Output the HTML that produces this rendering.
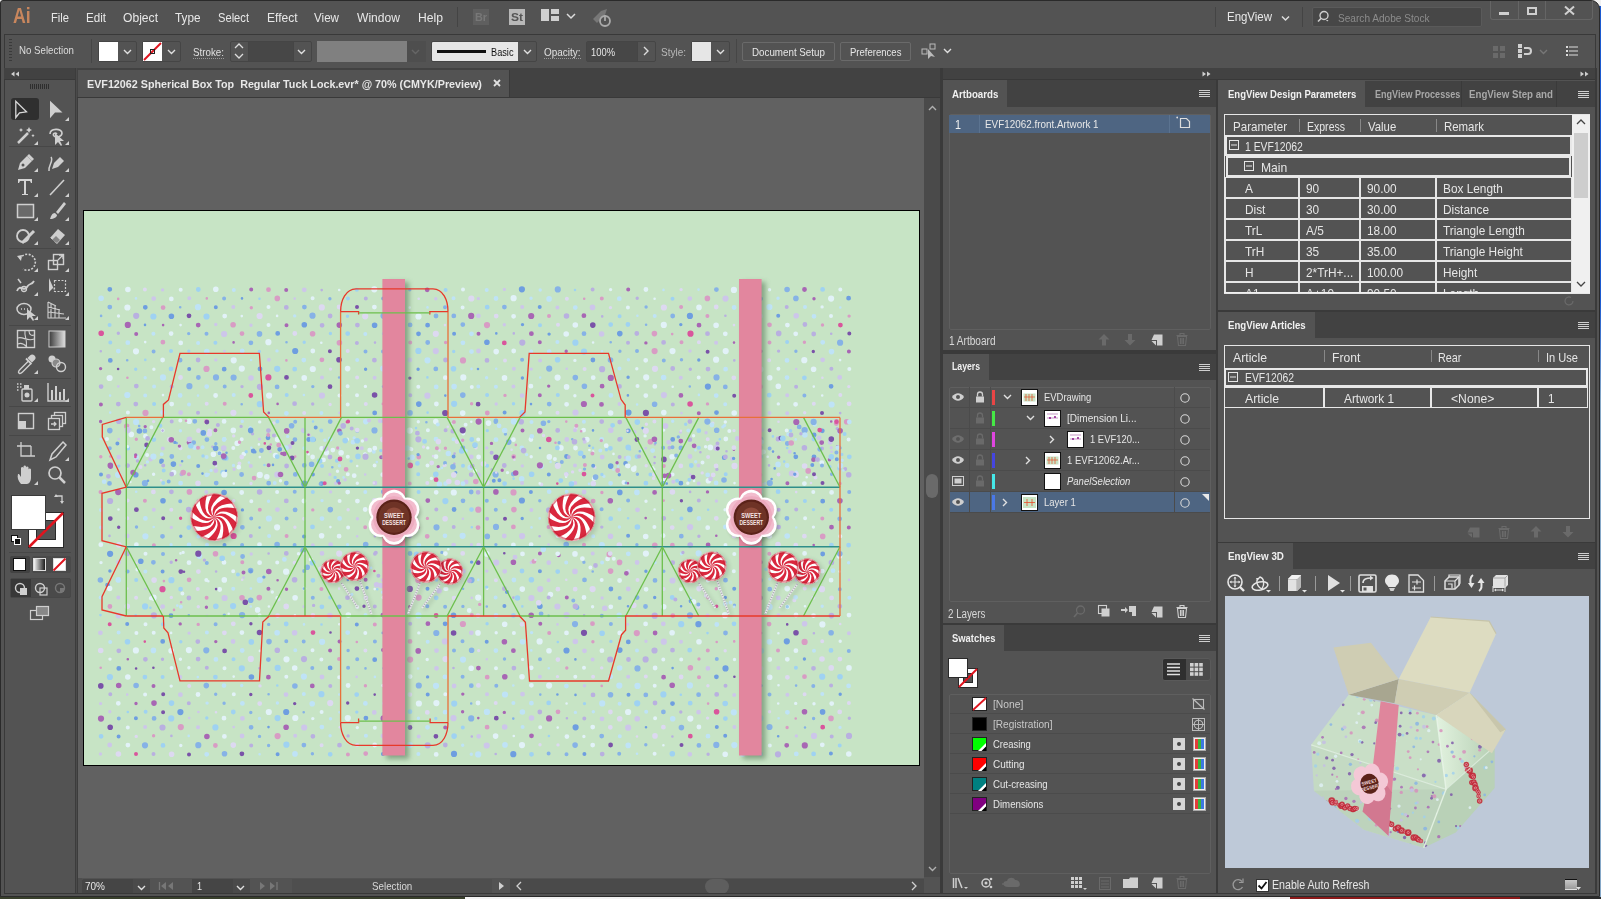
<!DOCTYPE html><html><head><meta charset="utf-8"><style>
*{box-sizing:border-box;margin:0;padding:0}
html,body{width:1601px;height:899px;overflow:hidden;background:#3a3a3a}
body{font-family:"Liberation Sans",sans-serif;font-size:11px;color:#e6e6e6;position:relative}
.a{position:absolute}
.t{position:absolute;white-space:nowrap;line-height:1;transform-origin:0 0}
svg{overflow:visible}
</style></head><body>
<div class="a" style="left:0px;top:0px;width:1601px;height:899px;background:#2f2f2f"></div><div class="a" style="left:1599px;top:0px;width:2px;height:899px;background:linear-gradient(#1c5ad0 0,#1c5ad0 300px,#86a8c8 400px,#86a8c8 899px)"></div><div class="a" style="left:1590px;top:0px;width:11px;height:6px;background:#f0f0f0"></div><div class="a" style="left:0px;top:0px;width:4px;height:2px;background:#f0f0f0"></div><div class="a" style="left:0px;top:0px;width:2px;height:4px;background:#f0f0f0"></div><div class="a" style="left:0px;top:0px;width:1600px;height:897px;background:#535353;border:1px solid #2a2a2a;border-radius:3px 9px 0 0"></div><div class="a" style="left:0px;top:897px;width:465px;height:2px;background:#39402c"></div><div class="a" style="left:465px;top:897px;width:825px;height:2px;background:#f2f2f2"></div><div class="a" style="left:1290px;top:897px;width:230px;height:2px;background:#8a1a1a"></div><div class="a" style="left:1520px;top:897px;width:81px;height:2px;background:#2a2a2a"></div><div class="t" style="left:12.7px;top:4.81px;font-size:22px;color:#c8865d;font-weight:bold;transform:scaleX(0.805);">Ai</div><div class="t" style="left:51px;top:11.02px;font-size:13px;color:#e8e8e8;transform:scaleX(0.859);">File</div><div class="t" style="left:86px;top:11.02px;font-size:13px;color:#e8e8e8;transform:scaleX(0.893);">Edit</div><div class="t" style="left:123px;top:11.02px;font-size:13px;color:#e8e8e8;transform:scaleX(0.932);">Object</div><div class="t" style="left:175px;top:11.02px;font-size:13px;color:#e8e8e8;transform:scaleX(0.905);">Type</div><div class="t" style="left:218px;top:11.02px;font-size:13px;color:#e8e8e8;transform:scaleX(0.858);">Select</div><div class="t" style="left:267px;top:11.02px;font-size:13px;color:#e8e8e8;transform:scaleX(0.924);">Effect</div><div class="t" style="left:314px;top:11.02px;font-size:13px;color:#e8e8e8;transform:scaleX(0.895);">View</div><div class="t" style="left:357px;top:11.02px;font-size:13px;color:#e8e8e8;transform:scaleX(0.930);">Window</div><div class="t" style="left:418px;top:11.02px;font-size:13px;color:#e8e8e8;transform:scaleX(0.935);">Help</div><div class="a" style="left:457px;top:7px;width:1px;height:20px;background:#444"></div><div class="a" style="left:473px;top:9px;width:16px;height:16px;background:#5f5f5f"></div><div class="t" style="left:475px;top:11.71px;font-size:11px;color:#787878;font-weight:bold;transform:scaleX(0.982);">Br</div><div class="a" style="left:509px;top:9px;width:16px;height:16px;background:#b8b8b8"></div><div class="t" style="left:511px;top:11.71px;font-size:11px;color:#555;font-weight:bold;transform:scaleX(1.091);">St</div><svg class="a" style="left:541px;top:9px;" width="18" height="12" viewBox="0 0 18 12"><rect x="0" y="0" width="8" height="12" fill="#cfcfcf"/><rect x="10" y="0" width="8" height="5" fill="#cfcfcf"/><rect x="10" y="7" width="8" height="5" fill="#cfcfcf"/></svg><svg class="a" style="left:566px;top:13px;" width="10" height="6" viewBox="0 0 10 6"><path d="M1 1l4 4 4-4" stroke="#dcdcdc" stroke-width="1.5" fill="none"/></svg><svg class="a" style="left:591px;top:7px;" width="22" height="20" viewBox="0 0 22 20"><path d="M2 12 L10 4 L16 2 L14 8 L6 16 Z" fill="#777"/><circle cx="14" cy="14" r="5" fill="none" stroke="#aaa" stroke-width="1.8"/><path d="M14 8v6" stroke="#aaa" stroke-width="1.8"/></svg><div class="a" style="left:1215px;top:7px;width:1px;height:20px;background:#444"></div><div class="t" style="left:1227px;top:10.43px;font-size:13.4px;color:#e8e8e8;transform:scaleX(0.855);">EngView</div><svg class="a" style="left:1281px;top:16px;" width="9" height="5" viewBox="0 0 9 5"><path d="M1 0.5l3.5 3.5 3.5-3.5" stroke="#dcdcdc" stroke-width="1.5" fill="none"/></svg><div class="a" style="left:1302px;top:7px;width:1px;height:20px;background:#444"></div><div class="a" style="left:1312px;top:7px;width:170px;height:20px;background:#474747;border:1px solid #5a5a5a;border-radius:2px"></div><svg class="a" style="left:1317px;top:10px;" width="14" height="14" viewBox="0 0 14 14"><circle cx="7" cy="5.5" r="4" fill="none" stroke="#cfcfcf" stroke-width="1.4"/><path d="M4.2 8.3 L1 11.5" stroke="#cfcfcf" stroke-width="1.6"/><path d="M9 10l2.5 0 -1.25 1.5z" fill="#cfcfcf"/></svg><div class="t" style="left:1338px;top:11.95px;font-size:11.6px;color:#8c8c8c;transform:scaleX(0.871);">Search Adobe Stock</div><div class="a" style="left:1490px;top:1px;width:103px;height:19px;border:1px solid #656565;border-top:none;border-radius:0 0 3px 3px"></div><div class="a" style="left:1518px;top:1px;width:1px;height:18px;background:#656565"></div><div class="a" style="left:1545px;top:1px;width:1px;height:18px;background:#656565"></div><div class="a" style="left:1499px;top:12px;width:10px;height:3px;background:#cfcfcf"></div><div class="a" style="left:1527px;top:7px;width:10px;height:8px;border:2px solid #cfcfcf"></div><svg class="a" style="left:1564px;top:6px;" width="11" height="9" viewBox="0 0 11 9"><path d="M1 0.5 L10 8.5 M10 0.5 L1 8.5" stroke="#d0d0d0" stroke-width="2"/></svg><div class="a" style="left:4px;top:34px;width:1592px;height:35px;background:#535353;border:1px solid #393939"></div><div class="a" style="left:9px;top:39px;width:3px;height:1px;background:#3a3a3a"></div><div class="a" style="left:9px;top:42px;width:3px;height:1px;background:#3a3a3a"></div><div class="a" style="left:9px;top:45px;width:3px;height:1px;background:#3a3a3a"></div><div class="a" style="left:9px;top:48px;width:3px;height:1px;background:#3a3a3a"></div><div class="a" style="left:9px;top:51px;width:3px;height:1px;background:#3a3a3a"></div><div class="a" style="left:9px;top:54px;width:3px;height:1px;background:#3a3a3a"></div><div class="a" style="left:9px;top:57px;width:3px;height:1px;background:#3a3a3a"></div><div class="a" style="left:9px;top:60px;width:3px;height:1px;background:#3a3a3a"></div><div class="t" style="left:19px;top:44.84px;font-size:11.2px;color:#dcdcdc;transform:scaleX(0.866);">No Selection</div><div class="a" style="left:91px;top:39px;width:1px;height:24px;background:#464646"></div><div class="a" style="left:98px;top:41px;width:39px;height:21px;border:1px solid #454545;border-radius:2px"></div><div class="a" style="left:99px;top:42px;width:19px;height:19px;background:#fff"></div><svg class="a" style="left:123px;top:49px;" width="9" height="6" viewBox="0 0 9 6"><path d="M1 1l3.5 3.5 3.5-3.5" stroke="#e0e0e0" stroke-width="1.4" fill="none"/></svg><div class="a" style="left:142px;top:41px;width:39px;height:21px;border:1px solid #454545;border-radius:2px"></div><div class="a" style="left:143px;top:42px;width:19px;height:19px;background:#fff"></div><svg class="a" style="left:143px;top:42px;" width="19" height="19" viewBox="0 0 19 19"><path d="M1 18 L18 1" stroke="#e0141e" stroke-width="2"/><rect x="7.5" y="7.5" width="4" height="4" fill="none" stroke="#222" stroke-width="1"/></svg><svg class="a" style="left:167px;top:49px;" width="9" height="6" viewBox="0 0 9 6"><path d="M1 1l3.5 3.5 3.5-3.5" stroke="#e0e0e0" stroke-width="1.4" fill="none"/></svg><div class="t" style="left:193px;top:46.99px;font-size:10.9px;color:#e0e0e0;transform:scaleX(0.898);">Stroke:</div><div class="a" style="left:193px;top:58px;width:31px;height:1px;border-top:1px dotted #9a9a9a"></div><div class="a" style="left:230px;top:41px;width:82px;height:21px;border:1px solid #454545;border-radius:2px"></div><div class="a" style="left:248px;top:42px;width:1px;height:19px;background:#454545"></div><div class="a" style="left:249px;top:42px;width:44px;height:19px;background:#474747"></div><div class="a" style="left:293px;top:42px;width:1px;height:19px;background:#454545"></div><svg class="a" style="left:234px;top:43px;" width="10" height="16" viewBox="0 0 10 16"><path d="M1 5l4-4 4 4M1 11l4 4 4-4" stroke="#dcdcdc" stroke-width="1.3" fill="none"/></svg><svg class="a" style="left:297px;top:49px;" width="9" height="6" viewBox="0 0 9 6"><path d="M1 1l3.5 3.5 3.5-3.5" stroke="#e0e0e0" stroke-width="1.4" fill="none"/></svg><div class="a" style="left:317px;top:41px;width:90px;height:21px;background:#808080"></div><div class="a" style="left:407px;top:41px;width:19px;height:21px;background:#4e4e4e"></div><svg class="a" style="left:411px;top:49px;" width="9" height="6" viewBox="0 0 9 6"><path d="M1 1l3.5 3.5 3.5-3.5" stroke="#666" stroke-width="1.4" fill="none"/></svg><div class="a" style="left:432px;top:42px;width:86px;height:19px;background:#e6e6e6"></div><div class="a" style="left:437px;top:50px;width:49px;height:3px;background:#111"></div><div class="t" style="left:490.5px;top:46.99px;font-size:10.9px;color:#111;transform:scaleX(0.844);">Basic</div><div class="a" style="left:431px;top:41px;width:106px;height:21px;border:1px solid #454545;border-radius:2px"></div><svg class="a" style="left:523px;top:49px;" width="9" height="6" viewBox="0 0 9 6"><path d="M1 1l3.5 3.5 3.5-3.5" stroke="#e0e0e0" stroke-width="1.4" fill="none"/></svg><div class="t" style="left:544px;top:46.99px;font-size:10.9px;color:#e0e0e0;transform:scaleX(0.913);">Opacity:</div><div class="a" style="left:544px;top:58px;width:37px;height:1px;border-top:1px dotted #9a9a9a"></div><div class="a" style="left:586px;top:41px;width:70px;height:21px;border:1px solid #454545;border-radius:2px"></div><div class="a" style="left:587px;top:42px;width:50px;height:19px;background:#474747"></div><div class="t" style="left:590.5px;top:46.99px;font-size:10.9px;color:#e6e6e6;transform:scaleX(0.861);">100%</div><div class="a" style="left:637px;top:42px;width:1px;height:19px;background:#454545"></div><svg class="a" style="left:643px;top:46px;" width="6" height="10" viewBox="0 0 6 10"><path d="M1 1l4 4-4 4" stroke="#dcdcdc" stroke-width="1.4" fill="none"/></svg><div class="t" style="left:661px;top:46.99px;font-size:10.9px;color:#b8b8b8;transform:scaleX(0.917);">Style:</div><div class="a" style="left:691px;top:41px;width:39px;height:21px;border:1px solid #454545;border-radius:2px"></div><div class="a" style="left:692px;top:42px;width:19px;height:19px;background:#e6e6e6"></div><svg class="a" style="left:716px;top:49px;" width="9" height="6" viewBox="0 0 9 6"><path d="M1 1l3.5 3.5 3.5-3.5" stroke="#e0e0e0" stroke-width="1.4" fill="none"/></svg><div class="a" style="left:736px;top:39px;width:1px;height:24px;background:#464646"></div><div class="a" style="left:742px;top:42px;width:93px;height:19px;border:1px solid #6a6a6a;border-radius:2px"></div><div class="t" style="left:752px;top:46.99px;font-size:10.9px;color:#e6e6e6;transform:scaleX(0.899);">Document Setup</div><div class="a" style="left:840px;top:42px;width:71px;height:19px;border:1px solid #6a6a6a;border-radius:2px"></div><div class="t" style="left:849.5px;top:46.99px;font-size:10.9px;color:#e6e6e6;transform:scaleX(0.876);">Preferences</div><svg class="a" style="left:921px;top:43px;" width="16" height="16" viewBox="0 0 16 16"><rect x="9" y="1" width="5" height="5" fill="none" stroke="#bbb" stroke-width="1"/><rect x="1" y="6" width="5" height="5" fill="none" stroke="#bbb" stroke-width="1"/><path d="M7 6 L7 16 L10 13 L14 14 Z" fill="#bbb"/></svg><svg class="a" style="left:943px;top:48px;" width="9" height="6" viewBox="0 0 9 6"><path d="M1 1l3.5 3.5 3.5-3.5" stroke="#e0e0e0" stroke-width="1.4" fill="none"/></svg><svg class="a" style="left:1491px;top:44px;" width="16" height="16" viewBox="0 0 16 16"><rect x="2" y="2" width="5" height="5" fill="#6a6a6a"/><rect x="9" y="2" width="5" height="5" fill="#6a6a6a"/><rect x="2" y="9" width="5" height="5" fill="#6a6a6a"/><rect x="9" y="9" width="5" height="5" fill="#6a6a6a"/></svg><svg class="a" style="left:1517px;top:43px;" width="16" height="16" viewBox="0 0 16 16"><rect x="1" y="1" width="4" height="4" fill="#d0d0d0"/><rect x="1" y="6" width="4" height="4" fill="#d0d0d0"/><rect x="1" y="11" width="4" height="4" fill="#d0d0d0"/><path d="M7 5 H11 A3 3 0 0 1 11 11 H7" stroke="#d0d0d0" stroke-width="2" fill="none"/></svg><svg class="a" style="left:1539px;top:49px;" width="9" height="6" viewBox="0 0 9 6"><path d="M1 1l3.5 3.5 3.5-3.5" stroke="#777" stroke-width="1.4" fill="none"/></svg><svg class="a" style="left:1566px;top:46px;" width="12" height="10" viewBox="0 0 12 10"><rect x="0" y="0" width="2" height="2" fill="#ddd"/><rect x="0" y="4" width="2" height="2" fill="#ddd"/><rect x="0" y="8" width="2" height="2" fill="#ddd"/><rect x="3" y="0.5" width="9" height="1" fill="#ddd"/><rect x="3" y="4.5" width="9" height="1" fill="#ddd"/><rect x="3" y="8.5" width="9" height="1" fill="#ddd"/></svg><div class="a" style="left:4px;top:68px;width:72px;height:12px;background:#424242;border-bottom:1px solid #393939"></div><svg class="a" style="left:10px;top:71px;" width="10" height="6" viewBox="0 0 10 6"><path d="M4.5 0.5 L1 3 L4.5 5.5Z M9 0.5 L5.5 3 L9 5.5Z" fill="#cfcfcf"/></svg><div class="a" style="left:4px;top:80px;width:72px;height:814px;background:#535353;border-left:1px solid #393939;border-right:1px solid #393939;border-bottom:1px solid #393939"></div><div class="a" style="left:75px;top:68px;width:3px;height:826px;background:#3c3c3c"></div><div class="a" style="left:76px;top:68px;width:1px;height:826px;background:#4a4a4a"></div><div class="a" style="left:30px;top:84px;width:1px;height:5px;background:#2e2e2e"></div><div class="a" style="left:32px;top:84px;width:1px;height:5px;background:#2e2e2e"></div><div class="a" style="left:34px;top:84px;width:1px;height:5px;background:#2e2e2e"></div><div class="a" style="left:36px;top:84px;width:1px;height:5px;background:#2e2e2e"></div><div class="a" style="left:38px;top:84px;width:1px;height:5px;background:#2e2e2e"></div><div class="a" style="left:40px;top:84px;width:1px;height:5px;background:#2e2e2e"></div><div class="a" style="left:42px;top:84px;width:1px;height:5px;background:#2e2e2e"></div><div class="a" style="left:44px;top:84px;width:1px;height:5px;background:#2e2e2e"></div><div class="a" style="left:46px;top:84px;width:1px;height:5px;background:#2e2e2e"></div><div class="a" style="left:48px;top:84px;width:1px;height:5px;background:#2e2e2e"></div><div class="a" style="left:11px;top:98px;width:28px;height:22px;background:#2f2f2f;border-radius:3px"></div><svg class="a" style="left:15px;top:100px;" width="22" height="22" viewBox="0 0 22 22"><path d="M0.8 1.2 L0.8 17.5 L4.5 12.8 L11.5 11.8 Z" fill="none" stroke="#d8d8d8" stroke-width="1.3" stroke-linejoin="miter"/></svg><svg class="a" style="left:46px;top:100px;" width="22" height="22" viewBox="0 0 22 22"><path d="M4 0.8 L4 18.3 L9 12.5 L16.5 12.5 Z" fill="#cfcfcf"/></svg><svg class="a" style="left:65px;top:117px;" width="4" height="4" viewBox="0 0 4 4"><path d="M4 0 L4 4 L0 4Z" fill="#d0d0d0"/></svg><svg class="a" style="left:15px;top:124px;" width="22" height="22" viewBox="0 0 22 22"><path d="M3 19 L13 9" stroke="#cfcfcf" stroke-width="2.5"/><path d="M14 3l1 2 2 1-2 1-1 2-1-2-2-1 2-1z M6 4l.7 1.3 1.3.7-1.3.7-.7 1.3-.7-1.3-1.3-.7 1.3-.7z M18 10l.6 1 1 .6-1 .6-.6 1-.6-1-1-.6 1-.6z" fill="#cfcfcf"/></svg><svg class="a" style="left:34px;top:141px;" width="4" height="4" viewBox="0 0 4 4"><path d="M4 0 L4 4 L0 4Z" fill="#d0d0d0"/></svg><svg class="a" style="left:46px;top:124px;" width="22" height="22" viewBox="0 0 22 22"><path d="M4 10 C4 4 16 4 16 9 C16 13 10 14 8 12 C6 10 9 8 11 10" fill="none" stroke="#cfcfcf" stroke-width="1.6"/><path d="M9 9 L9 21 L12 18 L15 22 L16 21 L14 17 L18 17Z" fill="#cfcfcf"/></svg><svg class="a" style="left:65px;top:141px;" width="4" height="4" viewBox="0 0 4 4"><path d="M4 0 L4 4 L0 4Z" fill="#d0d0d0"/></svg><div class="a" style="left:9px;top:146px;width:62px;height:1px;background:#474747"></div><svg class="a" style="left:15px;top:151px;" width="22" height="22" viewBox="0 0 22 22"><path d="M3 19 L5 12 L12 5 L17 10 L10 17 Z" fill="#cfcfcf"/><path d="M12 5 L14 3 L19 8 L17 10Z" fill="#cfcfcf"/><circle cx="8" cy="14" r="1.5" fill="#535353"/></svg><svg class="a" style="left:34px;top:168px;" width="4" height="4" viewBox="0 0 4 4"><path d="M4 0 L4 4 L0 4Z" fill="#d0d0d0"/></svg><svg class="a" style="left:46px;top:151px;" width="22" height="22" viewBox="0 0 22 22"><path d="M3 20 C2 14 8 10 5 6" fill="none" stroke="#cfcfcf" stroke-width="1.5"/><path d="M6 18 L8 12 L14 6 L18 10 L12 16Z" fill="#cfcfcf"/></svg><svg class="a" style="left:65px;top:168px;" width="4" height="4" viewBox="0 0 4 4"><path d="M4 0 L4 4 L0 4Z" fill="#d0d0d0"/></svg><svg class="a" style="left:15px;top:176px;" width="22" height="22" viewBox="0 0 22 22"><path d="M3 3 H17 V7 H16 L15 5 H11 V18 H13 V19 H7 V18 H9 V5 H5 L4 7 H3Z" fill="#d4d4d4"/></svg><svg class="a" style="left:34px;top:193px;" width="4" height="4" viewBox="0 0 4 4"><path d="M4 0 L4 4 L0 4Z" fill="#d0d0d0"/></svg><svg class="a" style="left:46px;top:176px;" width="22" height="22" viewBox="0 0 22 22"><path d="M4 19 L18 4" stroke="#cfcfcf" stroke-width="1.6"/></svg><svg class="a" style="left:65px;top:193px;" width="4" height="4" viewBox="0 0 4 4"><path d="M4 0 L4 4 L0 4Z" fill="#d0d0d0"/></svg><svg class="a" style="left:15px;top:200px;" width="22" height="22" viewBox="0 0 22 22"><rect x="2.5" y="4.5" width="16" height="13" fill="#6a6a6a" stroke="#cfcfcf" stroke-width="1.5"/></svg><svg class="a" style="left:34px;top:217px;" width="4" height="4" viewBox="0 0 4 4"><path d="M4 0 L4 4 L0 4Z" fill="#d0d0d0"/></svg><svg class="a" style="left:46px;top:200px;" width="22" height="22" viewBox="0 0 22 22"><path d="M18 2 L10 12 L12 14 L20 4Z" fill="#cfcfcf"/><path d="M9 13 C6 13 5 16 4 19 C8 19 11 17 11 15Z" fill="#cfcfcf"/></svg><svg class="a" style="left:65px;top:217px;" width="4" height="4" viewBox="0 0 4 4"><path d="M4 0 L4 4 L0 4Z" fill="#d0d0d0"/></svg><svg class="a" style="left:15px;top:224px;" width="22" height="22" viewBox="0 0 22 22"><circle cx="8" cy="12" r="6" fill="none" stroke="#cfcfcf" stroke-width="1.8"/><path d="M7 19 L19 7" stroke="#cfcfcf" stroke-width="3"/></svg><svg class="a" style="left:34px;top:241px;" width="4" height="4" viewBox="0 0 4 4"><path d="M4 0 L4 4 L0 4Z" fill="#d0d0d0"/></svg><svg class="a" style="left:46px;top:224px;" width="22" height="22" viewBox="0 0 22 22"><path d="M4 14 L12 5 L19 11 L11 20 Z" fill="#cfcfcf"/><path d="M4 14 L8 18" stroke="#535353" stroke-width="1"/><path d="M6 16 L10 12 L14 16 L11 19Z" fill="#535353" opacity="0.6"/></svg><svg class="a" style="left:65px;top:241px;" width="4" height="4" viewBox="0 0 4 4"><path d="M4 0 L4 4 L0 4Z" fill="#d0d0d0"/></svg><div class="a" style="left:9px;top:248px;width:62px;height:1px;background:#474747"></div><svg class="a" style="left:15px;top:251px;" width="22" height="22" viewBox="0 0 22 22"><path d="M5 8 A8 8 0 1 1 8 18" fill="none" stroke="#cfcfcf" stroke-width="1.6" stroke-dasharray="2 1.5"/><path d="M2 5 L7 4 L6 10Z" fill="#cfcfcf"/></svg><svg class="a" style="left:34px;top:268px;" width="4" height="4" viewBox="0 0 4 4"><path d="M4 0 L4 4 L0 4Z" fill="#d0d0d0"/></svg><svg class="a" style="left:46px;top:251px;" width="22" height="22" viewBox="0 0 22 22"><rect x="2.5" y="9.5" width="9" height="9" fill="none" stroke="#cfcfcf" stroke-width="1.4"/><rect x="7.5" y="3.5" width="10" height="10" fill="none" stroke="#cfcfcf" stroke-width="1.4"/><path d="M12 9 L17 4 M13 4 H17 V8" stroke="#cfcfcf" stroke-width="1.3" fill="none"/></svg><svg class="a" style="left:65px;top:268px;" width="4" height="4" viewBox="0 0 4 4"><path d="M4 0 L4 4 L0 4Z" fill="#d0d0d0"/></svg><svg class="a" style="left:15px;top:275px;" width="22" height="22" viewBox="0 0 22 22"><path d="M2 16 C5 8 9 18 12 12 C14 8 17 10 19 6" fill="none" stroke="#cfcfcf" stroke-width="1.8"/><circle cx="9" cy="14" r="2.5" fill="none" stroke="#cfcfcf" stroke-width="1.3"/><path d="M3 4 L6 8" stroke="#cfcfcf" stroke-width="1.5"/></svg><svg class="a" style="left:34px;top:292px;" width="4" height="4" viewBox="0 0 4 4"><path d="M4 0 L4 4 L0 4Z" fill="#d0d0d0"/></svg><svg class="a" style="left:46px;top:275px;" width="22" height="22" viewBox="0 0 22 22"><path d="M3 3 L3 17 L7 13 L10 19Z" fill="#cfcfcf"/><rect x="8.5" y="5.5" width="11" height="11" fill="none" stroke="#cfcfcf" stroke-width="1.2" stroke-dasharray="2 1.5"/></svg><svg class="a" style="left:65px;top:292px;" width="4" height="4" viewBox="0 0 4 4"><path d="M4 0 L4 4 L0 4Z" fill="#d0d0d0"/></svg><svg class="a" style="left:15px;top:299px;" width="22" height="22" viewBox="0 0 22 22"><ellipse cx="9" cy="10" rx="7" ry="5.5" fill="none" stroke="#cfcfcf" stroke-width="1.5"/><path d="M6 10h1M9 10h1M12 10h1" stroke="#cfcfcf" stroke-width="1.4"/><path d="M12 10 L12 21 L15 18 L18 22 L19 21 L17 17 L21 17Z" fill="#cfcfcf"/></svg><svg class="a" style="left:34px;top:316px;" width="4" height="4" viewBox="0 0 4 4"><path d="M4 0 L4 4 L0 4Z" fill="#d0d0d0"/></svg><svg class="a" style="left:46px;top:299px;" width="22" height="22" viewBox="0 0 22 22"><path d="M2 3 L2 19 L20 19 M2 3 L10 7 M2 8 L14 11 M2 13 L18 15 M5 5 L5 19 M9 7 L9 19 M13 10 L13 19" stroke="#cfcfcf" stroke-width="1.1" fill="none"/></svg><svg class="a" style="left:65px;top:316px;" width="4" height="4" viewBox="0 0 4 4"><path d="M4 0 L4 4 L0 4Z" fill="#d0d0d0"/></svg><div class="a" style="left:9px;top:325px;width:62px;height:1px;background:#474747"></div><svg class="a" style="left:15px;top:328px;" width="22" height="22" viewBox="0 0 22 22"><rect x="2.5" y="2.5" width="17" height="17" fill="none" stroke="#cfcfcf" stroke-width="1.4"/><path d="M3 10 C8 8 12 14 19 11 M10 3 C9 8 13 13 11 19 M3 16 C7 14 10 17 12 19 M14 3 C14 7 17 8 19 7" stroke="#cfcfcf" stroke-width="1.1" fill="none"/></svg><svg class="a" style="left:46px;top:328px;" width="22" height="22" viewBox="0 0 22 22"><defs><linearGradient id="gg" x1="0" x2="1"><stop offset="0" stop-color="#3a3a3a"/><stop offset="1" stop-color="#e0e0e0"/></linearGradient></defs><rect x="3" y="3" width="16" height="16" fill="url(#gg)" stroke="#cfcfcf" stroke-width="1"/></svg><svg class="a" style="left:15px;top:353px;" width="22" height="22" viewBox="0 0 22 22"><path d="M15 2.5 A2.5 2.5 0 0 1 19.5 7 L17 9.5 L12.5 5Z" fill="#cfcfcf"/><path d="M11 5.5 L16.5 11" stroke="#cfcfcf" stroke-width="1.8"/><path d="M13.5 8 L5 16.5 C3.5 18 3 19.5 4 20 C4.5 21 6 20.5 7.5 19 L16 10.5" fill="none" stroke="#cfcfcf" stroke-width="1.4"/></svg><svg class="a" style="left:34px;top:370px;" width="4" height="4" viewBox="0 0 4 4"><path d="M4 0 L4 4 L0 4Z" fill="#d0d0d0"/></svg><svg class="a" style="left:46px;top:353px;" width="22" height="22" viewBox="0 0 22 22"><circle cx="6" cy="6" r="3.5" fill="#cfcfcf"/><circle cx="10" cy="10" r="4" fill="#8a8a8a" stroke="#cfcfcf" stroke-width="1.2"/><circle cx="15" cy="14" r="4.5" fill="none" stroke="#cfcfcf" stroke-width="1.4"/></svg><div class="a" style="left:9px;top:378px;width:62px;height:1px;background:#474747"></div><svg class="a" style="left:15px;top:381px;" width="22" height="22" viewBox="0 0 22 22"><rect x="7" y="8" width="10" height="12" rx="1" fill="none" stroke="#cfcfcf" stroke-width="1.4"/><circle cx="12" cy="14" r="2.5" fill="#cfcfcf"/><rect x="9" y="4" width="5" height="4" fill="#cfcfcf"/><path d="M2 3h1.5M5 3h1.5M2 6h1.5M5 6h1.5M2 9h1.5" stroke="#cfcfcf" stroke-width="1.5"/></svg><svg class="a" style="left:34px;top:398px;" width="4" height="4" viewBox="0 0 4 4"><path d="M4 0 L4 4 L0 4Z" fill="#d0d0d0"/></svg><svg class="a" style="left:46px;top:381px;" width="22" height="22" viewBox="0 0 22 22"><path d="M2 2 V20 H21" stroke="#cfcfcf" stroke-width="1.4" fill="none"/><path d="M6 19 V9 M10 19 V5 M14 19 V11 M18 19 V8" stroke="#cfcfcf" stroke-width="2"/></svg><svg class="a" style="left:65px;top:398px;" width="4" height="4" viewBox="0 0 4 4"><path d="M4 0 L4 4 L0 4Z" fill="#d0d0d0"/></svg><div class="a" style="left:9px;top:406px;width:62px;height:1px;background:#474747"></div><svg class="a" style="left:15px;top:410px;" width="22" height="22" viewBox="0 0 22 22"><rect x="3.5" y="3.5" width="15" height="15" fill="none" stroke="#cfcfcf" stroke-width="1.4"/><rect x="3" y="11" width="8" height="8" fill="#cfcfcf"/></svg><svg class="a" style="left:46px;top:410px;" width="22" height="22" viewBox="0 0 22 22"><rect x="8.5" y="2.5" width="11" height="11" fill="none" stroke="#cfcfcf" stroke-width="1.3"/><rect x="5.5" y="5.5" width="11" height="11" fill="#535353" stroke="#cfcfcf" stroke-width="1.3"/><rect x="2.5" y="8.5" width="11" height="11" fill="#535353" stroke="#cfcfcf" stroke-width="1.3"/><path d="M5 14 H10 M8 12 L10 14 L8 16" stroke="#cfcfcf" stroke-width="1.3" fill="none"/></svg><div class="a" style="left:9px;top:435px;width:62px;height:1px;background:#474747"></div><svg class="a" style="left:15px;top:440px;" width="22" height="22" viewBox="0 0 22 22"><path d="M6 2 V16 H20 M2 6 H6 M16 6 H6 M16 6 V16" stroke="#cfcfcf" stroke-width="1.3" fill="none"/></svg><svg class="a" style="left:46px;top:440px;" width="22" height="22" viewBox="0 0 22 22"><path d="M17 2 L20 5 L10 17 L4 20 L6 14Z" fill="none" stroke="#cfcfcf" stroke-width="1.5"/></svg><svg class="a" style="left:65px;top:457px;" width="4" height="4" viewBox="0 0 4 4"><path d="M4 0 L4 4 L0 4Z" fill="#d0d0d0"/></svg><svg class="a" style="left:15px;top:464px;" width="22" height="22" viewBox="0 0 22 22"><path d="M6 20 C3 17 2 13 3 10 L4 10 L6 13 V4 A1.3 1.3 0 0 1 8.5 4 V10 V2.5 A1.3 1.3 0 0 1 11 2.5 V10 V3.5 A1.3 1.3 0 0 1 13.5 3.5 V10 V5.5 A1.3 1.3 0 0 1 16 5.5 V14 C16 17 14 20 12 20Z" fill="#cfcfcf"/></svg><svg class="a" style="left:34px;top:481px;" width="4" height="4" viewBox="0 0 4 4"><path d="M4 0 L4 4 L0 4Z" fill="#d0d0d0"/></svg><svg class="a" style="left:46px;top:464px;" width="22" height="22" viewBox="0 0 22 22"><circle cx="9" cy="9" r="6" fill="none" stroke="#cfcfcf" stroke-width="1.7"/><path d="M13.5 13.5 L19 19" stroke="#cfcfcf" stroke-width="2.5"/></svg><div class="a" style="left:11px;top:495px;width:35px;height:35px;background:#fff;border:1px solid #2a2a2a"></div><div class="a" style="left:28px;top:512px;width:36px;height:36px;background:#fff;border:1px solid #2a2a2a"></div><div class="a" style="left:36px;top:520px;width:20px;height:20px;background:#535353;border:1px solid #2a2a2a"></div><div class="a" style="left:11px;top:495px;width:35px;height:35px;background:#fff;border:1px solid #3a3a3a"></div><svg class="a" style="left:28px;top:512px;" width="36" height="36" viewBox="0 0 36 36"><path d="M1 35 L35 1" stroke="#e0141e" stroke-width="2.5"/></svg><div class="a" style="left:11px;top:495px;width:35px;height:35px;background:#fff;border:1px solid #3a3a3a"></div><svg class="a" style="left:53px;top:493px;" width="12" height="12" viewBox="0 0 12 12"><path d="M3 3 H9 V9" stroke="#cfcfcf" stroke-width="1.3" fill="none"/><path d="M1 4 L3 1 L5 4Z M7 8 L9 11 L11 8Z" fill="#cfcfcf"/></svg><svg class="a" style="left:10px;top:534px;" width="12" height="12" viewBox="0 0 12 12"><rect x="1.5" y="1.5" width="6" height="6" fill="#fff" stroke="#111"/><rect x="4.5" y="4.5" width="6" height="6" fill="#111" stroke="#fff" stroke-width="1"/></svg><div class="a" style="left:9px;top:552px;width:62px;height:1px;background:#474747"></div><div class="a" style="left:10px;top:556px;width:20px;height:17px;background:#424242;border-radius:2px"></div><div class="a" style="left:13px;top:558px;width:13px;height:13px;background:#fff;border:1px solid #111"></div><div class="a" style="left:32px;top:556px;width:20px;height:17px;background:#4a4a4a;border-radius:2px"></div><svg class="a" style="left:33px;top:558px;" width="13" height="13" viewBox="0 0 13 13"><defs><linearGradient id="g2" x1="0" x2="1"><stop offset="0" stop-color="#fff"/><stop offset="1" stop-color="#111"/></linearGradient></defs><rect x="0.5" y="0.5" width="12" height="12" fill="url(#g2)" stroke="#ddd"/></svg><div class="a" style="left:51px;top:556px;width:20px;height:17px;background:#4a4a4a;border-radius:2px"></div><svg class="a" style="left:53px;top:558px;" width="13" height="13" viewBox="0 0 13 13"><rect x="0.5" y="0.5" width="12" height="12" fill="#fff" stroke="#ddd"/><path d="M0.5 12.5 L12.5 0.5" stroke="#e0141e" stroke-width="2"/></svg><div class="a" style="left:10px;top:578px;width:61px;height:20px;background:#4a4a4a;border:1px solid #474747;border-radius:2px"></div><div class="a" style="left:11px;top:579px;width:20px;height:18px;background:#383838"></div><svg class="a" style="left:14px;top:582px;" width="14" height="14" viewBox="0 0 14 14"><circle cx="6" cy="6" r="4.5" fill="none" stroke="#cfcfcf" stroke-width="1.4"/><rect x="6" y="6" width="7" height="7" fill="#cfcfcf"/></svg><svg class="a" style="left:34px;top:582px;" width="14" height="14" viewBox="0 0 14 14"><circle cx="6" cy="6" r="4.5" fill="none" stroke="#cfcfcf" stroke-width="1.4"/><rect x="6" y="6" width="7" height="7" fill="none" stroke="#cfcfcf" stroke-width="1.2"/></svg><svg class="a" style="left:54px;top:582px;" width="12" height="12" viewBox="0 0 12 12"><circle cx="6" cy="6" r="4.5" fill="none" stroke="#777" stroke-width="1.4"/><rect x="6" y="6" width="4" height="4" fill="#777"/></svg><svg class="a" style="left:29px;top:605px;" width="22" height="18" viewBox="0 0 22 18"><rect x="1.5" y="5.5" width="12" height="9" fill="none" stroke="#cfcfcf" stroke-width="1.2"/><rect x="7.5" y="1.5" width="12" height="9" fill="#888" stroke="#cfcfcf" stroke-width="1.2"/></svg><div class="a" style="left:77px;top:68px;width:866px;height:30px;background:#424242"></div><div class="a" style="left:78px;top:70px;width:432px;height:28px;background:#535353;border-right:1px solid #3a3a3a"></div><div class="t" style="left:87px;top:78.20px;font-size:11.6px;color:#e8e8e8;font-weight:bold;transform:scaleX(0.926);">EVF12062 Spherical Box Top&nbsp; Regular Tuck Lock.evr* @ 70% (CMYK/Preview)</div><svg class="a" style="left:493px;top:79px;" width="8" height="8" viewBox="0 0 8 8"><path d="M1 1 L7 7 M7 1 L1 7" stroke="#e0e0e0" stroke-width="1.8"/></svg><div class="a" style="left:77px;top:97px;width:866px;height:1px;background:#393939"></div><div class="a" style="left:78px;top:98px;width:846px;height:780px;background:#616161"></div><svg class="a" style="left:78px;top:98px" width="846" height="780" viewBox="78 98 846 780"><rect x="83.5" y="210.5" width="836" height="555" fill="#c7e4c5" stroke="#000" stroke-width="1"/><path d="M109.8 289.3h0M848.6 298.2h0M145.3 307.3h0M427.6 325.2h0M277.7 333.4h0M418.5 333.8h0M110.3 360.4h0M592.9 360.0h0M224.2 369.2h0M260.0 368.9h0M831.1 386.3h0M751.7 395.0h0M374.7 412.9h0M716.5 412.6h0M628.3 430.8h0M822.3 430.8h0M672.7 439.4h0M566.5 456.5h0M795.8 456.8h0M814.0 456.8h0M321.6 483.6h0M680.9 483.2h0M822.7 501.2h0M454.1 509.5h0M822.7 554.0h0M813.7 580.2h0M610.9 589.0h0M171.0 615.7h0M445.1 623.8h0M162.7 641.4h0M628.3 641.9h0M374.7 659.7h0M118.8 668.4h0M330.1 667.9h0M716.4 676.8h0M672.5 703.6h0M365.9 718.1h0M161.6 460.8h0M724.2 457.7h0M308.7 439.5h0M814.1 435.0h0M279.7 449.3h0M253.2 451.0h0M625.6 463.4h0M268.0 437.8h0M107.6 585.1h0M691.0 601.1h0" stroke="#6e9ee0" stroke-width="4.8" stroke-linecap="round"/><path d="M127.9 289.5h0M215.8 289.3h0M699.0 307.4h0M575.3 325.0h0M716.1 325.3h0M566.2 334.0h0M496.2 351.6h0M347.6 368.6h0M813.6 369.2h0M304.2 377.9h0M504.5 377.9h0M769.7 377.7h0M566.6 386.9h0M778.3 386.2h0M462.7 413.1h0M610.6 413.0h0M663.8 412.6h0M734.2 413.0h0M189.2 421.3h0M435.8 421.6h0M233.3 430.4h0M277.6 439.5h0M549.3 456.9h0M672.1 456.7h0M321.6 535.8h0M645.7 536.5h0M769.3 535.8h0M486.7 553.9h0M575.0 553.9h0M365.4 562.3h0M224.3 579.9h0M109.6 588.5h0M522.3 589.1h0M787.2 588.6h0M295.1 597.8h0M663.7 606.8h0M348.3 615.0h0M504.7 624.2h0M478.0 632.9h0M672.1 632.8h0M699.0 641.7h0M171.1 650.8h0M549.0 650.7h0M294.7 668.0h0M471.2 668.2h0M849.0 667.9h0M127.8 677.0h0M522.0 676.7h0M769.7 677.3h0M495.6 736.1h0M725.2 754.3h0M848.8 754.0h0M237.2 443.2h0M710.3 447.4h0M633.7 469.1h0M275.5 455.5h0M488.5 423.1h0M131.3 434.4h0M708.4 480.7h0M560.9 447.9h0M266.8 476.8h0M586.8 439.6h0M326.4 452.6h0M664.0 480.6h0M213.4 454.3h0M173.6 472.6h0M341.1 452.8h0M550.4 594.5h0M257.6 609.9h0M693.4 601.8h0M839.5 555.9h0" stroke="#e2f2f8" stroke-width="5.6" stroke-linecap="round"/><path d="M144.9 289.6h0M566.9 298.7h0M558.0 324.7h0M698.9 342.3h0M347.7 351.0h0M505.0 360.5h0M769.1 360.3h0M584.6 368.9h0M357.1 377.6h0M840.3 394.9h0M206.7 403.7h0M365.8 403.9h0M813.8 403.7h0M304.2 412.9h0M557.5 412.8h0M654.4 421.5h0M707.7 439.2h0M180.5 448.3h0M708.1 457.1h0M778.5 474.5h0M427.3 483.0h0M127.6 500.5h0M171.3 509.7h0M743.2 509.4h0M127.3 518.2h0M304.1 518.7h0M294.6 562.8h0M628.1 571.2h0M495.9 580.2h0M637.5 580.0h0M197.8 588.9h0M663.6 588.9h0M804.7 588.6h0M136.1 597.8h0M813.3 597.7h0M698.4 606.8h0M742.8 633.3h0M822.2 641.3h0M365.4 650.4h0M593.1 676.7h0M645.8 676.6h0M189.2 686.0h0M804.6 694.3h0M495.7 702.9h0M848.9 703.1h0M760.6 736.2h0M321.6 745.3h0M357.2 744.9h0M815.5 477.6h0M140.5 467.0h0M391.3 439.0h0M779.3 439.9h0M541.3 484.5h0M239.4 463.6h0M575.7 428.5h0M743.3 458.9h0M705.9 595.5h0M278.6 599.5h0M794.3 600.2h0" stroke="#ddd9f1" stroke-width="4" stroke-linecap="round"/><path d="M162.6 289.9h0M504.4 289.4h0M435.8 298.8h0M478.3 298.6h0M215.8 324.5h0M251.0 325.2h0M504.3 324.8h0M760.6 333.9h0M690.0 351.0h0M215.8 359.9h0M531.2 369.1h0M496.2 404.0h0M259.5 439.1h0M486.8 447.9h0M522.3 465.9h0M329.9 474.5h0M330.6 491.9h0M716.4 501.0h0M383.0 510.1h0M197.9 518.2h0M357.4 518.8h0M409.6 518.7h0M171.3 527.4h0M471.4 544.7h0M251.2 554.0h0M383.4 562.7h0M531.3 562.4h0M486.8 571.1h0M778.5 580.5h0M602.1 598.0h0M304.0 606.6h0M189.1 633.1h0M646.0 641.3h0M584.5 685.8h0M100.6 703.6h0M109.8 711.8h0M796.3 735.9h0M100.5 754.0h0M831.2 447.7h0M234.1 469.3h0M706.1 432.8h0M625.5 457.6h0M335.8 483.3h0M680.5 432.1h0M309.2 435.1h0M345.1 479.8h0M674.5 599.4h0" stroke="#cdc6ea" stroke-width="3.4" stroke-linecap="round"/><path d="M180.7 289.8h0M463.0 289.4h0M840.3 289.6h0M312.6 298.2h0M400.9 298.8h0M268.5 307.0h0M462.6 307.5h0M627.9 307.5h0M831.0 315.9h0M268.5 325.1h0M778.4 368.7h0M849.3 369.0h0M698.7 377.4h0M294.8 386.4h0M347.6 386.3h0M418.3 386.7h0M471.8 386.9h0M637.5 386.1h0M339.5 395.4h0M357.0 395.3h0M347.7 404.4h0M127.9 412.6h0M540.2 412.8h0M162.6 430.5h0M427.9 430.3h0M751.6 430.2h0M786.7 430.4h0M224.4 439.3h0M241.7 439.3h0M478.2 439.4h0M848.6 439.6h0M233.3 448.0h0M347.8 456.8h0M374.6 465.4h0M427.5 465.6h0M347.8 474.2h0M672.6 474.6h0M277.1 492.1h0M400.8 492.1h0M813.3 492.0h0M251.3 501.2h0M339.6 501.1h0M805.1 518.2h0M348.1 527.6h0M654.4 527.0h0M840.3 536.3h0M725.5 544.9h0M145.5 553.8h0M734.3 553.9h0M277.2 562.5h0M233.2 571.2h0M733.8 571.2h0M206.3 580.0h0M401.2 580.2h0M601.7 579.9h0M707.9 580.4h0M445.2 589.1h0M680.9 589.2h0M277.3 598.1h0M383.5 597.6h0M357.3 606.9h0M259.6 615.3h0M145.5 624.3h0M136.4 632.9h0M153.7 632.7h0M365.3 633.1h0M513.9 633.1h0M312.5 650.2h0M321.4 659.4h0M663.3 659.5h0M681.2 659.4h0M171.6 668.1h0M224.5 668.2h0M496.0 668.3h0M584.0 667.8h0M286.3 676.8h0M339.2 677.3h0M575.3 676.8h0M654.7 685.7h0M145.1 694.4h0M233.8 694.2h0M445.3 694.2h0M321.6 712.0h0M655.1 718.3h0M127.8 727.5h0M374.8 727.7h0M540.2 727.2h0M769.8 745.5h0M654.6 753.7h0M147.1 454.9h0M107.0 439.1h0M463.3 433.6h0M411.4 449.2h0M729.3 430.9h0M180.3 420.6h0M465.6 424.8h0M475.0 471.0h0M652.5 468.0h0M761.0 454.4h0M554.9 458.9h0M151.4 427.3h0M365.0 454.3h0M702.5 462.5h0M137.4 569.5h0M815.9 580.2h0M398.7 611.4h0M613.8 558.8h0M310.8 559.6h0M182.4 593.4h0M150.8 598.3h0M446.5 589.0h0M304.3 588.6h0M590.4 567.5h0" stroke="#e2f2f8" stroke-width="4" stroke-linecap="round"/><path d="M198.3 289.5h0M822.6 289.4h0M487.2 307.2h0M610.7 324.6h0M627.9 324.5h0M347.7 333.6h0M171.0 368.9h0M294.7 369.2h0M804.4 377.8h0M769.2 395.2h0M751.6 412.9h0M304.0 430.8h0M698.8 430.7h0M153.8 439.6h0M471.8 439.5h0M813.9 439.0h0M127.8 448.2h0M557.4 447.9h0M610.4 448.3h0M628.3 448.0h0M277.2 456.7h0M637.0 456.6h0M760.7 456.6h0M849.3 456.8h0M504.6 483.6h0M645.9 483.2h0M778.1 491.7h0M471.5 509.6h0M233.2 518.7h0M610.7 518.7h0M188.8 527.6h0M312.5 526.9h0M391.9 536.2h0M831.4 545.2h0M848.6 545.2h0M427.7 554.1h0M522.0 571.0h0M557.7 571.6h0M312.9 580.3h0M180.6 589.2h0M436.2 597.8h0M672.2 597.5h0M321.9 606.8h0M513.4 615.5h0M742.7 615.1h0M286.2 624.0h0M734.0 623.8h0M689.7 650.2h0M831.0 650.4h0M144.9 677.1h0M215.4 677.1h0M751.6 676.6h0M356.7 694.6h0M548.7 702.9h0M690.2 703.2h0M233.3 712.0h0M410.0 711.7h0M752.1 712.2h0M725.4 718.6h0M101.1 736.3h0M400.5 735.9h0M163.0 745.4h0M330.2 754.3h0M401.2 754.0h0M531.5 754.3h0M760.6 754.2h0M813.6 753.9h0M222.7 472.5h0M417.4 463.4h0M691.3 465.5h0M839.5 468.3h0M612.6 425.3h0M424.6 441.4h0M560.8 480.6h0M226.3 458.4h0M805.3 430.3h0" stroke="#9fd2f2" stroke-width="4.8" stroke-linecap="round"/><path d="M233.8 290.0h0M486.7 290.1h0M453.5 298.3h0M805.0 307.0h0M654.7 316.1h0M153.4 333.8h0M365.3 334.1h0M198.1 342.9h0M557.4 342.1h0M531.2 351.6h0M357.2 360.1h0M619.5 368.6h0M154.1 386.6h0M478.3 386.5h0M495.9 386.8h0M145.2 395.6h0M233.7 395.1h0M189.0 404.5h0M725.2 404.3h0M321.4 413.1h0M531.5 421.9h0M583.9 421.7h0M453.5 439.3h0M304.3 448.2h0M189.0 457.0h0M206.6 456.9h0M365.3 491.9h0M566.7 491.7h0M725.5 491.8h0M101.0 509.9h0M619.4 509.4h0M101.0 527.6h0M198.4 536.5h0M269.1 535.9h0M593.2 536.3h0M207.1 544.8h0M418.3 562.6h0M566.2 562.4h0M602.1 562.4h0M145.4 571.6h0M339.4 571.0h0M356.9 571.6h0M698.6 571.2h0M233.2 588.8h0M100.6 597.6h0M495.6 597.4h0M849.3 597.8h0M180.8 606.7h0M365.5 615.0h0M118.6 632.6h0M206.9 632.5h0M110.2 642.0h0M427.7 641.8h0M295.3 650.2h0M637.0 650.4h0M814.0 650.7h0M401.2 667.7h0M743.0 686.1h0M303.8 694.1h0M822.3 694.1h0M513.4 703.1h0M619.6 703.7h0M646.2 711.8h0M522.6 727.1h0M365.9 735.8h0M619.8 736.2h0M418.4 754.1h0M465.9 450.7h0M274.7 482.9h0M462.3 440.5h0M161.7 454.3h0M202.6 447.2h0M373.8 451.8h0M437.8 424.4h0M788.2 434.3h0M688.3 430.5h0M600.3 450.4h0M756.7 470.7h0M814.8 424.7h0M694.5 569.8h0M814.0 589.3h0M730.5 602.6h0" stroke="#bfe3f7" stroke-width="4" stroke-linecap="round"/><path d="M251.2 289.4h0M286.2 290.0h0M628.2 289.5h0M286.5 325.3h0M136.2 334.0h0M478.5 333.7h0M539.8 342.2h0M848.9 351.4h0M539.8 395.3h0M100.9 404.5h0M698.8 413.2h0M215.4 430.3h0M522.5 430.5h0M268.6 465.3h0M787.4 483.3h0M584.1 510.1h0M848.8 527.6h0M539.9 553.4h0M743.4 562.7h0M760.9 562.2h0M321.9 571.0h0M365.6 579.7h0M268.4 588.7h0M566.8 597.4h0M540.3 623.8h0M339.5 641.5h0M330.1 650.4h0M383.0 650.1h0M153.5 686.1h0M445.2 727.6h0M381.2 457.2h0M558.7 555.3h0M243.5 572.6h0" stroke="#a866b4" stroke-width="4" stroke-linecap="round"/><path d="M268.5 289.7h0M163.1 307.6h0M769.5 324.8h0M242.0 333.6h0M400.6 333.8h0M162.9 342.2h0M321.9 359.8h0M760.7 386.7h0M487.3 413.0h0M400.5 439.3h0M418.8 457.0h0M513.7 456.7h0M557.7 500.6h0M593.2 501.1h0M478.0 527.6h0M513.4 526.9h0M427.2 536.3h0M672.4 545.2h0M347.9 562.8h0M189.1 579.8h0M109.9 606.5h0M672.8 615.6h0M592.5 623.7h0M769.1 624.1h0M410.0 641.4h0M743.0 667.8h0M487.2 677.2h0M804.5 676.7h0M558.0 711.8h0M487.1 727.2h0M215.4 745.5h0M365.7 753.6h0M346.1 469.3h0M617.7 470.5h0M206.5 421.4h0M278.7 445.1h0M254.1 478.1h0M836.3 423.6h0M533.9 561.4h0" stroke="#d89cc4" stroke-width="4.8" stroke-linecap="round"/><path d="M304.3 289.8h0M153.7 298.6h0M689.8 298.6h0M478.4 315.8h0M400.7 351.1h0M478.5 351.0h0M391.9 359.9h0M409.8 360.0h0M822.6 359.8h0M839.7 377.4h0M522.1 395.6h0M760.8 403.7h0M180.6 412.7h0M566.8 439.5h0M743.3 439.4h0M118.8 457.1h0M471.3 456.8h0M602.2 457.1h0M690.0 456.5h0M401.2 474.7h0M478.5 474.8h0M375.0 483.1h0M584.1 492.0h0M277.4 509.6h0M637.5 509.8h0M127.2 536.0h0M504.3 536.0h0M330.6 544.7h0M453.6 545.1h0M322.0 553.4h0M118.6 562.2h0M548.8 562.7h0M637.1 562.5h0M796.3 562.2h0M463.3 571.2h0M504.7 571.3h0M628.3 589.0h0M742.9 597.3h0M778.3 597.9h0M162.7 606.6h0M663.3 623.8h0M100.4 632.8h0M471.3 632.8h0M233.1 641.5h0M436.5 650.6h0M584.5 650.8h0M436.5 668.3h0M707.9 668.4h0M322.0 677.0h0M454.1 686.0h0M180.4 694.7h0M286.0 694.6h0M392.2 694.5h0M522.5 694.2h0M374.3 712.4h0M698.6 712.2h0M242.4 718.4h0M602.0 718.8h0M242.1 736.0h0M383.0 735.9h0M478.7 736.3h0M109.7 745.0h0M689.8 754.3h0M710.6 478.9h0M289.8 446.7h0M466.1 482.0h0M215.8 470.6h0M303.3 430.4h0M778.2 438.4h0M150.7 459.1h0M830.1 442.3h0M668.7 442.3h0M737.3 438.5h0M819.2 437.8h0M380.3 420.8h0M777.4 563.4h0M515.0 557.1h0" stroke="#cdc6ea" stroke-width="4.8" stroke-linecap="round"/><path d="M321.7 290.1h0M602.2 316.4h0M725.4 315.8h0M513.8 333.4h0M831.2 333.8h0M375.0 342.6h0M100.8 351.3h0M734.3 360.4h0M840.2 413.1h0M760.6 421.4h0M654.7 457.0h0M145.2 465.3h0M769.0 465.4h0M690.1 491.9h0M109.5 535.9h0M374.9 536.2h0M539.6 536.3h0M268.6 553.5h0M453.8 562.7h0M216.1 571.5h0M804.3 571.6h0M513.4 597.6h0M584.1 615.2h0M813.9 633.2h0M259.4 668.2h0M453.5 668.0h0M566.9 718.2h0M171.4 735.9h0M471.8 736.5h0M672.4 736.5h0M495.7 754.0h0M654.5 463.1h0M454.6 453.6h0M839.6 446.9h0M491.8 469.6h0M355.2 440.5h0M454.3 463.9h0M212.5 446.7h0M654.9 444.2h0M700.4 452.2h0M162.6 430.6h0M726.5 451.3h0M489.3 558.6h0" stroke="#b9b0e0" stroke-width="2.6" stroke-linecap="round"/><path d="M339.2 290.0h0M654.6 298.8h0M409.6 307.6h0M241.8 316.1h0M277.1 315.9h0M180.6 325.1h0M145.2 342.1h0M321.3 342.7h0M593.1 342.5h0M840.1 360.1h0M672.7 386.8h0M813.8 386.6h0M163.0 395.1h0M822.2 395.5h0M471.3 421.8h0M259.8 457.1h0M357.2 466.0h0M233.8 483.5h0M539.7 483.4h0M734.5 483.1h0M118.5 509.5h0M224.0 509.4h0M418.3 509.5h0M654.6 509.5h0M761.0 509.4h0M216.0 518.8h0M330.4 527.1h0M180.5 553.4h0M839.7 571.6h0M374.7 589.1h0M391.9 588.5h0M487.2 588.6h0M268.9 606.5h0M805.0 606.2h0M294.9 615.4h0M339.3 624.3h0M171.1 632.9h0M778.4 633.2h0M259.9 650.9h0M233.7 676.6h0M778.5 685.3h0M566.6 703.5h0M778.2 703.5h0M557.7 727.6h0M513.8 736.0h0M663.4 745.2h0M613.5 453.9h0M308.5 454.3h0M593.1 451.5h0M767.6 456.8h0M654.2 469.3h0M589.4 450.0h0M258.9 444.4h0M694.1 480.9h0M806.7 477.3h0M130.3 481.9h0M566.1 476.7h0M128.6 426.6h0M486.7 481.3h0M228.7 613.7h0M448.3 549.3h0M208.3 581.3h0" stroke="#e2f2f8" stroke-width="2.6" stroke-linecap="round"/><path d="M356.8 289.7h0M445.6 290.0h0M347.9 298.4h0M672.5 298.7h0M619.6 316.2h0M109.6 325.0h0M540.0 325.2h0M110.3 342.5h0M215.4 342.8h0M787.1 342.1h0M171.0 350.9h0M286.7 395.0h0M487.1 395.0h0M557.8 395.1h0M154.1 404.0h0M401.2 403.9h0M743.3 404.4h0M277.4 421.5h0M321.3 430.5h0M698.8 447.8h0M743.2 457.2h0M322.0 466.0h0M463.0 465.8h0M487.1 465.7h0M418.2 474.3h0M725.7 474.3h0M163.2 483.0h0M312.8 492.1h0M418.6 491.9h0M804.9 501.0h0M831.2 509.7h0M557.6 518.2h0M681.4 518.4h0M751.4 535.9h0M778.4 562.5h0M410.2 571.0h0M136.2 579.9h0M330.2 597.5h0M162.9 624.3h0M233.5 659.2h0M795.9 667.7h0M162.6 677.0h0M145.6 711.8h0M462.8 727.4h0M839.7 745.5h0M163.7 470.4h0M677.1 480.8h0M844.6 433.9h0M621.0 438.4h0M689.4 479.7h0M650.4 474.5h0M160.4 425.7h0M336.9 460.8h0M237.9 574.4h0" stroke="#9fd2f2" stroke-width="4" stroke-linecap="round"/><path d="M374.3 289.3h0M733.9 289.9h0M513.6 298.2h0M831.1 298.6h0M127.4 307.5h0M418.5 316.5h0M743.2 316.5h0M663.8 324.9h0M268.4 342.2h0M136.0 351.3h0M672.5 351.1h0M725.7 351.1h0M233.7 360.3h0M716.1 359.7h0M804.3 360.2h0M241.8 368.6h0M312.8 369.0h0M760.5 369.3h0M109.6 378.0h0M463.3 377.4h0M557.6 377.6h0M646.2 377.3h0M269.1 395.6h0M409.7 430.6h0M224.3 474.4h0M259.8 474.9h0M453.8 492.5h0M277.1 527.3h0M645.9 553.6h0M751.5 553.6h0M286.1 571.7h0M153.6 597.7h0M478.2 597.6h0M725.0 615.2h0M822.4 624.4h0M539.6 641.4h0M135.9 650.4h0M188.9 650.1h0M286.5 659.3h0M549.1 685.6h0M418.9 703.5h0M436.4 703.1h0M268.8 712.0h0M628.1 712.0h0M295.3 718.0h0M347.8 718.1h0M690.3 718.6h0M522.0 745.1h0" stroke="#e2f2f8" stroke-width="6.2" stroke-linecap="round"/><path d="M392.7 290.0h0M163.1 325.1h0M233.6 342.4h0M734.0 342.6h0M277.6 403.9h0M268.8 412.9h0M831.2 421.5h0M627.9 483.3h0M645.7 518.1h0M716.3 535.8h0M743.1 545.2h0M813.7 545.0h0M277.6 580.3h0M761.1 633.1h0M127.8 659.2h0M478.3 718.1h0M513.5 457.1h0M837.2 446.3h0M733.9 449.8h0M308.5 434.7h0M176.1 560.3h0" stroke="#a866b4" stroke-width="2.6" stroke-linecap="round"/><path d="M409.8 289.8h0M329.9 298.8h0M646.1 307.0h0M188.7 333.6h0M619.9 351.3h0M795.9 351.2h0M681.5 359.7h0M312.8 386.6h0M548.8 421.6h0M840.1 447.9h0M383.2 457.2h0M637.4 474.2h0M831.6 474.2h0M539.8 500.8h0M136.5 527.0h0M495.9 544.6h0M636.9 544.7h0M583.9 562.3h0M663.8 571.3h0M462.9 606.4h0M224.3 615.1h0M268.7 624.4h0M348.1 650.5h0M504.5 659.0h0M215.7 694.2h0M224.1 703.3h0M250.8 712.5h0M813.6 718.5h0M259.5 736.4h0M268.6 745.5h0M645.8 744.8h0M312.4 753.7h0M215.8 443.8h0M320.3 484.0h0M559.1 442.8h0M584.5 469.1h0M505.4 434.1h0M678.3 436.9h0M566.7 473.6h0M441.9 552.4h0M734.4 605.1h0" stroke="#86b2e6" stroke-width="3.4" stroke-linecap="round"/><path d="M427.2 289.8h0M804.5 289.5h0M583.9 315.7h0M198.2 325.1h0M699.0 325.2h0M531.4 333.7h0M602.1 386.2h0M680.9 395.4h0M601.5 404.4h0M339.4 430.8h0M654.6 492.4h0M427.8 500.6h0M831.5 527.2h0M708.1 544.9h0M445.0 571.6h0M760.5 598.0h0M382.9 615.1h0M427.9 623.7h0M655.1 633.0h0M513.4 650.7h0M478.4 668.1h0M268.4 677.2h0M663.6 677.2h0M312.3 685.9h0M401.1 686.0h0M531.5 735.8h0M786.7 745.3h0M664.5 475.8h0M680.8 441.1h0M110.6 466.5h0M189.0 442.5h0M821.7 442.6h0M284.3 453.9h0M694.1 445.8h0M813.5 459.7h0M626.4 573.3h0" stroke="#a866b4" stroke-width="4.8" stroke-linecap="round"/><path d="M521.9 289.3h0M689.9 315.9h0M295.2 351.0h0M751.8 377.7h0M707.9 386.6h0M628.5 412.6h0M304.3 483.7h0M521.9 500.5h0M566.7 527.4h0M110.1 553.8h0M716.1 571.6h0M751.9 589.2h0M698.4 624.2h0M392.1 641.4h0M786.8 641.3h0M566.5 650.5h0M725.5 668.4h0M180.4 712.1h0M286.2 712.0h0M575.6 727.3h0M454.0 753.9h0M513.3 754.2h0" stroke="#6e9ee0" stroke-width="6.2" stroke-linecap="round"/><path d="M540.2 290.0h0M531.0 298.3h0M778.0 298.2h0M294.7 315.9h0M277.0 350.9h0M628.4 359.8h0M145.2 377.7h0M486.6 377.8h0M593.1 413.3h0M672.7 421.3h0M180.4 430.8h0M145.5 447.9h0M233.5 465.4h0M339.4 465.8h0M268.5 501.2h0M322.0 500.6h0M769.6 501.0h0M593.0 518.6h0M619.4 527.0h0M171.1 544.7h0M347.6 544.6h0M681.5 553.7h0M655.1 562.6h0M848.6 562.7h0M690.1 598.1h0M822.2 606.3h0M752.0 623.9h0M531.6 632.6h0M241.7 685.5h0M207.1 703.1h0M277.4 703.0h0M575.4 712.4h0M593.3 711.8h0M259.5 718.5h0M330.5 718.7h0M418.4 718.2h0M392.1 727.4h0M840.0 727.4h0M330.1 735.8h0M462.7 745.3h0M471.3 754.3h0M408.0 458.1h0M526.6 454.6h0M242.2 421.2h0M749.5 444.3h0M743.7 468.8h0M211.1 470.4h0M722.9 426.9h0M147.4 461.9h0M724.6 425.4h0M324.9 440.2h0M842.2 460.3h0M839.0 432.8h0M402.2 461.6h0M250.3 427.7h0M389.4 472.9h0M695.7 461.7h0M287.7 436.4h0M354.2 437.9h0M603.9 476.3h0M351.8 594.5h0M769.8 579.1h0M382.5 592.3h0" stroke="#bfe3f7" stroke-width="3.4" stroke-linecap="round"/><path d="M557.8 289.4h0M312.5 315.7h0M383.5 315.8h0M840.1 342.7h0M549.2 368.6h0M216.0 377.4h0M233.6 377.5h0M716.5 377.4h0M189.4 386.2h0M707.4 421.6h0M813.6 421.9h0M374.5 430.4h0M804.6 430.2h0M224.3 457.2h0M495.6 474.5h0M144.9 483.2h0M769.8 483.0h0M436.5 527.3h0M496.0 526.9h0M392.6 571.6h0M471.5 580.1h0M242.1 615.1h0M690.0 615.4h0M575.0 624.1h0M436.3 633.0h0M206.3 650.3h0M637.5 668.4h0M418.8 685.5h0M471.2 718.4h0M769.5 727.0h0M145.0 745.3h0M198.3 745.2h0M716.3 744.9h0" stroke="#86b2e6" stroke-width="6.2" stroke-linecap="round"/><path d="M575.0 290.0h0M259.5 298.8h0M145.3 359.9h0M427.4 377.4h0M743.1 386.5h0M427.6 412.6h0M313.0 421.5h0M504.3 448.2h0M593.0 447.9h0M787.2 448.0h0M566.9 509.7h0M708.1 509.7h0M628.1 518.3h0M471.8 527.3h0M522.3 606.4h0M100.5 615.1h0M135.7 615.2h0M321.5 624.5h0M707.5 633.1h0M557.8 642.0h0M277.3 685.5h0M680.8 694.8h0M127.8 712.0h0M548.9 736.0h0M772.9 436.4h0M784.2 461.6h0M750.7 463.8h0M630.0 449.5h0M264.5 465.0h0M616.9 462.8h0M719.8 439.3h0M416.0 428.1h0M513.6 478.6h0M400.7 430.4h0M621.2 561.9h0M377.3 589.3h0M150.4 607.7h0" stroke="#9fd2f2" stroke-width="2.6" stroke-linecap="round"/><path d="M592.6 289.4h0M751.7 289.5h0M365.8 298.4h0M786.7 307.0h0M356.9 342.9h0M628.0 342.8h0M831.4 368.8h0M171.7 386.6h0M796.1 386.8h0M410.3 395.3h0M672.8 404.4h0M198.0 412.8h0M171.7 421.5h0M445.6 430.3h0M822.0 448.5h0M619.6 457.1h0M163.2 465.5h0M742.8 492.0h0M698.8 500.6h0M436.3 509.4h0M778.7 509.7h0M796.2 509.4h0M487.1 518.7h0M453.7 526.9h0M250.8 536.1h0M575.3 535.9h0M400.6 544.5h0M375.0 553.7h0M548.6 597.6h0M374.8 606.5h0M751.7 606.8h0M410.2 623.8h0M206.8 667.8h0M330.3 686.0h0M725.5 685.7h0M831.1 685.5h0M110.3 694.3h0M188.8 703.3h0M584.3 718.6h0M831.7 736.6h0M251.2 745.4h0M153.5 753.9h0M639.1 456.4h0M747.5 471.9h0M845.2 469.0h0M717.5 443.4h0M568.7 457.0h0M351.7 428.6h0M217.9 424.9h0M491.6 452.7h0M669.4 447.7h0M223.7 449.1h0M181.4 474.2h0M273.9 435.5h0M375.8 552.7h0M675.4 599.4h0M378.4 575.8h0M784.1 561.1h0" stroke="#b9b0e0" stroke-width="4" stroke-linecap="round"/><path d="M610.6 289.6h0M769.5 289.8h0M822.1 306.9h0M118.5 316.0h0M574.9 360.4h0M153.9 369.3h0M636.8 368.8h0M365.4 386.4h0M574.9 395.7h0M778.3 403.9h0M357.2 413.0h0M259.7 421.9h0M418.3 421.7h0M725.3 422.0h0M663.7 430.1h0M347.5 439.2h0M410.3 448.4h0M427.8 447.9h0M531.2 456.7h0M153.6 474.2h0M357.3 483.3h0M646.0 501.3h0M725.1 509.8h0M734.5 518.1h0M813.4 527.1h0M101.0 562.6h0M427.5 570.9h0M592.6 606.7h0M418.8 632.9h0M496.2 632.7h0M840.2 641.3h0M110.0 659.1h0M180.4 659.2h0M427.2 659.5h0M522.6 659.4h0M734.5 659.5h0M188.9 667.7h0M392.6 676.8h0M171.2 686.1h0M382.9 685.4h0M795.7 703.4h0M814.0 703.7h0M312.8 718.6h0M357.3 727.6h0M583.9 736.5h0M180.8 745.5h0M645.1 435.9h0M635.0 467.0h0M705.6 446.7h0M741.5 464.9h0M693.6 435.8h0M362.4 441.0h0M337.5 471.3h0M127.6 446.6h0M431.4 478.5h0M687.8 483.2h0M507.5 472.6h0M280.5 480.8h0M272.3 592.0h0M298.5 553.8h0M183.1 552.4h0M719.2 588.5h0" stroke="#e2f2f8" stroke-width="3.4" stroke-linecap="round"/><path d="M645.9 289.5h0M171.3 298.9h0M374.4 307.1h0M224.7 316.1h0M513.6 316.3h0M787.4 325.1h0M171.1 333.6h0M725.3 333.8h0M795.7 333.8h0M180.7 342.9h0M312.8 351.0h0M513.7 351.0h0M162.6 360.0h0M645.7 360.3h0M445.3 377.7h0M593.2 377.7h0M530.9 386.2h0M654.8 386.4h0M215.6 395.5h0M392.2 395.2h0M645.8 395.6h0M171.7 404.1h0M436.4 404.0h0M566.6 404.3h0M795.6 404.3h0M224.1 421.4h0M743.0 421.6h0M392.4 430.8h0M513.4 439.7h0M530.9 439.5h0M725.8 439.0h0M321.6 448.4h0M374.8 448.2h0M575.5 448.0h0M312.6 457.0h0M401.0 456.7h0M436.0 456.7h0M478.6 457.0h0M628.2 466.0h0M382.8 474.7h0M804.4 483.6h0M241.7 492.5h0M347.7 492.1h0M436.2 492.3h0M831.6 492.4h0M303.9 501.0h0M357.4 501.1h0M751.4 500.7h0M365.2 509.5h0M207.0 527.2h0M583.9 527.4h0M707.7 527.7h0M339.1 536.2h0M558.0 535.7h0M663.1 535.7h0M100.8 544.7h0M136.4 544.7h0M259.5 544.6h0M513.4 544.9h0M531.1 544.6h0M445.4 553.6h0M522.5 553.9h0M557.7 553.8h0M804.6 553.4h0M189.0 562.7h0M224.0 562.4h0M259.6 562.7h0M822.2 571.1h0M619.6 580.5h0M831.1 580.2h0M646.1 589.3h0M584.0 597.5h0M610.8 606.8h0M796.0 615.0h0M813.5 615.6h0M849.0 615.1h0M645.6 623.9h0M241.9 632.6h0M566.5 632.9h0M619.7 632.9h0M601.9 650.7h0M795.9 650.7h0M769.7 659.5h0M787.3 659.3h0M531.2 667.8h0M655.1 668.0h0M410.1 676.6h0M348.1 685.5h0M531.4 685.3h0M198.0 694.5h0M118.3 703.3h0M478.0 703.0h0M831.7 703.6h0M224.0 718.2h0M743.1 718.5h0M592.7 727.1h0M698.9 727.0h0M224.4 736.4h0M566.9 736.6h0M127.9 745.1h0M374.7 745.0h0M592.7 745.1h0M822.3 744.8h0M436.2 754.4h0M145.4 436.2h0M623.9 482.5h0M583.6 430.2h0M354.2 475.7h0M763.5 451.9h0M332.8 450.1h0M219.6 453.1h0M606.2 445.7h0M369.7 450.2h0M238.8 467.2h0M821.8 462.6h0M323.5 459.9h0M594.2 478.7h0M627.3 465.8h0M758.2 479.5h0M243.8 454.1h0M219.7 589.5h0M607.6 558.9h0M781.6 572.0h0M582.4 558.7h0M787.4 606.8h0M469.2 610.5h0" stroke="#e2f2f8" stroke-width="4.8" stroke-linecap="round"/><path d="M663.5 289.9h0M698.5 289.6h0M136.0 298.4h0M427.5 307.4h0M840.3 307.5h0M637.4 315.7h0M602.0 351.3h0M251.1 360.0h0M471.5 368.9h0M496.2 368.7h0M540.2 377.6h0M110.1 395.6h0M198.0 395.6h0M303.9 395.0h0M698.9 394.9h0M637.1 404.5h0M110.2 412.6h0M242.3 421.6h0M100.8 439.0h0M795.7 439.4h0M251.4 447.8h0M339.3 448.3h0M136.2 491.7h0M672.5 510.0h0M539.7 518.4h0M153.7 527.0h0M531.5 527.4h0M796.2 527.5h0M663.2 553.7h0M436.0 562.5h0M478.3 579.9h0M250.9 588.5h0M250.8 606.5h0M734.0 606.7h0M761.0 615.6h0M304.0 624.4h0M531.3 650.4h0M418.1 668.5h0M548.8 668.3h0M197.8 677.1h0M374.9 676.9h0M513.3 685.5h0M339.3 694.5h0M383.3 703.4h0M742.7 703.5h0M339.5 712.2h0M778.6 718.3h0M188.7 735.9h0M259.6 754.2h0M637.0 753.8h0M695.5 450.3h0M208.7 474.3h0M442.0 467.7h0M589.0 483.9h0M843.4 470.5h0M641.6 449.8h0M559.0 431.3h0M573.1 482.0h0M376.8 462.1h0M618.2 466.4h0M613.4 469.4h0M765.0 483.4h0M343.6 477.4h0M439.3 469.1h0M550.6 461.9h0M796.5 471.8h0M153.5 436.6h0M248.9 462.5h0M177.3 605.6h0M371.1 567.9h0M455.0 572.8h0" stroke="#bfe3f7" stroke-width="2.6" stroke-linecap="round"/><path d="M681.1 289.6h0M743.4 298.5h0M610.5 307.6h0M330.5 369.1h0M848.8 386.6h0M330.1 404.5h0M804.7 412.8h0M153.6 421.6h0M734.0 430.6h0M646.2 465.8h0M251.0 483.5h0M233.7 500.7h0M348.1 509.7h0M294.9 527.3h0M171.3 597.4h0M198.3 606.8h0M478.7 650.6h0M725.2 650.7h0M601.7 667.9h0M557.5 676.6h0M260.0 685.9h0M707.9 685.7h0M769.5 711.8h0M707.6 718.1h0M136.2 736.4h0M540.0 744.7h0M558.0 744.9h0M386.6 451.1h0M358.0 455.9h0M273.8 423.0h0M594.8 467.3h0M702.2 472.9h0M233.7 435.9h0M476.0 447.8h0M680.5 449.0h0M444.2 465.6h0M580.0 470.2h0M423.6 447.0h0M763.1 484.4h0M572.6 471.9h0M712.8 423.2h0M543.5 435.5h0M653.6 478.4h0M646.4 424.2h0M818.1 570.9h0M221.3 558.2h0" stroke="#ddd9f1" stroke-width="3.4" stroke-linecap="round"/><path d="M716.4 289.6h0M109.8 307.1h0M304.4 307.1h0M504.4 307.1h0M436.0 316.0h0M453.8 315.9h0M672.7 316.0h0M410.1 324.9h0M462.8 324.6h0M584.0 333.7h0M250.9 342.8h0M427.7 342.5h0M180.1 360.2h0M435.8 368.9h0M198.4 377.5h0M277.1 386.9h0M725.3 386.9h0M549.2 404.1h0M392.4 413.2h0M330.2 421.6h0M144.9 430.9h0M206.9 439.6h0M294.9 439.6h0M462.8 447.8h0M680.9 448.0h0M171.8 456.5h0M304.3 465.3h0M241.6 474.5h0M295.3 474.4h0M513.3 474.1h0M109.5 483.4h0M216.2 483.1h0M268.7 483.2h0M286.3 483.1h0M663.2 483.3h0M383.3 491.8h0M471.2 492.0h0M463.0 500.8h0M295.1 509.9h0M786.9 518.3h0M839.7 518.8h0M242.4 527.3h0M742.9 527.2h0M162.5 536.3h0M681.3 536.2h0M436.5 544.8h0M410.0 553.5h0M153.4 562.3h0M690.3 562.2h0M584.5 579.9h0M655.0 580.4h0M725.5 580.2h0M760.6 580.4h0M769.7 589.2h0M637.1 597.6h0M339.2 606.8h0M645.5 606.5h0M725.5 633.0h0M268.4 659.6h0M471.3 685.7h0M645.8 694.9h0M698.6 694.7h0M663.4 711.9h0M154.1 718.4h0M251.1 727.3h0M601.7 736.1h0M303.9 745.1h0M698.9 745.4h0M819.7 449.3h0M261.4 450.5h0M390.5 466.0h0M194.8 421.3h0M340.4 433.3h0M495.9 421.0h0M799.2 426.9h0M734.7 466.2h0M193.7 442.6h0M787.3 443.5h0M242.6 556.5h0M438.4 563.0h0M577.0 607.5h0M396.8 566.7h0M541.1 613.8h0" stroke="#86b2e6" stroke-width="4.8" stroke-linecap="round"/><path d="M787.1 289.5h0M795.9 298.4h0M751.7 306.9h0M259.5 333.9h0M610.5 360.0h0M575.3 377.6h0M584.4 386.2h0M462.8 395.1h0M654.6 404.3h0M410.0 412.9h0M109.8 430.6h0M716.7 430.3h0M760.6 439.2h0M330.3 509.6h0M487.3 536.4h0M277.1 544.6h0M365.7 544.6h0M566.2 544.5h0M839.8 553.8h0M100.4 580.0h0M831.1 632.8h0M269.0 641.6h0M400.8 650.4h0M471.6 650.2h0M136.1 685.5h0M206.3 685.6h0M294.9 686.0h0M610.5 694.7h0M681.4 727.6h0M575.1 745.1h0M224.5 753.8h0M291.6 425.8h0M724.0 480.0h0M508.7 442.1h0M759.7 447.5h0M453.0 466.7h0M543.4 423.2h0M311.6 464.2h0M595.6 477.1h0M307.2 567.2h0M250.6 570.6h0M303.2 550.5h0M250.7 600.3h0" stroke="#86b2e6" stroke-width="5.6" stroke-linecap="round"/><path d="M101.1 298.3h0M549.1 298.9h0M206.8 351.6h0M831.5 351.6h0M751.8 360.1h0M663.6 377.5h0M454.1 386.6h0M365.8 421.6h0M504.7 430.5h0M286.0 448.0h0M136.2 456.8h0M840.4 465.6h0M392.5 483.2h0M636.9 492.4h0M787.2 536.0h0M118.3 579.9h0M330.6 580.5h0M619.2 615.2h0M277.1 632.7h0M522.6 641.8h0M769.4 641.7h0M153.4 650.4h0M619.6 668.0h0M751.8 694.2h0M312.2 703.7h0M522.4 712.0h0M672.7 718.7h0M505.0 744.9h0M628.2 745.4h0M295.0 753.9h0M742.9 754.1h0M407.0 448.0h0M470.2 467.6h0M448.4 453.5h0M541.0 466.2h0M628.3 458.4h0M439.4 484.2h0M521.7 478.7h0M412.0 457.3h0M804.9 435.0h0M778.1 464.4h0M757.4 550.0h0M199.4 556.1h0M543.3 549.3h0" stroke="#bfe3f7" stroke-width="5.6" stroke-linecap="round"/><path d="M118.2 298.9h0M206.8 298.4h0M584.2 298.7h0M672.2 334.1h0M286.4 360.4h0M127.4 377.8h0M382.8 403.9h0M566.3 421.6h0M295.2 456.6h0M663.7 500.6h0M813.6 562.2h0M356.8 642.0h0M716.7 642.0h0M734.2 641.4h0M100.7 667.8h0M601.7 685.9h0M708.1 703.6h0M795.7 718.5h0M581.2 431.3h0M186.0 420.8h0M110.3 456.5h0M515.8 444.9h0M270.8 444.5h0M555.5 442.7h0M163.9 581.1h0M181.1 602.2h0M174.0 609.9h0" stroke="#d89cc4" stroke-width="2.6" stroke-linecap="round"/><path d="M189.3 298.2h0M233.3 307.0h0M522.2 307.1h0M557.4 307.5h0M716.1 342.8h0M268.9 359.8h0M540.1 360.4h0M513.9 368.7h0M322.0 377.4h0M374.6 377.7h0M680.8 377.8h0M513.4 386.4h0M787.2 395.2h0M619.5 403.9h0M251.0 413.1h0M769.5 413.0h0M787.2 413.2h0M575.0 430.2h0M365.9 439.4h0M162.8 448.4h0M250.8 466.0h0M575.0 465.5h0M698.5 465.6h0M127.3 483.4h0M522.1 483.1h0M575.3 482.9h0M698.7 483.4h0M206.3 491.9h0M153.8 509.7h0M531.3 510.0h0M312.8 545.2h0M592.7 553.6h0M382.8 580.0h0M548.6 580.2h0M690.1 579.9h0M118.3 597.5h0M707.6 615.4h0M778.5 615.2h0M848.9 633.2h0M681.0 641.8h0M592.6 659.4h0M778.4 668.0h0M180.3 677.0h0M539.9 676.8h0M628.2 676.8h0M487.0 694.2h0M734.2 694.9h0M787.4 694.8h0M760.4 703.5h0M145.1 727.1h0M198.0 727.3h0M734.4 727.1h0M295.2 735.8h0M418.7 736.4h0M361.8 448.2h0M789.8 451.7h0M584.7 441.7h0M762.3 430.0h0M369.0 420.4h0M673.3 481.7h0M760.5 440.8h0M634.7 432.1h0M732.2 458.8h0M361.0 575.7h0" stroke="#cdc6ea" stroke-width="4" stroke-linecap="round"/><path d="M224.1 298.5h0M445.0 307.3h0M751.6 325.3h0M206.5 333.7h0M153.6 351.6h0M365.5 351.4h0M383.0 351.5h0M637.0 351.1h0M522.1 359.8h0M663.8 360.4h0M224.7 386.4h0M804.4 395.5h0M295.2 421.8h0M495.6 421.9h0M357.2 430.7h0M109.8 448.3h0M392.0 448.2h0M663.1 447.8h0M751.4 448.0h0M769.6 448.5h0M583.9 456.8h0M392.2 465.3h0M822.0 465.6h0M294.7 491.8h0M849.2 492.1h0M180.2 501.2h0M215.6 501.2h0M409.9 501.3h0M486.8 500.8h0M628.1 500.5h0M786.8 501.3h0M495.8 509.7h0M601.6 509.3h0M849.1 509.7h0M251.2 518.6h0M286.6 518.5h0M383.2 527.6h0M242.1 545.1h0M294.6 545.1h0M760.8 545.2h0M163.0 553.9h0M206.8 562.9h0M330.5 562.8h0M127.6 571.4h0M304.2 571.1h0M839.8 589.2h0M312.8 597.8h0M619.7 598.0h0M427.3 606.3h0M445.1 606.8h0M601.8 615.7h0M215.6 624.2h0M610.9 623.9h0M286.3 641.3h0M303.7 641.5h0M374.9 641.4h0M462.5 641.3h0M454.0 650.5h0M848.8 650.9h0M357.2 659.2h0M540.0 659.3h0M716.8 659.1h0M312.3 668.0h0M348.1 667.8h0M462.6 676.8h0M496.3 685.7h0M813.3 686.0h0M769.5 694.5h0M118.8 718.4h0M548.6 753.6h0M566.5 754.3h0M619.2 753.8h0M445.0 462.9h0M556.9 464.2h0M672.5 447.2h0M219.5 453.3h0M561.8 461.9h0M168.7 481.6h0M374.6 430.5h0M836.4 452.6h0M676.2 455.5h0M573.3 600.4h0M698.3 604.6h0" stroke="#86b2e6" stroke-width="4" stroke-linecap="round"/><path d="M242.0 298.4h0M145.0 324.9h0M496.3 333.4h0M478.0 369.0h0M445.3 395.6h0M627.9 395.4h0M531.0 404.1h0M593.0 430.4h0M540.0 448.0h0M224.2 527.2h0M347.8 579.9h0M628.0 606.3h0M681.1 606.3h0M382.8 632.9h0M575.4 659.4h0M672.6 668.1h0M557.4 694.5h0M575.5 694.9h0M268.5 727.1h0M646.0 727.3h0M778.2 736.3h0M182.1 461.3h0M273.0 464.9h0M226.5 452.7h0M773.0 451.6h0M666.8 483.6h0M202.5 473.6h0M794.6 453.3h0M225.9 470.7h0M774.7 468.4h0M771.6 479.0h0M148.0 480.7h0M642.6 428.1h0" stroke="#6e9ee0" stroke-width="2.6" stroke-linecap="round"/><path d="M277.3 298.4h0M707.4 298.4h0M233.1 324.8h0M312.6 333.8h0M654.4 333.6h0M339.4 342.8h0M392.5 377.7h0M189.4 491.9h0M392.2 501.2h0M513.9 509.6h0M822.7 536.4h0M654.8 545.3h0M215.5 553.7h0M619.5 562.4h0M610.6 571.1h0M242.0 597.8h0M259.3 597.6h0M690.4 667.8h0M831.0 718.4h0M757.8 447.9h0M650.3 441.7h0M475.8 481.5h0M808.2 470.9h0M791.2 443.0h0M846.7 421.8h0M126.7 426.2h0M183.2 472.6h0M609.3 554.4h0" stroke="#d89cc4" stroke-width="5.6" stroke-linecap="round"/><path d="M294.7 298.6h0M224.4 351.1h0M566.7 368.7h0M796.2 369.0h0M118.3 386.4h0M215.9 412.5h0M339.5 412.9h0M681.5 413.1h0M118.7 439.0h0M645.8 448.3h0M180.4 465.3h0M365.2 474.5h0M690.5 474.7h0M462.9 518.8h0M357.2 536.3h0M548.6 544.5h0M787.4 553.9h0M680.9 571.6h0M453.9 580.0h0M796.1 580.2h0M849.1 579.9h0M145.6 589.0h0M471.7 597.9h0M207.0 615.7h0M636.8 615.4h0M557.5 624.4h0M627.8 624.4h0M486.8 659.2h0M356.6 676.9h0M127.2 694.6h0M198.4 712.0h0M189.2 718.0h0M233.7 727.1h0M752.1 744.8h0M270.5 451.8h0M391.6 462.9h0M573.6 442.4h0M831.6 451.7h0M243.6 577.6h0M151.0 594.8h0" stroke="#cdc6ea" stroke-width="2.6" stroke-linecap="round"/><path d="M383.3 298.5h0M761.1 298.7h0M215.8 307.3h0M539.7 306.9h0M778.2 315.8h0M454.1 333.7h0M752.1 342.4h0M189.2 369.0h0M504.6 412.5h0M453.6 456.5h0M198.2 465.9h0M593.2 465.8h0M101.0 474.6h0M312.9 474.5h0M548.8 474.4h0M530.9 491.9h0M400.5 509.6h0M760.5 527.6h0M304.0 536.4h0M628.1 535.8h0M224.5 544.9h0M162.6 571.5h0M250.8 571.3h0M539.9 571.3h0M427.5 588.8h0M734.2 588.7h0M504.4 606.1h0M127.2 624.1h0M356.8 624.5h0M486.7 641.8h0M427.7 694.6h0M628.5 694.8h0M135.9 718.2h0M400.9 718.2h0M716.8 727.1h0M751.9 727.3h0M118.6 736.4h0M725.2 735.8h0M277.6 754.3h0M382.9 754.0h0M584.4 753.9h0M830.9 753.6h0M812.3 465.0h0M313.8 439.8h0M117.4 443.4h0M338.1 480.9h0M493.8 480.7h0M836.8 459.3h0M474.7 445.8h0M499.4 480.3h0M315.7 427.5h0M506.9 592.1h0" stroke="#6e9ee0" stroke-width="4" stroke-linecap="round"/><path d="M418.7 298.8h0M392.0 325.0h0M445.0 325.1h0M734.0 325.1h0M822.4 377.8h0M778.5 421.7h0M680.9 430.8h0M216.1 466.0h0M445.5 465.4h0M742.8 474.1h0M487.4 483.6h0M796.2 492.1h0M383.3 544.9h0M304.0 553.4h0M136.3 562.8h0M708.1 562.8h0M242.2 579.8h0M566.3 579.7h0M127.4 588.6h0M339.1 588.6h0M840.2 624.0h0M690.4 632.7h0M216.0 712.3h0M339.7 727.3h0M637.0 736.5h0M496.2 472.5h0M433.1 456.1h0M834.3 421.4h0M811.0 483.0h0M451.7 424.2h0M439.4 450.4h0M373.8 482.9h0M514.4 459.8h0M627.5 430.7h0M161.1 480.3h0M511.6 449.7h0M792.6 472.9h0M447.8 426.8h0M171.2 577.9h0M159.7 609.0h0M535.4 559.8h0" stroke="#ddd9f1" stroke-width="2.6" stroke-linecap="round"/><path d="M471.3 298.5h0M321.8 307.4h0M663.9 307.5h0M259.6 316.0h0M365.2 316.3h0M435.8 333.8h0M655.0 368.8h0M233.4 412.8h0M645.8 430.8h0M557.8 465.8h0M734.5 465.9h0M795.8 474.6h0M339.2 553.6h0M592.6 589.1h0M822.0 589.2h0M250.8 658.9h0M445.5 659.1h0M330.2 703.1h0" stroke="#ddd9f1" stroke-width="6.2" stroke-linecap="round"/><path d="M496.0 298.5h0M619.3 298.7h0M575.3 307.6h0M734.1 307.5h0M814.0 316.3h0M471.5 333.8h0M127.8 342.7h0M462.9 342.8h0M822.7 342.3h0M118.3 351.1h0M242.2 351.0h0M471.5 351.6h0M549.2 351.7h0M303.8 360.1h0M787.0 360.4h0M725.6 369.2h0M787.0 377.6h0M206.7 386.6h0M436.2 386.9h0M180.1 395.4h0M610.9 395.4h0M716.2 395.6h0M162.6 412.5h0M286.4 413.3h0M849.3 421.9h0M330.2 439.0h0M436.0 439.2h0M496.0 439.7h0M601.7 439.5h0M521.9 448.0h0M787.1 465.5h0M206.7 474.8h0M707.7 474.9h0M180.6 483.2h0M445.6 483.6h0M463.0 483.7h0M610.6 483.3h0M716.1 482.9h0M549.2 491.7h0M760.8 491.9h0M504.3 501.2h0M145.4 518.4h0M322.0 518.6h0M339.6 518.4h0M698.9 518.4h0M725.4 527.0h0M215.6 535.8h0M445.0 535.8h0M189.0 545.0h0M418.8 545.3h0M233.1 553.6h0M628.3 553.8h0M513.9 580.0h0M743.4 580.2h0M795.6 597.3h0M400.5 615.1h0M496.0 615.5h0M716.8 624.5h0M347.7 632.6h0M242.2 650.5h0M495.9 650.6h0M215.9 659.4h0M444.9 676.9h0M610.7 676.7h0M224.0 685.6h0M566.4 686.1h0M848.6 685.9h0M242.4 703.4h0M365.4 703.4h0M531.4 703.2h0M445.1 712.2h0M787.4 712.3h0M321.9 727.1h0M427.5 727.3h0M708.0 736.2h0M206.7 754.3h0M796.3 753.9h0M761.7 441.8h0M499.1 425.8h0M194.6 447.6h0M711.9 425.0h0M652.6 450.6h0M531.8 436.3h0M104.2 481.7h0M353.0 442.2h0M224.1 439.5h0M837.8 447.6h0M284.4 559.4h0M814.2 567.0h0M833.0 570.7h0M725.5 603.8h0" stroke="#bfe3f7" stroke-width="4.8" stroke-linecap="round"/><path d="M601.8 298.4h0M681.1 307.1h0M400.6 315.7h0M549.0 316.0h0M707.4 315.9h0M410.2 342.6h0M681.5 342.3h0M769.5 342.6h0M224.7 403.8h0M400.7 421.8h0M453.9 421.9h0M198.0 447.7h0M663.8 466.1h0M188.9 474.3h0M760.4 474.7h0M409.7 483.5h0M100.5 492.0h0M144.9 500.7h0M198.4 501.2h0M259.8 509.8h0M822.3 518.5h0M365.2 527.3h0M418.2 527.4h0M548.6 527.1h0M286.6 535.9h0M153.9 545.2h0M584.0 544.8h0M769.3 553.8h0M242.3 562.3h0M321.4 589.0h0M206.6 597.7h0M471.8 614.9h0M374.8 624.4h0M549.2 632.9h0M707.8 650.6h0M778.0 650.4h0M339.1 659.0h0M699.0 677.2h0M347.9 754.4h0M749.4 478.2h0M584.9 465.1h0M576.4 425.8h0M268.2 435.0h0M436.9 448.3h0M592.4 453.6h0" stroke="#d89cc4" stroke-width="4" stroke-linecap="round"/><path d="M637.2 298.3h0M118.3 333.3h0M743.2 333.8h0M778.6 351.1h0M690.3 369.2h0M242.0 386.6h0M312.7 404.0h0M583.8 439.1h0M601.8 527.1h0M698.9 536.3h0M171.2 562.3h0M162.5 659.2h0M680.8 712.0h0M849.3 718.2h0M348.1 735.9h0M708.1 754.3h0M837.2 428.6h0M137.5 461.0h0M241.1 426.4h0M800.9 433.8h0M252.5 433.7h0M716.9 469.4h0M313.6 605.4h0M204.4 560.1h0M682.9 552.5h0" stroke="#b9b0e0" stroke-width="3.4" stroke-linecap="round"/><path d="M725.5 298.6h0M224.1 334.0h0M435.8 351.1h0M743.0 351.4h0M322.0 395.6h0M427.4 395.7h0M663.9 395.1h0M575.5 412.5h0M127.7 430.1h0M716.6 447.9h0M277.3 474.5h0M690.1 527.1h0M522.1 536.1h0M496.2 562.5h0M672.5 580.5h0M540.2 589.1h0M224.6 598.0h0M531.4 598.0h0M557.4 606.5h0M566.6 615.1h0M444.9 641.4h0M663.8 641.7h0M453.5 718.2h0M304.2 727.5h0M628.2 727.7h0M814.0 735.9h0M486.7 745.5h0" stroke="#cdc6ea" stroke-width="6.2" stroke-linecap="round"/><path d="M814.0 298.7h0M645.9 342.9h0M566.2 351.3h0M761.0 351.2h0M100.6 368.6h0M548.7 386.1h0M100.6 421.5h0M778.7 457.3h0M339.2 483.1h0M707.5 491.9h0M374.5 518.5h0M716.6 553.4h0M286.5 589.2h0M409.6 606.8h0M180.2 623.9h0M215.8 641.6h0M462.8 694.1h0M136.0 703.5h0M462.6 711.8h0M504.3 712.4h0M135.7 454.9h0M742.0 481.6h0M829.5 459.7h0M281.8 453.5h0M491.5 443.4h0M617.1 462.8h0M145.2 426.6h0M438.2 466.6h0M502.2 470.3h0M179.4 446.1h0M206.4 607.3h0" stroke="#a866b4" stroke-width="3.4" stroke-linecap="round"/><path d="M180.2 307.3h0M101.1 315.9h0M646.1 324.7h0M286.5 342.2h0M610.7 342.3h0M127.2 360.3h0M339.1 377.5h0M383.0 386.6h0M689.8 386.5h0M241.7 404.2h0M751.4 483.0h0M575.0 518.8h0M259.6 527.6h0M392.5 553.9h0M725.3 562.3h0M592.7 571.5h0M769.4 571.3h0M786.8 571.4h0M303.8 588.6h0M463.0 588.8h0M486.8 606.5h0M188.8 615.2h0M548.6 615.7h0M392.2 659.6h0M365.5 668.4h0M383.5 668.3h0M796.1 685.6h0M268.6 694.3h0M540.3 694.6h0M471.2 703.5h0M303.7 712.3h0M513.3 718.6h0M805.0 727.5h0M572.3 439.3h0M139.2 426.1h0M639.8 451.3h0M332.3 467.3h0M589.4 445.8h0M655.5 442.9h0M625.9 482.9h0M408.7 458.6h0M426.4 422.3h0M176.7 443.0h0" stroke="#86b2e6" stroke-width="2.6" stroke-linecap="round"/><path d="M198.0 307.2h0M769.4 307.0h0M427.5 360.3h0M383.2 368.6h0M163.0 377.4h0M127.3 395.0h0M831.6 404.5h0M136.1 422.0h0M513.8 421.6h0M153.4 456.5h0M118.1 474.8h0M268.9 518.5h0M145.4 536.3h0M462.6 535.8h0M601.8 545.1h0M698.6 553.3h0M259.8 580.0h0M769.6 606.9h0M418.5 615.4h0M322.1 641.8h0M742.9 650.4h0M463.0 659.6h0M303.9 676.6h0M436.0 685.8h0M619.3 685.6h0M637.5 685.9h0M689.9 685.4h0M505.0 694.5h0M602.2 703.4h0M486.9 711.9h0M733.8 712.3h0M409.8 745.1h0M734.3 745.1h0M478.2 754.4h0" stroke="#bfe3f7" stroke-width="6.2" stroke-linecap="round"/><path d="M251.3 307.7h0M849.1 316.1h0M822.5 325.0h0M445.6 342.5h0M804.4 342.3h0M505.0 395.4h0M471.6 403.7h0M707.5 403.9h0M136.3 439.3h0M445.4 448.3h0M100.8 456.8h0M840.0 483.5h0M601.9 492.5h0M312.8 509.9h0M427.4 518.4h0M716.2 588.8h0M708.0 597.7h0M392.6 606.1h0M198.2 624.4h0M592.9 641.7h0M699.0 659.0h0M566.8 668.0h0M365.4 685.7h0M787.1 727.5h0M153.6 735.8h0M462.7 440.2h0M601.3 440.6h0M239.5 442.3h0M337.7 448.0h0M479.7 604.4h0" stroke="#d89cc4" stroke-width="3.4" stroke-linecap="round"/><path d="M286.3 307.4h0M330.1 316.0h0M322.1 325.3h0M357.4 325.1h0M804.9 324.5h0M636.8 333.5h0M707.5 333.7h0M813.7 334.0h0M663.6 342.4h0M198.1 360.0h0M374.4 360.2h0M445.5 360.0h0M487.0 360.4h0M672.7 368.5h0M708.0 369.1h0M101.1 386.6h0M136.3 386.1h0M619.5 386.4h0M118.3 404.1h0M135.8 404.1h0M294.6 403.7h0M601.7 421.6h0M619.7 422.1h0M689.9 421.6h0M268.4 430.6h0M557.7 430.4h0M619.6 439.4h0M689.8 439.7h0M778.0 439.2h0M330.0 457.1h0M725.4 457.0h0M127.6 465.6h0M286.6 466.0h0M504.3 465.5h0M171.7 474.2h0M471.2 474.6h0M171.4 491.8h0M478.1 492.3h0M286.3 500.9h0M663.7 518.3h0M778.6 527.1h0M409.6 536.0h0M286.3 553.4h0M672.7 562.7h0M504.4 588.7h0M188.9 598.0h0M347.5 597.7h0M839.8 606.3h0M197.8 641.6h0M118.8 650.8h0M672.5 650.2h0M145.4 659.3h0M198.1 659.1h0M628.5 659.5h0M751.7 659.4h0M513.9 668.1h0M813.5 668.3h0M593.0 694.9h0M716.7 694.4h0M655.0 703.0h0M539.8 712.0h0M312.9 736.3h0M339.5 745.2h0M445.3 745.0h0M602.2 754.1h0M817.5 459.6h0M147.6 438.5h0M452.8 431.2h0M791.0 435.0h0M755.2 444.1h0M417.4 433.2h0M748.2 467.8h0M472.2 466.2h0M108.4 476.3h0M469.5 580.8h0M595.5 565.5h0" stroke="#b9b0e0" stroke-width="4.8" stroke-linecap="round"/><path d="M339.1 307.0h0M716.2 307.0h0M496.2 316.1h0M760.7 316.2h0M294.8 333.5h0M180.5 377.5h0M733.8 377.8h0M849.1 403.8h0M198.5 430.7h0M733.9 447.7h0M241.7 457.0h0M680.8 465.9h0M716.1 465.9h0M566.3 474.3h0M654.5 474.6h0M153.4 491.9h0M716.3 518.3h0M672.2 527.6h0M734.1 536.0h0M804.4 536.2h0M478.7 545.1h0M795.8 545.2h0M462.7 553.4h0M610.2 553.6h0M400.9 562.7h0M198.4 571.6h0M557.9 589.2h0M575.2 589.2h0M365.9 597.8h0M454.1 598.1h0M831.6 597.9h0M277.6 615.6h0M312.9 615.4h0M478.0 615.6h0M233.3 623.8h0M522.0 624.3h0M224.4 632.8h0M557.9 659.6h0M839.9 659.1h0M761.1 668.4h0M681.1 677.0h0M787.4 677.3h0M478.4 685.4h0M409.8 694.6h0M259.7 703.6h0M427.3 712.4h0M610.4 712.0h0M839.7 711.9h0M610.3 727.3h0M663.4 727.2h0M431.7 463.0h0M357.2 430.1h0M713.2 474.9h0M457.0 441.6h0M209.7 430.8h0M169.2 439.5h0" stroke="#ddd9f1" stroke-width="4.8" stroke-linecap="round"/><path d="M357.0 307.0h0M392.6 307.6h0M849.3 333.6h0M329.9 351.2h0M707.6 351.7h0M734.2 395.7h0M822.0 413.1h0M769.6 430.3h0M814.0 474.2h0M822.5 483.0h0M574.9 500.7h0M163.2 518.3h0M505.0 518.7h0M163.2 694.3h0M163.1 712.2h0M392.6 744.9h0M681.5 745.0h0M189.0 754.4h0M717.7 448.6h0M292.5 442.9h0" stroke="#7a52a8" stroke-width="4" stroke-linecap="round"/><path d="M592.5 307.4h0M796.2 315.8h0M601.6 334.0h0M743.0 368.9h0M251.0 378.0h0M610.8 430.3h0M189.4 439.3h0M734.0 500.8h0M610.5 536.3h0M575.0 571.4h0M401.1 597.5h0M118.3 615.6h0M329.9 615.5h0M804.6 623.7h0M294.6 632.7h0M575.3 641.5h0M531.5 718.0h0M637.2 718.8h0M504.7 727.0h0M665.5 425.9h0M223.8 448.0h0M325.5 448.6h0M743.0 420.4h0M791.6 473.4h0M384.9 453.0h0M328.1 579.8h0M381.1 585.5h0M439.1 590.8h0M604.8 608.2h0M376.6 584.7h0M353.8 576.5h0" stroke="#cdc6ea" stroke-width="5.6" stroke-linecap="round"/><path d="M136.2 315.8h0M522.3 342.6h0M602.1 369.2h0M259.9 386.8h0M418.4 439.3h0M365.5 456.7h0M110.1 501.0h0M153.9 615.3h0M654.7 615.7h0M654.5 650.5h0M304.0 659.1h0M610.2 659.5h0M645.6 659.4h0M162.5 727.5h0M849.0 735.9h0M427.7 745.3h0M778.0 754.3h0" stroke="#b9b0e0" stroke-width="6.2" stroke-linecap="round"/><path d="M153.4 316.5h0M206.5 316.5h0M392.3 342.6h0M575.4 342.7h0M418.4 350.9h0M584.0 351.6h0M277.2 368.8h0M259.8 404.2h0M454.1 403.8h0M522.5 413.2h0M445.4 501.1h0M751.7 518.3h0M171.4 580.2h0M145.1 606.4h0M233.1 606.1h0M681.2 624.2h0M761.1 650.8h0M241.8 668.3h0M277.7 667.9h0M109.9 677.0h0M822.2 676.7h0M321.4 694.2h0M663.4 694.4h0M454.2 703.6h0M637.2 703.3h0M171.2 718.4h0M277.6 718.1h0M760.4 718.2h0M215.4 727.4h0M286.4 744.7h0" stroke="#9fd2f2" stroke-width="6.2" stroke-linecap="round"/><path d="M171.4 316.2h0M304.3 324.8h0M374.6 325.2h0M619.8 333.6h0M486.9 342.2h0M418.8 404.1h0M250.7 430.4h0M215.6 448.3h0M610.7 466.1h0M135.8 474.8h0M224.1 492.5h0M619.8 492.4h0M163.0 500.7h0M689.9 509.4h0M539.9 606.2h0M453.5 615.3h0M619.8 650.1h0M251.4 677.0h0M822.6 711.9h0M173.4 464.1h0M399.6 458.9h0M203.3 432.9h0M139.4 431.0h0M140.8 561.3h0" stroke="#6e9ee0" stroke-width="5.6" stroke-linecap="round"/><path d="M189.0 315.8h0M286.5 377.4h0M330.0 386.7h0M478.1 404.2h0M206.9 422.1h0M636.9 439.5h0M268.9 447.8h0M136.4 509.7h0M110.3 518.6h0M478.2 562.7h0M180.8 571.6h0M356.9 588.6h0M224.6 650.9h0M496.3 718.2h0M410.0 727.5h0M435.9 736.3h0M610.6 745.0h0M241.9 753.8h0M780.8 438.1h0M292.1 458.0h0M146.6 445.0h0M214.8 463.2h0M693.1 477.1h0" stroke="#7a52a8" stroke-width="4.8" stroke-linecap="round"/><path d="M347.5 316.2h0M330.4 333.5h0M383.5 333.6h0M304.2 342.3h0M188.8 351.1h0M259.3 351.5h0M453.7 351.5h0M135.7 369.2h0M513.5 403.8h0M383.2 421.5h0M487.3 430.6h0M601.9 474.5h0M813.5 509.6h0M436.5 580.1h0M787.3 606.7h0M487.1 623.7h0M180.8 641.8h0M610.9 641.4h0M584.5 703.6h0M356.8 712.1h0M206.8 718.0h0M435.8 718.5h0M380.8 450.6h0M351.1 461.1h0M246.2 451.8h0M118.8 466.1h0M606.4 449.7h0M203.0 456.0h0M841.8 454.4h0M829.9 466.7h0M335.1 477.4h0M790.6 430.7h0M685.7 424.2h0M766.0 569.2h0M486.7 587.1h0" stroke="#9fd2f2" stroke-width="3.4" stroke-linecap="round"/><path d="M471.2 315.9h0M531.2 316.0h0M127.8 324.9h0M401.2 368.6h0M610.8 377.9h0M583.9 404.0h0M478.6 421.6h0M796.3 422.0h0M539.9 465.3h0M118.2 492.1h0M101.0 718.6h0M383.6 718.4h0M549.1 718.4h0M804.8 745.4h0" stroke="#a866b4" stroke-width="6.2" stroke-linecap="round"/><path d="M566.5 316.0h0M778.7 333.4h0M118.8 421.3h0M804.4 447.7h0M848.7 474.7h0M259.6 492.0h0M188.7 509.6h0M548.8 510.1h0M392.6 518.6h0M690.2 545.1h0M127.2 553.5h0M831.4 562.5h0M294.6 579.8h0M575.4 606.3h0M831.4 615.6h0M400.6 632.9h0M277.3 650.2h0M521.2 421.8h0M343.2 425.9h0M523.6 450.6h0M574.5 441.7h0M397.7 587.8h0" stroke="#b9b0e0" stroke-width="5.6" stroke-linecap="round"/><path d="M339.3 325.1h0M400.9 386.7h0M286.7 430.9h0M539.8 430.8h0M840.1 430.8h0M171.3 439.7h0M654.4 439.3h0M110.3 465.4h0M495.9 491.9h0M610.3 500.8h0M839.9 500.7h0M513.4 562.3h0M268.8 571.5h0M531.2 615.2h0M504.4 641.7h0M418.2 650.9h0M504.8 676.7h0M118.7 685.5h0M672.2 685.3h0M154.0 703.1h0M392.4 711.7h0M804.5 711.8h0M286.1 727.2h0M206.9 736.5h0M743.4 736.5h0M668.5 475.6h0M223.6 456.1h0M133.1 472.5h0M515.7 473.0h0M280.5 474.5h0" stroke="#a866b4" stroke-width="5.6" stroke-linecap="round"/><path d="M487.0 325.1h0M654.6 351.1h0M463.0 360.4h0M206.5 368.9h0M145.5 412.9h0M513.5 492.4h0M478.3 509.7h0M357.3 553.9h0M418.3 580.0h0M418.6 597.6h0M462.9 624.0h0M636.8 633.1h0M804.6 641.9h0M410.1 659.6h0M180.8 727.1h0M277.6 736.1h0" stroke="#d89cc4" stroke-width="6.2" stroke-linecap="round"/><path d="M522.5 324.6h0M680.8 324.6h0M549.1 334.1h0M698.8 360.0h0M365.6 369.3h0M418.1 369.3h0M522.4 378.0h0M628.1 377.3h0M619.3 474.7h0M242.4 509.9h0M522.2 518.5h0M180.8 536.3h0M471.6 562.1h0M109.9 571.0h0M645.9 571.3h0M654.7 597.5h0M725.3 597.5h0M392.0 624.3h0M804.4 659.0h0M427.6 676.9h0M761.1 685.6h0M840.2 694.2h0M400.7 703.7h0M418.1 454.6h0M733.6 458.4h0M455.7 472.6h0M794.8 474.2h0M174.9 442.4h0M254.9 451.9h0M160.9 462.3h0M367.0 587.8h0M263.9 577.1h0" stroke="#6e9ee0" stroke-width="3.4" stroke-linecap="round"/><path d="M592.8 325.1h0M339.0 359.8h0M374.6 395.0h0M831.3 439.1h0M496.0 457.2h0M259.5 632.5h0M453.6 633.0h0M796.0 632.8h0M100.8 685.9h0M110.2 727.2h0M663.9 459.4h0M245.3 602.3h0" stroke="#7a52a8" stroke-width="5.6" stroke-linecap="round"/><path d="M840.4 325.1h0M504.3 342.9h0M250.8 395.5h0M584.0 474.1h0M436.1 615.5h0M313.0 632.6h0M822.7 727.2h0M690.3 736.2h0M436.1 479.7h0M340.0 459.0h0M819.7 430.1h0M836.5 421.7h0" stroke="#d9559c" stroke-width="4.8" stroke-linecap="round"/><path d="M101.2 333.3h0M690.1 404.0h0M548.8 439.5h0M410.2 465.4h0M716.6 711.7h0" stroke="#d9559c" stroke-width="5.6" stroke-linecap="round"/><path d="M690.5 333.7h0M268.4 377.4h0M233.6 536.0h0M162.5 589.2h0M752.0 641.9h0" stroke="#d9559c" stroke-width="6.2" stroke-linecap="round"/><path d="M813.3 351.5h0M409.8 378.1h0M357.4 448.1h0M681.4 500.7h0M118.7 527.2h0M250.9 623.8h0M250.8 694.5h0M294.7 703.6h0M347.7 703.0h0M753.7 461.2h0M364.0 606.3h0" stroke="#7a52a8" stroke-width="3.4" stroke-linecap="round"/><path d="M557.6 359.8h0M453.5 368.8h0M637.3 422.1h0M312.7 439.4h0M831.3 456.7h0M435.8 474.3h0M531.6 474.2h0M400.7 527.1h0M637.4 527.0h0M312.6 562.8h0M751.8 571.3h0M531.4 579.7h0M215.8 606.2h0M602.1 633.2h0M127.5 641.7h0M251.3 641.9h0M840.0 676.8h0M171.5 703.1h0M725.2 703.5h0M454.1 736.1h0M672.3 753.8h0M571.4 484.1h0M475.0 445.0h0M345.2 440.6h0M190.8 445.8h0M782.8 438.4h0M398.1 467.6h0M461.7 451.0h0M319.6 461.0h0M628.2 447.3h0M358.0 456.4h0M357.2 440.7h0M580.6 453.3h0M222.2 558.2h0M517.4 598.0h0M416.5 554.2h0" stroke="#9fd2f2" stroke-width="5.6" stroke-linecap="round"/><path d="M118.1 369.0h0M504.3 553.3h0M216.1 589.1h0M787.2 624.4h0M330.5 632.5h0M136.1 668.5h0M153.4 667.7h0M734.4 676.8h0M374.7 694.6h0M813.4 568.5h0M184.0 571.7h0" stroke="#7a52a8" stroke-width="2.6" stroke-linecap="round"/><path d="M592.5 395.5h0M348.1 421.5h0M109.7 624.2h0M136.0 754.1h0M324.7 483.3h0" stroke="#d9559c" stroke-width="4" stroke-linecap="round"/><path d="M445.2 413.0h0M645.9 412.9h0M462.7 430.3h0M751.9 465.7h0M198.3 553.7h0M409.8 588.9h0M584.0 632.8h0" stroke="#7a52a8" stroke-width="6.2" stroke-linecap="round"/><path d="M382.8 439.4h0M804.6 466.0h0M453.8 474.9h0M198.0 483.2h0M593.3 483.6h0M672.4 492.0h0M374.7 500.7h0M206.9 509.9h0M445.1 518.8h0M769.7 518.2h0M118.8 544.8h0M619.3 545.0h0M778.0 544.6h0M154.1 580.1h0M699.1 588.6h0M127.3 606.2h0M286.2 606.4h0M100.7 650.5h0M822.0 659.0h0M831.2 667.9h0M619.7 718.7h0M655.0 735.9h0M233.3 745.1h0M118.4 754.0h0M171.6 754.2h0M438.4 441.6h0M486.9 482.5h0M209.3 434.0h0M448.8 481.5h0M457.3 482.5h0M483.5 463.8h0M320.9 569.0h0M633.8 605.3h0M538.7 602.8h0" stroke="#ddd9f1" stroke-width="5.6" stroke-linecap="round"/><path d="M557.3 483.6h0M374.4 571.0h0M144.8 641.6h0M264.8 443.4h0M307.5 452.1h0M135.4 456.9h0M346.9 422.1h0" stroke="#d9559c" stroke-width="2.6" stroke-linecap="round"/><path d="M180.6 518.3h0M716.7 606.2h0" stroke="#d9559c" stroke-width="3.4" stroke-linecap="round"/><defs><filter id="sh" x="-50%" y="-10%" width="200%" height="120%"><feGaussianBlur stdDeviation="2.5"/></filter><filter id="sh2" x="-50%" y="-50%" width="200%" height="200%"><feGaussianBlur stdDeviation="2"/></filter></defs><rect x="386.4" y="282" width="22.6" height="477" fill="#6f906f" opacity="0.75" filter="url(#sh)"/><rect x="382.4" y="279" width="22.6" height="476.5" fill="#e2869e"/><rect x="743.0" y="282" width="22.6" height="477" fill="#6f906f" opacity="0.75" filter="url(#sh)"/><rect x="739.0" y="279" width="22.6" height="476.5" fill="#e2869e"/><line x1="126.3" y1="417.4" x2="126.3" y2="616.0" stroke="#6cbf4c" stroke-width="1.3"/><line x1="305.0" y1="417.4" x2="305.0" y2="616.0" stroke="#6cbf4c" stroke-width="1.3"/><line x1="483.6" y1="417.4" x2="483.6" y2="616.0" stroke="#6cbf4c" stroke-width="1.3"/><line x1="662.3" y1="417.4" x2="662.3" y2="616.0" stroke="#6cbf4c" stroke-width="1.3"/><line x1="126.3" y1="487.2" x2="840" y2="487.2" stroke="#2f8f8a" stroke-width="1.4"/><line x1="126.3" y1="546.8" x2="840" y2="546.8" stroke="#2f8f8a" stroke-width="1.4"/><polyline points="126.3,487.2 162.8,417.4" fill="none" stroke="#6cbf4c" stroke-width="1.3" stroke-linejoin="miter"/><polyline points="126.3,546.8 162.8,616.0" fill="none" stroke="#6cbf4c" stroke-width="1.3" stroke-linejoin="miter"/><polyline points="268.5,417.4 305.0,487.2" fill="none" stroke="#6cbf4c" stroke-width="1.3" stroke-linejoin="miter"/><polyline points="268.5,616.0 305.0,546.8" fill="none" stroke="#6cbf4c" stroke-width="1.3" stroke-linejoin="miter"/><polyline points="305.0,487.2 341.5,417.4" fill="none" stroke="#6cbf4c" stroke-width="1.3" stroke-linejoin="miter"/><polyline points="305.0,546.8 341.5,616.0" fill="none" stroke="#6cbf4c" stroke-width="1.3" stroke-linejoin="miter"/><polyline points="447.1,417.4 483.6,487.2" fill="none" stroke="#6cbf4c" stroke-width="1.3" stroke-linejoin="miter"/><polyline points="447.1,616.0 483.6,546.8" fill="none" stroke="#6cbf4c" stroke-width="1.3" stroke-linejoin="miter"/><polyline points="483.6,487.2 520.1,417.4" fill="none" stroke="#6cbf4c" stroke-width="1.3" stroke-linejoin="miter"/><polyline points="483.6,546.8 520.1,616.0" fill="none" stroke="#6cbf4c" stroke-width="1.3" stroke-linejoin="miter"/><polyline points="625.8,417.4 662.3,487.2" fill="none" stroke="#6cbf4c" stroke-width="1.3" stroke-linejoin="miter"/><polyline points="625.8,616.0 662.3,546.8" fill="none" stroke="#6cbf4c" stroke-width="1.3" stroke-linejoin="miter"/><polyline points="662.3,487.2 698.8,417.4" fill="none" stroke="#6cbf4c" stroke-width="1.3" stroke-linejoin="miter"/><polyline points="662.3,546.8 698.8,616.0" fill="none" stroke="#6cbf4c" stroke-width="1.3" stroke-linejoin="miter"/><polyline points="803.5,417.4 840.0,487.2" fill="none" stroke="#6cbf4c" stroke-width="1.3" stroke-linejoin="miter"/><polyline points="803.5,616.0 840.0,546.8" fill="none" stroke="#6cbf4c" stroke-width="1.3" stroke-linejoin="miter"/><line x1="126.3" y1="417.4" x2="163.4" y2="417.4" stroke="#e8703a" stroke-width="1.3"/><line x1="163.4" y1="417.4" x2="269" y2="417.4" stroke="#6cbf4c" stroke-width="1.3"/><line x1="269" y1="417.4" x2="340.6" y2="417.4" stroke="#e8703a" stroke-width="1.3"/><line x1="340.6" y1="417.4" x2="448" y2="417.4" stroke="#6cbf4c" stroke-width="1.3"/><line x1="448" y1="417.4" x2="519.5" y2="417.4" stroke="#e8703a" stroke-width="1.3"/><line x1="519.5" y1="417.4" x2="625.2" y2="417.4" stroke="#6cbf4c" stroke-width="1.3"/><line x1="625.2" y1="417.4" x2="840" y2="417.4" stroke="#e8703a" stroke-width="1.3"/><line x1="126.3" y1="616.0" x2="163.4" y2="616.0" stroke="#e8382a" stroke-width="1.3"/><line x1="163.4" y1="616.0" x2="269.5" y2="616.0" stroke="#6cbf4c" stroke-width="1.3"/><line x1="269.5" y1="616.0" x2="340.6" y2="616.0" stroke="#e8382a" stroke-width="1.3"/><line x1="340.6" y1="616.0" x2="448" y2="616.0" stroke="#6cbf4c" stroke-width="1.3"/><line x1="448" y1="616.0" x2="520" y2="616.0" stroke="#e8382a" stroke-width="1.3"/><line x1="520" y1="616.0" x2="625" y2="616.0" stroke="#6cbf4c" stroke-width="1.3"/><line x1="625" y1="616.0" x2="840" y2="616.0" stroke="#e8382a" stroke-width="1.3"/><line x1="840" y1="417.4" x2="840" y2="616.0" stroke="#e8703a" stroke-width="1.3"/><polyline points="126.3,417.4 102.3,424.4 102.3,436.9 126.3,487.2" fill="none" stroke="#e8382a" stroke-width="1.3" stroke-linejoin="miter"/><polyline points="126.3,487.2 102,493.3 102,540.7 126.3,546.8" fill="none" stroke="#e8382a" stroke-width="1.3" stroke-linejoin="miter"/><polyline points="126.3,546.8 102,596.7 102,610 126.3,616.0" fill="none" stroke="#e8382a" stroke-width="1.3" stroke-linejoin="miter"/><polyline points="163.4,417.4 163.4,404.4 168.5,400 180,353.4 259.4,353.4 263.6,411.9 269,417.4" fill="none" stroke="#e8382a" stroke-width="1.3" stroke-linejoin="miter"/><polyline points="519.5,417.4 525,411.9 529.2,353.4 608.5,353.4 621,399.3 625.2,405 625.2,417.4" fill="none" stroke="#e8382a" stroke-width="1.3" stroke-linejoin="miter"/><path d="M340.6 417.4 V311.7 M448 311.7 V417.4" fill="none" stroke="#e8703a" stroke-width="1.3"/><path d="M340.6 311.7 C340.6 300 346 289 356 288.9 H433 C443 289 448 300 448 311.7" fill="none" stroke="#e8382a" stroke-width="1.3"/><polyline points="340.6,311.7 358.6,311.7 358.6,314.5" fill="none" stroke="#e8382a" stroke-width="1.3" stroke-linejoin="miter"/><polyline points="429.8,314.5 429.8,311.7 448,311.7" fill="none" stroke="#e8382a" stroke-width="1.3" stroke-linejoin="miter"/><line x1="358.6" y1="312.8" x2="429.8" y2="312.8" stroke="#6cbf4c" stroke-width="1.3"/><polyline points="163.4,616.0 163.8,628 168,632.8 180,680.8 259.5,680.8 262.8,622 269.2,616.0" fill="none" stroke="#e8382a" stroke-width="1.3" stroke-linejoin="miter"/><polyline points="519.5,616.0 525.4,622.2 529.5,681 608.5,681 621.5,634.7 625.6,630.3 625.6,616.0" fill="none" stroke="#e8382a" stroke-width="1.3" stroke-linejoin="miter"/><path d="M340.6 616.0 V722.6 M448 722.6 V616.0" fill="none" stroke="#e8703a" stroke-width="1.3"/><path d="M340.6 722.6 C340.6 734 346 745.3 356 745.3 H433 C443 745.3 448 734 448 722.6" fill="none" stroke="#e8382a" stroke-width="1.3"/><polyline points="340.6,722.6 358.6,722.6 358.6,718.5" fill="none" stroke="#e8382a" stroke-width="1.3" stroke-linejoin="miter"/><polyline points="430.1,718.5 430.1,722.6 448,722.6" fill="none" stroke="#e8382a" stroke-width="1.3" stroke-linejoin="miter"/><line x1="358.6" y1="721.2" x2="430.1" y2="721.2" stroke="#6cbf4c" stroke-width="1.3"/><g transform="translate(214.3,517.2)"><circle r="25.3" fill="#000" opacity="0.12" transform="translate(1.5,2)" filter="url(#sh2)"/><circle r="23.7" fill="#d9283e"/><path d="M0 0 Q5.9 -11.6 23.7 0.0 A23.7 23.7 0 0 1 22.9 6.0 Q8.7 -9.7 0 0Z" fill="#fff"/><path d="M0 0 Q11.6 -5.9 19.2 13.9 A23.7 23.7 0 0 1 15.0 18.4 Q12.7 -2.8 0 0Z" fill="#fff"/><path d="M0 0 Q12.9 2.0 7.3 22.5 A23.7 23.7 0 0 1 1.3 23.7 Q11.9 5.2 0 0Z" fill="#fff"/><path d="M0 0 Q9.2 9.2 -7.3 22.5 A23.7 23.7 0 0 1 -12.8 19.9 Q6.6 11.3 0 0Z" fill="#fff"/><path d="M0 0 Q2.0 12.9 -19.2 13.9 A23.7 23.7 0 0 1 -22.1 8.6 Q-1.3 13.0 0 0Z" fill="#fff"/><path d="M0 0 Q-5.9 11.6 -23.7 0.0 A23.7 23.7 0 0 1 -22.9 -6.0 Q-8.7 9.7 0 0Z" fill="#fff"/><path d="M0 0 Q-11.6 5.9 -19.2 -13.9 A23.7 23.7 0 0 1 -15.0 -18.4 Q-12.7 2.8 0 0Z" fill="#fff"/><path d="M0 0 Q-12.9 -2.0 -7.3 -22.5 A23.7 23.7 0 0 1 -1.3 -23.7 Q-11.9 -5.2 0 0Z" fill="#fff"/><path d="M0 0 Q-9.2 -9.2 7.3 -22.5 A23.7 23.7 0 0 1 12.8 -19.9 Q-6.6 -11.3 0 0Z" fill="#fff"/><path d="M0 0 Q-2.0 -12.9 19.2 -13.9 A23.7 23.7 0 0 1 22.1 -8.6 Q1.3 -13.0 0 0Z" fill="#fff"/><circle r="22.7" fill="none" stroke="#c01c30" stroke-width="2" opacity="0.55"/><circle r="23.5" fill="none" stroke="#f4d0d0" stroke-width="0.8" opacity="0.7"/></g><g transform="translate(394,517.2)"><g transform="translate(2,2.5)" opacity="0.3" filter="url(#sh2)"><circle cx="0.0" cy="15.0" r="11" fill="#000"/><circle cx="-13.0" cy="7.5" r="11" fill="#000"/><circle cx="-13.0" cy="-7.5" r="11" fill="#000"/><circle cx="-0.0" cy="-15.0" r="11" fill="#000"/><circle cx="13.0" cy="-7.5" r="11" fill="#000"/><circle cx="13.0" cy="7.5" r="11" fill="#000"/></g><circle cx="0.0" cy="15.5" r="12" fill="#fff"/><circle cx="-13.4" cy="7.8" r="12" fill="#fff"/><circle cx="-13.4" cy="-7.7" r="12" fill="#fff"/><circle cx="-0.0" cy="-15.5" r="12" fill="#fff"/><circle cx="13.4" cy="-7.8" r="12" fill="#fff"/><circle cx="13.4" cy="7.8" r="12" fill="#fff"/><circle r="17" fill="#fff"/><circle cx="0.0" cy="14.5" r="10.3" fill="#f2bccd"/><circle cx="-12.6" cy="7.3" r="10.3" fill="#f2bccd"/><circle cx="-12.6" cy="-7.2" r="10.3" fill="#f2bccd"/><circle cx="-0.0" cy="-14.5" r="10.3" fill="#f2bccd"/><circle cx="12.6" cy="-7.3" r="10.3" fill="#f2bccd"/><circle cx="12.6" cy="7.2" r="10.3" fill="#f2bccd"/><circle r="15" fill="#f2bccd"/><circle r="19.5" fill="none" stroke="#e89ab2" stroke-width="3" opacity="0.5"/><circle r="17.7" fill="#5b2219"/><circle r="15.5" fill="#6e3326"/><path d="M-8 -3 C-8 -12 8 -12 8 -3Z" fill="#8f4a3a"/><text x="0" y="0.5" text-anchor="middle" font-family="Liberation Sans" font-weight="bold" font-size="7" fill="#f6e4e4" transform="scale(0.8,1)">SWEET</text><text x="0" y="8" text-anchor="middle" font-family="Liberation Sans" font-weight="bold" font-size="7" fill="#f6e4e4" transform="scale(0.72,1)">DESSERT</text></g><line x1="343.5" y1="585" x2="360" y2="610" stroke="#000" opacity="0.12" stroke-width="3" filter="url(#sh2)"/><line x1="341.5" y1="583" x2="358" y2="608" stroke="#e8e8ec" stroke-width="2"/><line x1="341.5" y1="583" x2="358" y2="608" stroke="#a8a8b0" stroke-width="1.6" stroke-dasharray="1 1.5"/><g transform="translate(332.8,571)"><circle r="13.6" fill="#000" opacity="0.12" transform="translate(1.5,2)" filter="url(#sh2)"/><circle r="12" fill="#d9283e"/><path d="M0 0 Q3.0 -5.9 12.0 0.0 A12 12 0 0 1 11.5 3.4 Q4.5 -4.8 0 0Z" fill="#fff"/><path d="M0 0 Q6.1 -2.6 9.2 7.7 A12 12 0 0 1 6.6 10.0 Q6.6 -0.8 0 0Z" fill="#fff"/><path d="M0 0 Q6.3 1.9 2.1 11.8 A12 12 0 0 1 -1.3 11.9 Q5.5 3.6 0 0Z" fill="#fff"/><path d="M0 0 Q3.6 5.5 -6.0 10.4 A12 12 0 0 1 -8.7 8.3 Q1.9 6.3 0 0Z" fill="#fff"/><path d="M0 0 Q-0.8 6.6 -11.3 4.1 A12 12 0 0 1 -12.0 0.8 Q-2.6 6.1 0 0Z" fill="#fff"/><path d="M0 0 Q-4.8 4.5 -11.3 -4.1 A12 12 0 0 1 -9.7 -7.1 Q-5.9 3.0 0 0Z" fill="#fff"/><path d="M0 0 Q-6.6 0.3 -6.0 -10.4 A12 12 0 0 1 -2.8 -11.7 Q-6.4 -1.5 0 0Z" fill="#fff"/><path d="M0 0 Q-5.3 -4.0 2.1 -11.8 A12 12 0 0 1 5.3 -10.7 Q-3.9 -5.3 0 0Z" fill="#fff"/><path d="M0 0 Q-1.5 -6.4 9.2 -7.7 A12 12 0 0 1 11.0 -4.8 Q0.4 -6.6 0 0Z" fill="#fff"/><circle r="11" fill="none" stroke="#c01c30" stroke-width="2" opacity="0.55"/><circle r="11.8" fill="none" stroke="#f4d0d0" stroke-width="0.8" opacity="0.7"/></g><line x1="362" y1="583" x2="373.5" y2="616" stroke="#000" opacity="0.12" stroke-width="3" filter="url(#sh2)"/><line x1="360" y1="581" x2="371.5" y2="614" stroke="#e8e8ec" stroke-width="2"/><line x1="360" y1="581" x2="371.5" y2="614" stroke="#a8a8b0" stroke-width="1.6" stroke-dasharray="1 1.5"/><g transform="translate(354.5,566.2)"><circle r="16.1" fill="#000" opacity="0.12" transform="translate(1.5,2)" filter="url(#sh2)"/><circle r="14.5" fill="#d9283e"/><path d="M0 0 Q3.6 -7.1 14.5 0.0 A14.5 14.5 0 0 1 13.9 4.1 Q5.5 -5.8 0 0Z" fill="#fff"/><path d="M0 0 Q7.3 -3.1 11.1 9.3 A14.5 14.5 0 0 1 8.0 12.1 Q7.9 -0.9 0 0Z" fill="#fff"/><path d="M0 0 Q7.6 2.3 2.5 14.3 A14.5 14.5 0 0 1 -1.6 14.4 Q6.7 4.4 0 0Z" fill="#fff"/><path d="M0 0 Q4.3 6.7 -7.2 12.6 A14.5 14.5 0 0 1 -10.5 10.0 Q2.3 7.6 0 0Z" fill="#fff"/><path d="M0 0 Q-1.0 7.9 -13.6 5.0 A14.5 14.5 0 0 1 -14.5 0.9 Q-3.2 7.3 0 0Z" fill="#fff"/><path d="M0 0 Q-5.8 5.4 -13.6 -5.0 A14.5 14.5 0 0 1 -11.7 -8.6 Q-7.1 3.6 0 0Z" fill="#fff"/><path d="M0 0 Q-8.0 0.4 -7.3 -12.6 A14.5 14.5 0 0 1 -3.4 -14.1 Q-7.8 -1.8 0 0Z" fill="#fff"/><path d="M0 0 Q-6.4 -4.8 2.5 -14.3 A14.5 14.5 0 0 1 6.4 -13.0 Q-4.8 -6.4 0 0Z" fill="#fff"/><path d="M0 0 Q-1.8 -7.8 11.1 -9.3 A14.5 14.5 0 0 1 13.3 -5.8 Q0.5 -8.0 0 0Z" fill="#fff"/><circle r="13.5" fill="none" stroke="#c01c30" stroke-width="2" opacity="0.55"/><circle r="14.3" fill="none" stroke="#f4d0d0" stroke-width="0.8" opacity="0.7"/></g><line x1="442" y1="586" x2="424" y2="610" stroke="#000" opacity="0.12" stroke-width="3" filter="url(#sh2)"/><line x1="440" y1="584" x2="422" y2="608" stroke="#e8e8ec" stroke-width="2"/><line x1="440" y1="584" x2="422" y2="608" stroke="#a8a8b0" stroke-width="1.6" stroke-dasharray="1 1.5"/><g transform="translate(450,571.5)"><circle r="14.6" fill="#000" opacity="0.12" transform="translate(1.5,2)" filter="url(#sh2)"/><circle r="13" fill="#d9283e"/><path d="M0 0 Q3.2 -6.4 13.0 0.0 A13 13 0 0 1 12.5 3.7 Q4.9 -5.2 0 0Z" fill="#fff"/><path d="M0 0 Q6.6 -2.8 10.0 8.4 A13 13 0 0 1 7.2 10.8 Q7.1 -0.8 0 0Z" fill="#fff"/><path d="M0 0 Q6.8 2.1 2.3 12.8 A13 13 0 0 1 -1.4 12.9 Q6.0 3.9 0 0Z" fill="#fff"/><path d="M0 0 Q3.9 6.0 -6.5 11.3 A13 13 0 0 1 -9.4 9.0 Q2.0 6.9 0 0Z" fill="#fff"/><path d="M0 0 Q-0.9 7.1 -12.2 4.4 A13 13 0 0 1 -13.0 0.8 Q-2.8 6.6 0 0Z" fill="#fff"/><path d="M0 0 Q-5.2 4.9 -12.2 -4.4 A13 13 0 0 1 -10.5 -7.7 Q-6.4 3.2 0 0Z" fill="#fff"/><path d="M0 0 Q-7.1 0.4 -6.5 -11.3 A13 13 0 0 1 -3.1 -12.6 Q-7.0 -1.7 0 0Z" fill="#fff"/><path d="M0 0 Q-5.7 -4.3 2.3 -12.8 A13 13 0 0 1 5.8 -11.6 Q-4.3 -5.7 0 0Z" fill="#fff"/><path d="M0 0 Q-1.6 -7.0 10.0 -8.4 A13 13 0 0 1 11.9 -5.2 Q0.4 -7.1 0 0Z" fill="#fff"/><circle r="12" fill="none" stroke="#c01c30" stroke-width="2" opacity="0.55"/><circle r="12.8" fill="none" stroke="#f4d0d0" stroke-width="0.8" opacity="0.7"/></g><line x1="422" y1="585" x2="410" y2="616" stroke="#000" opacity="0.12" stroke-width="3" filter="url(#sh2)"/><line x1="420" y1="583" x2="408" y2="614" stroke="#e8e8ec" stroke-width="2"/><line x1="420" y1="583" x2="408" y2="614" stroke="#a8a8b0" stroke-width="1.6" stroke-dasharray="1 1.5"/><g transform="translate(426,567)"><circle r="17.1" fill="#000" opacity="0.12" transform="translate(1.5,2)" filter="url(#sh2)"/><circle r="15.5" fill="#d9283e"/><path d="M0 0 Q3.9 -7.6 15.5 0.0 A15.5 15.5 0 0 1 14.9 4.4 Q5.9 -6.2 0 0Z" fill="#fff"/><path d="M0 0 Q7.8 -3.3 11.9 10.0 A15.5 15.5 0 0 1 8.6 12.9 Q8.5 -1.0 0 0Z" fill="#fff"/><path d="M0 0 Q8.2 2.5 2.7 15.3 A15.5 15.5 0 0 1 -1.7 15.4 Q7.1 4.7 0 0Z" fill="#fff"/><path d="M0 0 Q4.6 7.1 -7.7 13.4 A15.5 15.5 0 0 1 -11.2 10.7 Q2.4 8.2 0 0Z" fill="#fff"/><path d="M0 0 Q-1.0 8.5 -14.6 5.3 A15.5 15.5 0 0 1 -15.5 1.0 Q-3.4 7.8 0 0Z" fill="#fff"/><path d="M0 0 Q-6.2 5.8 -14.6 -5.3 A15.5 15.5 0 0 1 -12.5 -9.2 Q-7.6 3.8 0 0Z" fill="#fff"/><path d="M0 0 Q-8.5 0.4 -7.8 -13.4 A15.5 15.5 0 0 1 -3.6 -15.1 Q-8.3 -2.0 0 0Z" fill="#fff"/><path d="M0 0 Q-6.8 -5.1 2.7 -15.3 A15.5 15.5 0 0 1 6.9 -13.9 Q-5.1 -6.8 0 0Z" fill="#fff"/><path d="M0 0 Q-1.9 -8.3 11.9 -10.0 A15.5 15.5 0 0 1 14.2 -6.2 Q0.5 -8.5 0 0Z" fill="#fff"/><circle r="14.5" fill="none" stroke="#c01c30" stroke-width="2" opacity="0.55"/><circle r="15.3" fill="none" stroke="#f4d0d0" stroke-width="0.8" opacity="0.7"/></g><g transform="translate(571.6,517.2)"><circle r="25.3" fill="#000" opacity="0.12" transform="translate(1.5,2)" filter="url(#sh2)"/><circle r="23.7" fill="#d9283e"/><path d="M0 0 Q5.9 -11.6 23.7 0.0 A23.7 23.7 0 0 1 22.9 6.0 Q8.7 -9.7 0 0Z" fill="#fff"/><path d="M0 0 Q11.6 -5.9 19.2 13.9 A23.7 23.7 0 0 1 15.0 18.4 Q12.7 -2.8 0 0Z" fill="#fff"/><path d="M0 0 Q12.9 2.0 7.3 22.5 A23.7 23.7 0 0 1 1.3 23.7 Q11.9 5.2 0 0Z" fill="#fff"/><path d="M0 0 Q9.2 9.2 -7.3 22.5 A23.7 23.7 0 0 1 -12.8 19.9 Q6.6 11.3 0 0Z" fill="#fff"/><path d="M0 0 Q2.0 12.9 -19.2 13.9 A23.7 23.7 0 0 1 -22.1 8.6 Q-1.3 13.0 0 0Z" fill="#fff"/><path d="M0 0 Q-5.9 11.6 -23.7 0.0 A23.7 23.7 0 0 1 -22.9 -6.0 Q-8.7 9.7 0 0Z" fill="#fff"/><path d="M0 0 Q-11.6 5.9 -19.2 -13.9 A23.7 23.7 0 0 1 -15.0 -18.4 Q-12.7 2.8 0 0Z" fill="#fff"/><path d="M0 0 Q-12.9 -2.0 -7.3 -22.5 A23.7 23.7 0 0 1 -1.3 -23.7 Q-11.9 -5.2 0 0Z" fill="#fff"/><path d="M0 0 Q-9.2 -9.2 7.3 -22.5 A23.7 23.7 0 0 1 12.8 -19.9 Q-6.6 -11.3 0 0Z" fill="#fff"/><path d="M0 0 Q-2.0 -12.9 19.2 -13.9 A23.7 23.7 0 0 1 22.1 -8.6 Q1.3 -13.0 0 0Z" fill="#fff"/><circle r="22.7" fill="none" stroke="#c01c30" stroke-width="2" opacity="0.55"/><circle r="23.5" fill="none" stroke="#f4d0d0" stroke-width="0.8" opacity="0.7"/></g><g transform="translate(751.3,517.2)"><g transform="translate(2,2.5)" opacity="0.3" filter="url(#sh2)"><circle cx="0.0" cy="15.0" r="11" fill="#000"/><circle cx="-13.0" cy="7.5" r="11" fill="#000"/><circle cx="-13.0" cy="-7.5" r="11" fill="#000"/><circle cx="-0.0" cy="-15.0" r="11" fill="#000"/><circle cx="13.0" cy="-7.5" r="11" fill="#000"/><circle cx="13.0" cy="7.5" r="11" fill="#000"/></g><circle cx="0.0" cy="15.5" r="12" fill="#fff"/><circle cx="-13.4" cy="7.8" r="12" fill="#fff"/><circle cx="-13.4" cy="-7.7" r="12" fill="#fff"/><circle cx="-0.0" cy="-15.5" r="12" fill="#fff"/><circle cx="13.4" cy="-7.8" r="12" fill="#fff"/><circle cx="13.4" cy="7.8" r="12" fill="#fff"/><circle r="17" fill="#fff"/><circle cx="0.0" cy="14.5" r="10.3" fill="#f2bccd"/><circle cx="-12.6" cy="7.3" r="10.3" fill="#f2bccd"/><circle cx="-12.6" cy="-7.2" r="10.3" fill="#f2bccd"/><circle cx="-0.0" cy="-14.5" r="10.3" fill="#f2bccd"/><circle cx="12.6" cy="-7.3" r="10.3" fill="#f2bccd"/><circle cx="12.6" cy="7.2" r="10.3" fill="#f2bccd"/><circle r="15" fill="#f2bccd"/><circle r="19.5" fill="none" stroke="#e89ab2" stroke-width="3" opacity="0.5"/><circle r="17.7" fill="#5b2219"/><circle r="15.5" fill="#6e3326"/><path d="M-8 -3 C-8 -12 8 -12 8 -3Z" fill="#8f4a3a"/><text x="0" y="0.5" text-anchor="middle" font-family="Liberation Sans" font-weight="bold" font-size="7" fill="#f6e4e4" transform="scale(0.8,1)">SWEET</text><text x="0" y="8" text-anchor="middle" font-family="Liberation Sans" font-weight="bold" font-size="7" fill="#f6e4e4" transform="scale(0.72,1)">DESSERT</text></g><line x1="700.8" y1="585" x2="717.3" y2="610" stroke="#000" opacity="0.12" stroke-width="3" filter="url(#sh2)"/><line x1="698.8" y1="583" x2="715.3" y2="608" stroke="#e8e8ec" stroke-width="2"/><line x1="698.8" y1="583" x2="715.3" y2="608" stroke="#a8a8b0" stroke-width="1.6" stroke-dasharray="1 1.5"/><g transform="translate(690.1,571)"><circle r="13.6" fill="#000" opacity="0.12" transform="translate(1.5,2)" filter="url(#sh2)"/><circle r="12" fill="#d9283e"/><path d="M0 0 Q3.0 -5.9 12.0 0.0 A12 12 0 0 1 11.5 3.4 Q4.5 -4.8 0 0Z" fill="#fff"/><path d="M0 0 Q6.1 -2.6 9.2 7.7 A12 12 0 0 1 6.6 10.0 Q6.6 -0.8 0 0Z" fill="#fff"/><path d="M0 0 Q6.3 1.9 2.1 11.8 A12 12 0 0 1 -1.3 11.9 Q5.5 3.6 0 0Z" fill="#fff"/><path d="M0 0 Q3.6 5.5 -6.0 10.4 A12 12 0 0 1 -8.7 8.3 Q1.9 6.3 0 0Z" fill="#fff"/><path d="M0 0 Q-0.8 6.6 -11.3 4.1 A12 12 0 0 1 -12.0 0.8 Q-2.6 6.1 0 0Z" fill="#fff"/><path d="M0 0 Q-4.8 4.5 -11.3 -4.1 A12 12 0 0 1 -9.7 -7.1 Q-5.9 3.0 0 0Z" fill="#fff"/><path d="M0 0 Q-6.6 0.3 -6.0 -10.4 A12 12 0 0 1 -2.8 -11.7 Q-6.4 -1.5 0 0Z" fill="#fff"/><path d="M0 0 Q-5.3 -4.0 2.1 -11.8 A12 12 0 0 1 5.3 -10.7 Q-3.9 -5.3 0 0Z" fill="#fff"/><path d="M0 0 Q-1.5 -6.4 9.2 -7.7 A12 12 0 0 1 11.0 -4.8 Q0.4 -6.6 0 0Z" fill="#fff"/><circle r="11" fill="none" stroke="#c01c30" stroke-width="2" opacity="0.55"/><circle r="11.8" fill="none" stroke="#f4d0d0" stroke-width="0.8" opacity="0.7"/></g><line x1="719.3" y1="583" x2="730.8" y2="616" stroke="#000" opacity="0.12" stroke-width="3" filter="url(#sh2)"/><line x1="717.3" y1="581" x2="728.8" y2="614" stroke="#e8e8ec" stroke-width="2"/><line x1="717.3" y1="581" x2="728.8" y2="614" stroke="#a8a8b0" stroke-width="1.6" stroke-dasharray="1 1.5"/><g transform="translate(711.8,566.2)"><circle r="16.1" fill="#000" opacity="0.12" transform="translate(1.5,2)" filter="url(#sh2)"/><circle r="14.5" fill="#d9283e"/><path d="M0 0 Q3.6 -7.1 14.5 0.0 A14.5 14.5 0 0 1 13.9 4.1 Q5.5 -5.8 0 0Z" fill="#fff"/><path d="M0 0 Q7.3 -3.1 11.1 9.3 A14.5 14.5 0 0 1 8.0 12.1 Q7.9 -0.9 0 0Z" fill="#fff"/><path d="M0 0 Q7.6 2.3 2.5 14.3 A14.5 14.5 0 0 1 -1.6 14.4 Q6.7 4.4 0 0Z" fill="#fff"/><path d="M0 0 Q4.3 6.7 -7.2 12.6 A14.5 14.5 0 0 1 -10.5 10.0 Q2.3 7.6 0 0Z" fill="#fff"/><path d="M0 0 Q-1.0 7.9 -13.6 5.0 A14.5 14.5 0 0 1 -14.5 0.9 Q-3.2 7.3 0 0Z" fill="#fff"/><path d="M0 0 Q-5.8 5.4 -13.6 -5.0 A14.5 14.5 0 0 1 -11.7 -8.6 Q-7.1 3.6 0 0Z" fill="#fff"/><path d="M0 0 Q-8.0 0.4 -7.3 -12.6 A14.5 14.5 0 0 1 -3.4 -14.1 Q-7.8 -1.8 0 0Z" fill="#fff"/><path d="M0 0 Q-6.4 -4.8 2.5 -14.3 A14.5 14.5 0 0 1 6.4 -13.0 Q-4.8 -6.4 0 0Z" fill="#fff"/><path d="M0 0 Q-1.8 -7.8 11.1 -9.3 A14.5 14.5 0 0 1 13.3 -5.8 Q0.5 -8.0 0 0Z" fill="#fff"/><circle r="13.5" fill="none" stroke="#c01c30" stroke-width="2" opacity="0.55"/><circle r="14.3" fill="none" stroke="#f4d0d0" stroke-width="0.8" opacity="0.7"/></g><line x1="799.3" y1="586" x2="781.3" y2="610" stroke="#000" opacity="0.12" stroke-width="3" filter="url(#sh2)"/><line x1="797.3" y1="584" x2="779.3" y2="608" stroke="#e8e8ec" stroke-width="2"/><line x1="797.3" y1="584" x2="779.3" y2="608" stroke="#a8a8b0" stroke-width="1.6" stroke-dasharray="1 1.5"/><g transform="translate(807.3,571.5)"><circle r="14.6" fill="#000" opacity="0.12" transform="translate(1.5,2)" filter="url(#sh2)"/><circle r="13" fill="#d9283e"/><path d="M0 0 Q3.2 -6.4 13.0 0.0 A13 13 0 0 1 12.5 3.7 Q4.9 -5.2 0 0Z" fill="#fff"/><path d="M0 0 Q6.6 -2.8 10.0 8.4 A13 13 0 0 1 7.2 10.8 Q7.1 -0.8 0 0Z" fill="#fff"/><path d="M0 0 Q6.8 2.1 2.3 12.8 A13 13 0 0 1 -1.4 12.9 Q6.0 3.9 0 0Z" fill="#fff"/><path d="M0 0 Q3.9 6.0 -6.5 11.3 A13 13 0 0 1 -9.4 9.0 Q2.0 6.9 0 0Z" fill="#fff"/><path d="M0 0 Q-0.9 7.1 -12.2 4.4 A13 13 0 0 1 -13.0 0.8 Q-2.8 6.6 0 0Z" fill="#fff"/><path d="M0 0 Q-5.2 4.9 -12.2 -4.4 A13 13 0 0 1 -10.5 -7.7 Q-6.4 3.2 0 0Z" fill="#fff"/><path d="M0 0 Q-7.1 0.4 -6.5 -11.3 A13 13 0 0 1 -3.1 -12.6 Q-7.0 -1.7 0 0Z" fill="#fff"/><path d="M0 0 Q-5.7 -4.3 2.3 -12.8 A13 13 0 0 1 5.8 -11.6 Q-4.3 -5.7 0 0Z" fill="#fff"/><path d="M0 0 Q-1.6 -7.0 10.0 -8.4 A13 13 0 0 1 11.9 -5.2 Q0.4 -7.1 0 0Z" fill="#fff"/><circle r="12" fill="none" stroke="#c01c30" stroke-width="2" opacity="0.55"/><circle r="12.8" fill="none" stroke="#f4d0d0" stroke-width="0.8" opacity="0.7"/></g><line x1="779.3" y1="585" x2="767.3" y2="616" stroke="#000" opacity="0.12" stroke-width="3" filter="url(#sh2)"/><line x1="777.3" y1="583" x2="765.3" y2="614" stroke="#e8e8ec" stroke-width="2"/><line x1="777.3" y1="583" x2="765.3" y2="614" stroke="#a8a8b0" stroke-width="1.6" stroke-dasharray="1 1.5"/><g transform="translate(783.3,567)"><circle r="17.1" fill="#000" opacity="0.12" transform="translate(1.5,2)" filter="url(#sh2)"/><circle r="15.5" fill="#d9283e"/><path d="M0 0 Q3.9 -7.6 15.5 0.0 A15.5 15.5 0 0 1 14.9 4.4 Q5.9 -6.2 0 0Z" fill="#fff"/><path d="M0 0 Q7.8 -3.3 11.9 10.0 A15.5 15.5 0 0 1 8.6 12.9 Q8.5 -1.0 0 0Z" fill="#fff"/><path d="M0 0 Q8.2 2.5 2.7 15.3 A15.5 15.5 0 0 1 -1.7 15.4 Q7.1 4.7 0 0Z" fill="#fff"/><path d="M0 0 Q4.6 7.1 -7.7 13.4 A15.5 15.5 0 0 1 -11.2 10.7 Q2.4 8.2 0 0Z" fill="#fff"/><path d="M0 0 Q-1.0 8.5 -14.6 5.3 A15.5 15.5 0 0 1 -15.5 1.0 Q-3.4 7.8 0 0Z" fill="#fff"/><path d="M0 0 Q-6.2 5.8 -14.6 -5.3 A15.5 15.5 0 0 1 -12.5 -9.2 Q-7.6 3.8 0 0Z" fill="#fff"/><path d="M0 0 Q-8.5 0.4 -7.8 -13.4 A15.5 15.5 0 0 1 -3.6 -15.1 Q-8.3 -2.0 0 0Z" fill="#fff"/><path d="M0 0 Q-6.8 -5.1 2.7 -15.3 A15.5 15.5 0 0 1 6.9 -13.9 Q-5.1 -6.8 0 0Z" fill="#fff"/><path d="M0 0 Q-1.9 -8.3 11.9 -10.0 A15.5 15.5 0 0 1 14.2 -6.2 Q0.5 -8.5 0 0Z" fill="#fff"/><circle r="14.5" fill="none" stroke="#c01c30" stroke-width="2" opacity="0.55"/><circle r="15.3" fill="none" stroke="#f4d0d0" stroke-width="0.8" opacity="0.7"/></g></svg><div class="a" style="left:924px;top:98px;width:16px;height:780px;background:#4a4a4a"></div><svg class="a" style="left:928px;top:105px;" width="9" height="6" viewBox="0 0 9 6"><path d="M1 5l3.5-3.5 3.5 3.5" stroke="#b0b0b0" stroke-width="1.4" fill="none"/></svg><svg class="a" style="left:928px;top:866px;" width="9" height="6" viewBox="0 0 9 6"><path d="M1 1l3.5 3.5 3.5-3.5" stroke="#b0b0b0" stroke-width="1.4" fill="none"/></svg><div class="a" style="left:926px;top:474px;width:12px;height:24px;background:#6a6a6a;border-radius:6px"></div><div class="a" style="left:940px;top:68px;width:3px;height:826px;background:#3a3a3a"></div><div class="a" style="left:78px;top:878px;width:862px;height:16px;background:#535353"></div><div class="a" style="left:78px;top:878px;width:4px;height:16px;background:#4e4e4e"></div><div class="a" style="left:82px;top:879px;width:51px;height:15px;background:#454545;border-radius:2px 0 0 0"></div><div class="t" style="left:85px;top:882.47px;font-size:10.1px;color:#e6e6e6;transform:scaleX(0.989);">70%</div><div class="a" style="left:133px;top:879px;width:17px;height:15px;background:#4a4a4a"></div><svg class="a" style="left:137px;top:885px;" width="9" height="6" viewBox="0 0 9 6"><path d="M1 1l3.5 3.5 3.5-3.5" stroke="#e0e0e0" stroke-width="1.4" fill="none"/></svg><svg class="a" style="left:158px;top:881px;" width="20" height="10" viewBox="0 0 20 10"><path d="M1.5 1v8" stroke="#777" stroke-width="1.3"/><path d="M8 1 L3 5 L8 9Z M15 1 L10 5 L15 9Z" fill="#777"/></svg><div class="a" style="left:192px;top:879px;width:41px;height:15px;background:#454545"></div><div class="t" style="left:197px;top:882.47px;font-size:10.1px;color:#e6e6e6;transform:scaleX(0.900);">1</div><div class="a" style="left:233px;top:879px;width:17px;height:15px;background:#4a4a4a"></div><svg class="a" style="left:236px;top:885px;" width="9" height="6" viewBox="0 0 9 6"><path d="M1 1l3.5 3.5 3.5-3.5" stroke="#e0e0e0" stroke-width="1.4" fill="none"/></svg><svg class="a" style="left:258px;top:881px;" width="26" height="10" viewBox="0 0 26 10"><path d="M2 1 L7 5 L2 9Z M12 1 L17 5 L12 9Z" fill="#777"/><path d="M19 1v8" stroke="#777" stroke-width="1.3"/></svg><div class="a" style="left:292px;top:879px;width:200px;height:15px;background:#4e4e4e"></div><div class="t" style="left:372px;top:882.47px;font-size:10.1px;color:#d8d8d8;transform:scaleX(0.970);">Selection</div><svg class="a" style="left:498px;top:881px;" width="7" height="10" viewBox="0 0 7 10"><path d="M1 1 L6 5 L1 9Z" fill="#d0d0d0"/></svg><svg class="a" style="left:515px;top:881px;" width="7" height="10" viewBox="0 0 7 10"><path d="M6 1 L2 5 L6 9" stroke="#d0d0d0" stroke-width="1.3" fill="none"/></svg><div class="a" style="left:510px;top:879px;width:414px;height:15px;background:#4a4a4a"></div><svg class="a" style="left:515px;top:881px;" width="7" height="10" viewBox="0 0 7 10"><path d="M6 1 L2 5 L6 9" stroke="#d0d0d0" stroke-width="1.3" fill="none"/></svg><div class="a" style="left:705px;top:879px;width:24px;height:15px;background:#5e5e5e;border-radius:8px"></div><svg class="a" style="left:911px;top:881px;" width="7" height="10" viewBox="0 0 7 10"><path d="M1 1 L5 5 L1 9" stroke="#d0d0d0" stroke-width="1.3" fill="none"/></svg><div class="a" style="left:924px;top:877px;width:16px;height:16px;background:#535353"></div><div class="a" style="left:4px;top:893px;width:939px;height:1px;background:#393939"></div><div class="a" style="left:943px;top:68px;width:653px;height:12px;background:#424242;border-bottom:1px solid #383838"></div><svg class="a" style="left:1202px;top:71px;" width="9" height="6" viewBox="0 0 9 6"><path d="M0.5 0.5 L4 3 L0.5 5.5Z M5 0.5 L8.5 3 L5 5.5Z" fill="#cfcfcf"/></svg><svg class="a" style="left:1580px;top:71px;" width="9" height="6" viewBox="0 0 9 6"><path d="M0.5 0.5 L4 3 L0.5 5.5Z M5 0.5 L8.5 3 L5 5.5Z" fill="#cfcfcf"/></svg><div class="a" style="left:1216px;top:80px;width:2px;height:814px;background:#3a3a3a"></div><div class="a" style="left:1595px;top:68px;width:2px;height:826px;background:#3a3a3a"></div><div class="a" style="left:943px;top:80px;width:273px;height:814px;background:#535353"></div><div class="a" style="left:943px;top:80px;width:273px;height:27px;background:#424242"></div><div class="a" style="left:943px;top:80px;width:64px;height:27px;background:#535353"></div><div class="t" style="left:952px;top:89.19px;font-size:10.9px;color:#f0f0f0;font-weight:bold;transform:scaleX(0.891);">Artboards</div><svg class="a" style="left:1199px;top:90px;" width="12" height="8" viewBox="0 0 12 8"><path d="M0 0.5H11M0 2.5H11M0 4.5H11M0 6.5H11" stroke="#cfcfcf" stroke-width="1"/></svg><div class="a" style="left:949px;top:114px;width:262px;height:216px;border:1px solid #5f5f5f;border-radius:2px;background:#535353"></div><div class="a" style="left:949px;top:115px;width:261px;height:18px;background:#4e6582"></div><div class="a" style="left:979px;top:115px;width:1px;height:18px;background:#5b7390"></div><div class="a" style="left:1169px;top:115px;width:1px;height:18px;background:#5b7390"></div><div class="t" style="left:955px;top:118.02px;font-size:13px;color:#f0f0f0;transform:scaleX(0.830);">1</div><div class="t" style="left:985px;top:118.84px;font-size:10.6px;color:#e8e8e8;transform:scaleX(0.932);">EVF12062.front.Artwork 1</div><svg class="a" style="left:1176px;top:116px;" width="15" height="13" viewBox="0 0 15 13"><path d="M0.5 1.5H2M1.2 0.5V2.5" stroke="#ddd" stroke-width="1"/><path d="M4.5 2.5H10.5L13.5 5.5V11.5H4.5Z" fill="none" stroke="#ddd" stroke-width="1.2"/></svg><div class="t" style="left:948.5px;top:335.16px;font-size:12px;color:#d8d8d8;transform:scaleX(0.840);">1 Artboard</div><svg class="a" style="left:1098px;top:334px;" width="12" height="12" viewBox="0 0 12 12"><path d="M6 0 L11.5 5.5 H8 V11.5 H4 V5.5 H0.5Z" fill="#6a6a6a"/></svg><svg class="a" style="left:1124px;top:334px;" width="12" height="12" viewBox="0 0 12 12"><path d="M6 11.5 L11.5 6 H8 V0 H4 V6 H0.5Z" fill="#6a6a6a"/></svg><svg class="a" style="left:1151px;top:334px;" width="12" height="12" viewBox="0 0 12 12"><path d="M3 0.5 H11.5 V11.5 H6 V6 H0.5 Z" fill="#cfcfcf"/><path d="M0.5 7 H5 V11.5Z" fill="#cfcfcf"/></svg><svg class="a" style="left:1176px;top:333px;" width="12" height="13" viewBox="0 0 12 13"><path d="M0.5 2.5H11.5M4 2.5V0.5H8V2.5M1.5 3.5H10.5L9.5 12.5H2.5Z M4.5 5V11M6 5V11M7.5 5V11" fill="none" stroke="#6a6a6a" stroke-width="1.1"/></svg><div class="a" style="left:943px;top:350px;width:273px;height:4px;background:#3a3a3a"></div><div class="a" style="left:943px;top:354px;width:273px;height:26px;background:#424242"></div><div class="a" style="left:943px;top:354px;width:46px;height:26px;background:#535353"></div><div class="t" style="left:952px;top:360.99px;font-size:10.9px;color:#f0f0f0;font-weight:bold;transform:scaleX(0.797);">Layers</div><svg class="a" style="left:1199px;top:364px;" width="12" height="8" viewBox="0 0 12 8"><path d="M0 0.5H11M0 2.5H11M0 4.5H11M0 6.5H11" stroke="#cfcfcf" stroke-width="1"/></svg><div class="a" style="left:949px;top:387px;width:262px;height:215px;border:1px solid #5f5f5f;border-radius:2px;background:#535353"></div><div class="a" style="left:950px;top:407px;width:260px;height:1px;background:#4b4b4b"></div><div class="a" style="left:969px;top:387px;width:1px;height:21px;background:#4b4b4b"></div><div class="a" style="left:990px;top:387px;width:1px;height:21px;background:#4b4b4b"></div><div class="a" style="left:1174px;top:387px;width:1px;height:21px;background:#4b4b4b"></div><div class="a" style="left:992px;top:390px;width:3px;height:15px;background:#e84545"></div><svg class="a" style="left:951px;top:392px;" width="14" height="10" viewBox="0 0 14 10"><path d="M1 5 C4 0 10 0 13 5 C10 10 4 10 1 5Z" fill="#cfcfcf"/><circle cx="7" cy="5" r="2" fill="#535353"/></svg><svg class="a" style="left:975px;top:391px;" width="10" height="12" viewBox="0 0 10 12"><path d="M2.5 5.5V3.5A2.5 2.5 0 0 1 7.5 3.5V5.5" fill="none" stroke="#cfcfcf" stroke-width="1.3"/><rect x="1" y="5.5" width="8" height="6" fill="#cfcfcf"/></svg><svg class="a" style="left:1003px;top:394px;" width="9" height="6" viewBox="0 0 9 6"><path d="M1 1l3.5 3.5 3.5-3.5" stroke="#e0e0e0" stroke-width="1.4" fill="none"/></svg><div class="a" style="left:1021px;top:389px;width:17px;height:17px;background:#fff;border:1px solid #111"></div><svg class="a" style="left:1023px;top:393px;" width="13" height="9" viewBox="0 0 13 9"><rect x="0.5" y="0.5" width="12" height="8" fill="#c7e4c5"/><path d="M1 4H12M3 1V8M6 1V8M9 1V8" stroke="#e84a2a" stroke-width="0.7"/></svg><div class="t" style="left:1044px;top:391.85px;font-size:11.3px;color:#e6e6e6;transform:scaleX(0.837);">EVDrawing</div><svg class="a" style="left:1180px;top:393px;" width="10" height="10" viewBox="0 0 10 10"><circle cx="5" cy="5" r="4.2" fill="none" stroke="#d8d8d8" stroke-width="1.1"/></svg><div class="a" style="left:950px;top:428px;width:260px;height:1px;background:#4b4b4b"></div><div class="a" style="left:969px;top:408px;width:1px;height:21px;background:#4b4b4b"></div><div class="a" style="left:990px;top:408px;width:1px;height:21px;background:#4b4b4b"></div><div class="a" style="left:1174px;top:408px;width:1px;height:21px;background:#4b4b4b"></div><div class="a" style="left:992px;top:411px;width:3px;height:15px;background:#45e845"></div><svg class="a" style="left:975px;top:412px;" width="10" height="12" viewBox="0 0 10 12"><path d="M2.5 5.5V3.5A2.5 2.5 0 0 1 7.5 3.5V5.5" fill="none" stroke="#6a6a6a" stroke-width="1.3"/><rect x="1" y="5.5" width="8" height="6" fill="#6a6a6a"/></svg><svg class="a" style="left:1026px;top:415px;" width="9" height="6" viewBox="0 0 9 6"><path d="M1 1l3.5 3.5 3.5-3.5" stroke="#e0e0e0" stroke-width="1.4" fill="none"/></svg><div class="a" style="left:1044px;top:410px;width:17px;height:17px;background:#fff;border:1px solid #111"></div><svg class="a" style="left:1046px;top:413px;" width="13" height="9" viewBox="0 0 13 9"><path d="M1 1H12 M1 5H12" stroke="#a050a0" stroke-width="0.6"/><circle cx="4" cy="5" r="0.9" fill="#800080"/><circle cx="9" cy="4" r="0.9" fill="#800080"/></svg><div class="t" style="left:1067px;top:412.85px;font-size:11.3px;color:#e6e6e6;transform:scaleX(0.893);">[Dimension Li...</div><svg class="a" style="left:1180px;top:414px;" width="10" height="10" viewBox="0 0 10 10"><circle cx="5" cy="5" r="4.2" fill="none" stroke="#d8d8d8" stroke-width="1.1"/></svg><div class="a" style="left:950px;top:449px;width:260px;height:1px;background:#4b4b4b"></div><div class="a" style="left:969px;top:429px;width:1px;height:21px;background:#4b4b4b"></div><div class="a" style="left:990px;top:429px;width:1px;height:21px;background:#4b4b4b"></div><div class="a" style="left:1174px;top:429px;width:1px;height:21px;background:#4b4b4b"></div><div class="a" style="left:992px;top:432px;width:3px;height:15px;background:#e045e0"></div><svg class="a" style="left:951px;top:434px;" width="14" height="10" viewBox="0 0 14 10"><path d="M1 5 C4 0 10 0 13 5 C10 10 4 10 1 5Z" fill="#6e6e6e"/><circle cx="7" cy="5" r="2" fill="#535353"/></svg><svg class="a" style="left:975px;top:433px;" width="10" height="12" viewBox="0 0 10 12"><path d="M2.5 5.5V3.5A2.5 2.5 0 0 1 7.5 3.5V5.5" fill="none" stroke="#6a6a6a" stroke-width="1.3"/><rect x="1" y="5.5" width="8" height="6" fill="#6a6a6a"/></svg><svg class="a" style="left:1049px;top:435px;" width="6" height="9" viewBox="0 0 6 9"><path d="M1 1l3.5 3.5-3.5 3.5" stroke="#e0e0e0" stroke-width="1.4" fill="none"/></svg><div class="a" style="left:1067px;top:431px;width:17px;height:17px;background:#fff;border:1px solid #111"></div><svg class="a" style="left:1069px;top:434px;" width="13" height="9" viewBox="0 0 13 9"><path d="M1 1H12 M1 5H12" stroke="#a050a0" stroke-width="0.6"/><circle cx="4" cy="5" r="0.9" fill="#800080"/><circle cx="9" cy="4" r="0.9" fill="#800080"/></svg><div class="t" style="left:1090.4px;top:433.85px;font-size:11.3px;color:#e6e6e6;transform:scaleX(0.835);">1 EVF120...</div><svg class="a" style="left:1180px;top:435px;" width="10" height="10" viewBox="0 0 10 10"><circle cx="5" cy="5" r="4.2" fill="none" stroke="#d8d8d8" stroke-width="1.1"/></svg><div class="a" style="left:950px;top:470px;width:260px;height:1px;background:#4b4b4b"></div><div class="a" style="left:969px;top:450px;width:1px;height:21px;background:#4b4b4b"></div><div class="a" style="left:990px;top:450px;width:1px;height:21px;background:#4b4b4b"></div><div class="a" style="left:1174px;top:450px;width:1px;height:21px;background:#4b4b4b"></div><div class="a" style="left:992px;top:453px;width:3px;height:15px;background:#4545e0"></div><svg class="a" style="left:951px;top:455px;" width="14" height="10" viewBox="0 0 14 10"><path d="M1 5 C4 0 10 0 13 5 C10 10 4 10 1 5Z" fill="#cfcfcf"/><circle cx="7" cy="5" r="2" fill="#535353"/></svg><svg class="a" style="left:975px;top:454px;" width="10" height="12" viewBox="0 0 10 12"><path d="M2.5 5.5V3.5A2.5 2.5 0 0 1 7.5 3.5V5.5" fill="none" stroke="#6a6a6a" stroke-width="1.3"/><rect x="1" y="5.5" width="8" height="6" fill="#6a6a6a"/></svg><svg class="a" style="left:1025px;top:456px;" width="6" height="9" viewBox="0 0 6 9"><path d="M1 1l3.5 3.5-3.5 3.5" stroke="#e0e0e0" stroke-width="1.4" fill="none"/></svg><div class="a" style="left:1044px;top:452px;width:17px;height:17px;background:#fff;border:1px solid #111"></div><svg class="a" style="left:1046px;top:456px;" width="13" height="9" viewBox="0 0 13 9"><rect x="0.5" y="0.5" width="12" height="8" fill="#c7e4c5"/><path d="M1 4H12M3 1V8M6 1V8M9 1V8" stroke="#e84a2a" stroke-width="0.7"/></svg><div class="t" style="left:1067px;top:454.85px;font-size:11.3px;color:#e6e6e6;transform:scaleX(0.844);">1 EVF12062.Ar...</div><svg class="a" style="left:1180px;top:456px;" width="10" height="10" viewBox="0 0 10 10"><circle cx="5" cy="5" r="4.2" fill="none" stroke="#d8d8d8" stroke-width="1.1"/></svg><div class="a" style="left:950px;top:491px;width:260px;height:1px;background:#4b4b4b"></div><div class="a" style="left:969px;top:471px;width:1px;height:21px;background:#4b4b4b"></div><div class="a" style="left:990px;top:471px;width:1px;height:21px;background:#4b4b4b"></div><div class="a" style="left:1174px;top:471px;width:1px;height:21px;background:#4b4b4b"></div><div class="a" style="left:992px;top:474px;width:3px;height:15px;background:#45e8e8"></div><svg class="a" style="left:952px;top:476px;" width="12" height="10" viewBox="0 0 12 10"><rect x="0.5" y="0.5" width="11" height="9" fill="none" stroke="#cfcfcf"/><rect x="2.5" y="2.5" width="7" height="5" fill="#cfcfcf"/></svg><svg class="a" style="left:975px;top:475px;" width="10" height="12" viewBox="0 0 10 12"><path d="M2.5 5.5V3.5A2.5 2.5 0 0 1 7.5 3.5V5.5" fill="none" stroke="#6a6a6a" stroke-width="1.3"/><rect x="1" y="5.5" width="8" height="6" fill="#6a6a6a"/></svg><div class="a" style="left:1044px;top:473px;width:17px;height:17px;background:#fff;border:1px solid #111"></div><div class="t" style="left:1067px;top:475.85px;font-size:11.3px;color:#e6e6e6;font-style:italic;transform:scaleX(0.840);">PanelSelection</div><svg class="a" style="left:1180px;top:477px;" width="10" height="10" viewBox="0 0 10 10"><circle cx="5" cy="5" r="4.2" fill="none" stroke="#d8d8d8" stroke-width="1.1"/></svg><div class="a" style="left:950px;top:492px;width:260px;height:21px;background:#4e6582"></div><svg class="a" style="left:1202px;top:494px;" width="7" height="7" viewBox="0 0 7 7"><path d="M0 0H7V7Z" fill="#e8e8e8"/></svg><div class="a" style="left:950px;top:512px;width:260px;height:1px;background:#4b4b4b"></div><div class="a" style="left:969px;top:492px;width:1px;height:21px;background:#4b4b4b"></div><div class="a" style="left:990px;top:492px;width:1px;height:21px;background:#4b4b4b"></div><div class="a" style="left:1174px;top:492px;width:1px;height:21px;background:#4b4b4b"></div><div class="a" style="left:992px;top:495px;width:3px;height:15px;background:#4a78e8"></div><svg class="a" style="left:951px;top:497px;" width="14" height="10" viewBox="0 0 14 10"><path d="M1 5 C4 0 10 0 13 5 C10 10 4 10 1 5Z" fill="#cfcfcf"/><circle cx="7" cy="5" r="2" fill="#535353"/></svg><svg class="a" style="left:1002px;top:498px;" width="6" height="9" viewBox="0 0 6 9"><path d="M1 1l3.5 3.5-3.5 3.5" stroke="#e0e0e0" stroke-width="1.4" fill="none"/></svg><div class="a" style="left:1021px;top:494px;width:17px;height:17px;background:#fff;border:1px solid #111"></div><svg class="a" style="left:1023px;top:497px;" width="13" height="11" viewBox="0 0 13 11"><rect x="0" y="0" width="13" height="11" fill="#c7e4c5"/><path d="M1 5.5H12M4 2V9M9 2V9" stroke="#e84a2a" stroke-width="0.8"/></svg><div class="t" style="left:1044px;top:496.85px;font-size:11.3px;color:#e6e6e6;transform:scaleX(0.844);">Layer 1</div><svg class="a" style="left:1180px;top:498px;" width="10" height="10" viewBox="0 0 10 10"><circle cx="5" cy="5" r="4.2" fill="none" stroke="#d8d8d8" stroke-width="1.1"/></svg><div class="t" style="left:948px;top:607.86px;font-size:12px;color:#d8d8d8;transform:scaleX(0.813);">2 Layers</div><svg class="a" style="left:1073px;top:605px;" width="13" height="13" viewBox="0 0 13 13"><circle cx="7.5" cy="5" r="4" fill="none" stroke="#6a6a6a" stroke-width="1.3"/><path d="M4.5 8L1 12" stroke="#6a6a6a" stroke-width="1.6"/></svg><svg class="a" style="left:1098px;top:605px;" width="13" height="13" viewBox="0 0 13 13"><rect x="0.5" y="0.5" width="8" height="8" fill="none" stroke="#cfcfcf" stroke-width="1.1"/><rect x="3.5" y="3.5" width="8" height="8" fill="#cfcfcf"/></svg><svg class="a" style="left:1121px;top:605px;" width="16" height="12" viewBox="0 0 16 12"><path d="M0 4H4V2L7 5L4 8V6H0Z" fill="#cfcfcf"/><path d="M8 1H15V11H11V7H8Z" fill="#cfcfcf"/></svg><svg class="a" style="left:1151px;top:606px;" width="12" height="12" viewBox="0 0 12 12"><path d="M3 0.5 H11.5 V11.5 H6 V6 H0.5 Z" fill="#cfcfcf"/><path d="M0.5 7 H5 V11.5Z" fill="#cfcfcf"/></svg><svg class="a" style="left:1176px;top:605px;" width="12" height="13" viewBox="0 0 12 13"><path d="M0.5 2.5H11.5M4 2.5V0.5H8V2.5M1.5 3.5H10.5L9.5 12.5H2.5Z M4.5 5V11M6 5V11M7.5 5V11" fill="none" stroke="#cfcfcf" stroke-width="1.1"/></svg><div class="a" style="left:943px;top:623px;width:273px;height:2px;background:#3a3a3a"></div><div class="a" style="left:943px;top:625px;width:273px;height:26px;background:#424242"></div><div class="a" style="left:943px;top:625px;width:61px;height:26px;background:#535353"></div><div class="t" style="left:952px;top:633.39px;font-size:10.9px;color:#f0f0f0;font-weight:bold;transform:scaleX(0.863);">Swatches</div><svg class="a" style="left:1199px;top:635px;" width="12" height="8" viewBox="0 0 12 8"><path d="M0 0.5H11M0 2.5H11M0 4.5H11M0 6.5H11" stroke="#cfcfcf" stroke-width="1"/></svg><div class="a" style="left:958px;top:668px;width:20px;height:20px;background:#fff;border:1px solid #2a2a2a"></div><div class="a" style="left:963px;top:673px;width:10px;height:10px;background:#535353;border:1px solid #2a2a2a"></div><svg class="a" style="left:958px;top:668px;" width="20" height="20" viewBox="0 0 20 20"><path d="M1 19L19 1" stroke="#e0141e" stroke-width="2"/></svg><div class="a" style="left:948px;top:658px;width:20px;height:20px;background:#fff;border:1px solid #2a2a2a"></div><div class="a" style="left:1162px;top:658px;width:49px;height:23px;background:#4a4a4a;border:1px solid #5a5a5a;border-radius:3px"></div><div class="a" style="left:1163px;top:659px;width:23px;height:21px;background:#2f2f2f;border-radius:2px 0 0 2px"></div><svg class="a" style="left:1167px;top:663px;" width="13" height="12" viewBox="0 0 13 12"><path d="M0 1H13M0 4.5H13M0 8H13M0 11.5H13" stroke="#e0e0e0" stroke-width="1.5"/></svg><svg class="a" style="left:1190px;top:663px;" width="14" height="13" viewBox="0 0 14 13"><rect x="0.0" y="0.0" width="3.6" height="3.6" fill="#d0d0d0"/><rect x="4.6" y="0.0" width="3.6" height="3.6" fill="#d0d0d0"/><rect x="9.2" y="0.0" width="3.6" height="3.6" fill="#d0d0d0"/><rect x="0.0" y="4.6" width="3.6" height="3.6" fill="#d0d0d0"/><rect x="4.6" y="4.6" width="3.6" height="3.6" fill="#d0d0d0"/><rect x="9.2" y="4.6" width="3.6" height="3.6" fill="#d0d0d0"/><rect x="0.0" y="9.2" width="3.6" height="3.6" fill="#d0d0d0"/><rect x="4.6" y="9.2" width="3.6" height="3.6" fill="#d0d0d0"/><rect x="9.2" y="9.2" width="3.6" height="3.6" fill="#d0d0d0"/></svg><div class="a" style="left:949px;top:694px;width:262px;height:180px;border:1px solid #5f5f5f;border-radius:2px;background:#535353"></div><div class="a" style="left:950px;top:713px;width:260px;height:1px;background:#4b4b4b"></div><div class="a" style="left:972px;top:697px;width:15px;height:14px;background:#fff;border:1px solid #222"></div><svg class="a" style="left:972px;top:697px;" width="15" height="14" viewBox="0 0 15 14"><path d="M1 13L14 1" stroke="#e0141e" stroke-width="1.8"/></svg><svg class="a" style="left:1192px;top:698px;" width="13" height="12" viewBox="0 0 13 12"><rect x="1.5" y="1.5" width="10" height="9" fill="none" stroke="#bbb" stroke-width="1.1"/><path d="M0.5 0.5L12.5 11.5" stroke="#bbb" stroke-width="1.3"/></svg><div class="t" style="left:993px;top:698.94px;font-size:11.2px;color:#c8c8c8;transform:scaleX(0.921);">[None]</div><div class="a" style="left:950px;top:733px;width:260px;height:1px;background:#4b4b4b"></div><div class="a" style="left:972px;top:717px;width:15px;height:14px;background:#000;border:1px solid #222"></div><svg class="a" style="left:1192px;top:718px;" width="13" height="13" viewBox="0 0 13 13"><circle cx="6.5" cy="6.5" r="4.3" fill="none" stroke="#bbb" stroke-width="1.1"/><path d="M6.5 0V13M0 6.5H13" stroke="#bbb" stroke-width="1"/><rect x="0.5" y="0.5" width="12" height="12" fill="none" stroke="#bbb" stroke-width="1"/></svg><div class="t" style="left:993px;top:718.94px;font-size:11.2px;color:#c8c8c8;transform:scaleX(0.902);">[Registration]</div><div class="a" style="left:950px;top:753px;width:260px;height:1px;background:#4b4b4b"></div><div class="a" style="left:972px;top:737px;width:15px;height:14px;background:#00ff00;border:1px solid #222"></div><svg class="a" style="left:972px;top:737px;" width="15" height="14" viewBox="0 0 15 14"><path d="M14 6 L14 14 L6 14Z" fill="#fff"/><path d="M14 9.5L14 14L9.5 14Z" fill="#000"/></svg><div class="a" style="left:1173px;top:738px;width:12px;height:12px;background:#d6d6d6"></div><div class="a" style="left:1177px;top:742px;width:4px;height:4px;background:#444;border-radius:2px"></div><svg class="a" style="left:1193px;top:737px;" width="13" height="14" viewBox="0 0 13 14"><rect x="0.5" y="0.5" width="12" height="13" fill="#eee" stroke="#aaa"/><rect x="2" y="2" width="3" height="10" fill="#e23c3c"/><rect x="5" y="2" width="3" height="10" fill="#3cb43c"/><rect x="8" y="2" width="3" height="10" fill="#3c78e0"/></svg><div class="t" style="left:993px;top:738.94px;font-size:11.2px;color:#e6e6e6;transform:scaleX(0.843);">Creasing</div><div class="a" style="left:950px;top:773px;width:260px;height:1px;background:#4b4b4b"></div><div class="a" style="left:972px;top:757px;width:15px;height:14px;background:#ff0000;border:1px solid #222"></div><svg class="a" style="left:972px;top:757px;" width="15" height="14" viewBox="0 0 15 14"><path d="M14 6 L14 14 L6 14Z" fill="#fff"/><path d="M14 9.5L14 14L9.5 14Z" fill="#000"/></svg><div class="a" style="left:1173px;top:758px;width:12px;height:12px;background:#d6d6d6"></div><div class="a" style="left:1177px;top:762px;width:4px;height:4px;background:#444;border-radius:2px"></div><svg class="a" style="left:1193px;top:757px;" width="13" height="14" viewBox="0 0 13 14"><rect x="0.5" y="0.5" width="12" height="13" fill="#eee" stroke="#aaa"/><rect x="2" y="2" width="3" height="10" fill="#e23c3c"/><rect x="5" y="2" width="3" height="10" fill="#3cb43c"/><rect x="8" y="2" width="3" height="10" fill="#3c78e0"/></svg><div class="t" style="left:993px;top:758.94px;font-size:11.2px;color:#e6e6e6;transform:scaleX(0.891);">Cutting</div><div class="a" style="left:950px;top:793px;width:260px;height:1px;background:#4b4b4b"></div><div class="a" style="left:972px;top:777px;width:15px;height:14px;background:#008080;border:1px solid #222"></div><svg class="a" style="left:972px;top:777px;" width="15" height="14" viewBox="0 0 15 14"><path d="M14 6 L14 14 L6 14Z" fill="#fff"/><path d="M14 9.5L14 14L9.5 14Z" fill="#000"/></svg><div class="a" style="left:1173px;top:778px;width:12px;height:12px;background:#d6d6d6"></div><div class="a" style="left:1177px;top:782px;width:4px;height:4px;background:#444;border-radius:2px"></div><svg class="a" style="left:1193px;top:777px;" width="13" height="14" viewBox="0 0 13 14"><rect x="0.5" y="0.5" width="12" height="13" fill="#eee" stroke="#aaa"/><rect x="2" y="2" width="3" height="10" fill="#e23c3c"/><rect x="5" y="2" width="3" height="10" fill="#3cb43c"/><rect x="8" y="2" width="3" height="10" fill="#3c78e0"/></svg><div class="t" style="left:993px;top:778.94px;font-size:11.2px;color:#e6e6e6;transform:scaleX(0.863);">Cut-creasing</div><div class="a" style="left:950px;top:813px;width:260px;height:1px;background:#4b4b4b"></div><div class="a" style="left:972px;top:797px;width:15px;height:14px;background:#800080;border:1px solid #222"></div><svg class="a" style="left:972px;top:797px;" width="15" height="14" viewBox="0 0 15 14"><path d="M14 6 L14 14 L6 14Z" fill="#fff"/><path d="M14 9.5L14 14L9.5 14Z" fill="#000"/></svg><div class="a" style="left:1173px;top:798px;width:12px;height:12px;background:#d6d6d6"></div><div class="a" style="left:1177px;top:802px;width:4px;height:4px;background:#444;border-radius:2px"></div><svg class="a" style="left:1193px;top:797px;" width="13" height="14" viewBox="0 0 13 14"><rect x="0.5" y="0.5" width="12" height="13" fill="#eee" stroke="#aaa"/><rect x="2" y="2" width="3" height="10" fill="#e23c3c"/><rect x="5" y="2" width="3" height="10" fill="#3cb43c"/><rect x="8" y="2" width="3" height="10" fill="#3c78e0"/></svg><div class="t" style="left:993px;top:798.94px;font-size:11.2px;color:#e6e6e6;transform:scaleX(0.863);">Dimensions</div><svg class="a" style="left:953px;top:877px;" width="17" height="13" viewBox="0 0 17 13"><path d="M0.5 1V11M3 1V11" stroke="#cfcfcf" stroke-width="1.5"/><path d="M5 1 L9 11" stroke="#cfcfcf" stroke-width="1.5"/><path d="M11 10H15L13 12Z" fill="#cfcfcf"/></svg><svg class="a" style="left:980px;top:877px;" width="14" height="13" viewBox="0 0 14 13"><circle cx="6" cy="6" r="4" fill="none" stroke="#cfcfcf" stroke-width="1.5"/><circle cx="6" cy="6" r="1.5" fill="#cfcfcf"/><circle cx="11" cy="2" r="1.3" fill="#cfcfcf"/><circle cx="11" cy="10" r="1.3" fill="#cfcfcf"/></svg><svg class="a" style="left:1002px;top:876px;" width="22" height="13" viewBox="0 0 22 13"><path d="M6 11 C0 11 0 5 5 5 C6 1 12 1 13 4 C18 3 20 11 15 11Z" fill="#6a6a6a"/><path d="M0 8H7" stroke="#6a6a6a" stroke-width="1.3"/></svg><svg class="a" style="left:1071px;top:877px;" width="16" height="13" viewBox="0 0 16 13"><rect x="0" y="0" width="3" height="3" fill="#cfcfcf"/><rect x="4" y="0" width="3" height="3" fill="#cfcfcf"/><rect x="8" y="0" width="3" height="3" fill="#cfcfcf"/><rect x="0" y="4" width="3" height="3" fill="#cfcfcf"/><rect x="4" y="4" width="3" height="3" fill="#cfcfcf"/><rect x="8" y="4" width="3" height="3" fill="#cfcfcf"/><rect x="0" y="8" width="3" height="3" fill="#cfcfcf"/><rect x="4" y="8" width="3" height="3" fill="#cfcfcf"/><rect x="8" y="8" width="3" height="3" fill="#cfcfcf"/><path d="M12 11H16L14 13Z" fill="#cfcfcf"/></svg><svg class="a" style="left:1099px;top:877px;" width="12" height="13" viewBox="0 0 12 13"><rect x="0.5" y="0.5" width="11" height="12" fill="none" stroke="#6a6a6a"/><path d="M2 4H10M2 7H10M2 10H10" stroke="#6a6a6a"/></svg><svg class="a" style="left:1123px;top:877px;" width="15" height="11" viewBox="0 0 15 11"><path d="M0 2H6L7 0.5H15V11H0Z" fill="#cfcfcf"/></svg><svg class="a" style="left:1151px;top:877px;" width="12" height="12" viewBox="0 0 12 12"><path d="M3 0.5 H11.5 V11.5 H6 V6 H0.5 Z" fill="#cfcfcf"/><path d="M0.5 7 H5 V11.5Z" fill="#cfcfcf"/></svg><svg class="a" style="left:1176px;top:876px;" width="12" height="13" viewBox="0 0 12 13"><path d="M0.5 2.5H11.5M4 2.5V0.5H8V2.5M1.5 3.5H10.5L9.5 12.5H2.5Z M4.5 5V11M6 5V11M7.5 5V11" fill="none" stroke="#6a6a6a" stroke-width="1.1"/></svg><div class="a" style="left:1218px;top:80px;width:377px;height:814px;background:#535353"></div><div class="a" style="left:1218px;top:81px;width:377px;height:26px;background:#424242"></div><div class="a" style="left:1218px;top:81px;width:147px;height:26px;background:#535353"></div><div class="t" style="left:1228.3px;top:89.09px;font-size:10.9px;color:#f0f0f0;font-weight:bold;transform:scaleX(0.873);">EngView Design Parameters</div><div class="t" style="left:1374.7px;top:89.09px;font-size:10.9px;color:#a8a8a8;font-weight:bold;transform:scaleX(0.830);">EngView Processes</div><div class="t" style="left:1469.4px;top:89.09px;font-size:10.9px;color:#a8a8a8;font-weight:bold;transform:scaleX(0.891);">EngView Step and</div><svg class="a" style="left:1578px;top:91px;" width="12" height="8" viewBox="0 0 12 8"><path d="M0 0.5H11M0 2.5H11M0 4.5H11M0 6.5H11" stroke="#cfcfcf" stroke-width="1"/></svg><div class="a" style="left:1461px;top:81px;width:1px;height:26px;background:#3a3a3a"></div><div class="a" style="left:1556px;top:81px;width:1px;height:26px;background:#3a3a3a"></div><div class="a" style="left:1224px;top:114px;width:366px;height:180px;background:#f0f0f0;border:1px solid #e6e6e6"></div><div class="a" style="left:1225px;top:115px;width:347px;height:178px;background:#535353"></div><div class="a" style="left:1225px;top:115px;width:347px;height:20px;background:#535353"></div><div class="a" style="left:1299px;top:119px;width:1px;height:13px;background:#888"></div><div class="a" style="left:1360px;top:119px;width:1px;height:13px;background:#888"></div><div class="a" style="left:1436px;top:119px;width:1px;height:13px;background:#888"></div><div class="t" style="left:1233.3px;top:120.16px;font-size:13.3px;color:#e6e6e6;transform:scaleX(0.870);">Parameter</div><div class="t" style="left:1307px;top:120.16px;font-size:13.3px;color:#e6e6e6;transform:scaleX(0.791);">Express</div><div class="t" style="left:1368px;top:120.16px;font-size:13.3px;color:#e6e6e6;transform:scaleX(0.854);">Value</div><div class="t" style="left:1443.6px;top:120.16px;font-size:13.3px;color:#e6e6e6;transform:scaleX(0.859);">Remark</div><div class="a" style="left:1225px;top:135px;width:347px;height:21px;background:#535353;border:2px solid #e8e8e8"></div><svg class="a" style="left:1229px;top:140px;" width="10" height="10" viewBox="0 0 10 10"><rect x="0.5" y="0.5" width="9" height="9" fill="none" stroke="#e6e6e6"/><path d="M2 5H8" stroke="#e6e6e6"/></svg><div class="t" style="left:1245px;top:139.96px;font-size:13.3px;color:#e6e6e6;transform:scaleX(0.782);">1 EVF12062</div><div class="a" style="left:1226px;top:156px;width:345px;height:21px;background:#535353;border:2px solid #e8e8e8"></div><svg class="a" style="left:1244px;top:161px;" width="10" height="10" viewBox="0 0 10 10"><rect x="0.5" y="0.5" width="9" height="9" fill="none" stroke="#e6e6e6"/><path d="M2 5H8" stroke="#e6e6e6"/></svg><div class="t" style="left:1261.4px;top:160.96px;font-size:13.3px;color:#e6e6e6;transform:scaleX(0.912);">Main</div><div class="a" style="left:0;top:0;width:1601px;height:292px;overflow:hidden"><div class="a" style="left:1225px;top:177px;width:74px;height:21px;border:1px solid #e6e6e6;background:#535353"></div><div class="a" style="left:1299px;top:177px;width:61px;height:21px;border:1px solid #e6e6e6;background:#535353"></div><div class="a" style="left:1360px;top:177px;width:76px;height:21px;border:1px solid #e6e6e6;background:#535353"></div><div class="a" style="left:1436px;top:177px;width:136px;height:21px;border:1px solid #e6e6e6;background:#535353"></div><div class="t" style="left:1245px;top:181.96px;font-size:13.3px;color:#e6e6e6;transform:scaleX(0.890);">A</div><div class="t" style="left:1306px;top:181.96px;font-size:13.3px;color:#e6e6e6;transform:scaleX(0.890);">90</div><div class="t" style="left:1367px;top:181.96px;font-size:13.3px;color:#e6e6e6;transform:scaleX(0.890);">90.00</div><div class="t" style="left:1443px;top:181.96px;font-size:13.3px;color:#e6e6e6;transform:scaleX(0.890);">Box Length</div><div class="a" style="left:1225px;top:198px;width:74px;height:21px;border:1px solid #e6e6e6;background:#535353"></div><div class="a" style="left:1299px;top:198px;width:61px;height:21px;border:1px solid #e6e6e6;background:#535353"></div><div class="a" style="left:1360px;top:198px;width:76px;height:21px;border:1px solid #e6e6e6;background:#535353"></div><div class="a" style="left:1436px;top:198px;width:136px;height:21px;border:1px solid #e6e6e6;background:#535353"></div><div class="t" style="left:1245px;top:202.96px;font-size:13.3px;color:#e6e6e6;transform:scaleX(0.890);">Dist</div><div class="t" style="left:1306px;top:202.96px;font-size:13.3px;color:#e6e6e6;transform:scaleX(0.890);">30</div><div class="t" style="left:1367px;top:202.96px;font-size:13.3px;color:#e6e6e6;transform:scaleX(0.890);">30.00</div><div class="t" style="left:1443px;top:202.96px;font-size:13.3px;color:#e6e6e6;transform:scaleX(0.890);">Distance</div><div class="a" style="left:1225px;top:219px;width:74px;height:21px;border:1px solid #e6e6e6;background:#535353"></div><div class="a" style="left:1299px;top:219px;width:61px;height:21px;border:1px solid #e6e6e6;background:#535353"></div><div class="a" style="left:1360px;top:219px;width:76px;height:21px;border:1px solid #e6e6e6;background:#535353"></div><div class="a" style="left:1436px;top:219px;width:136px;height:21px;border:1px solid #e6e6e6;background:#535353"></div><div class="t" style="left:1245px;top:223.96px;font-size:13.3px;color:#e6e6e6;transform:scaleX(0.890);">TrL</div><div class="t" style="left:1306px;top:223.96px;font-size:13.3px;color:#e6e6e6;transform:scaleX(0.890);">A/5</div><div class="t" style="left:1367px;top:223.96px;font-size:13.3px;color:#e6e6e6;transform:scaleX(0.890);">18.00</div><div class="t" style="left:1443px;top:223.96px;font-size:13.3px;color:#e6e6e6;transform:scaleX(0.890);">Triangle Length</div><div class="a" style="left:1225px;top:240px;width:74px;height:21px;border:1px solid #e6e6e6;background:#535353"></div><div class="a" style="left:1299px;top:240px;width:61px;height:21px;border:1px solid #e6e6e6;background:#535353"></div><div class="a" style="left:1360px;top:240px;width:76px;height:21px;border:1px solid #e6e6e6;background:#535353"></div><div class="a" style="left:1436px;top:240px;width:136px;height:21px;border:1px solid #e6e6e6;background:#535353"></div><div class="t" style="left:1245px;top:244.96px;font-size:13.3px;color:#e6e6e6;transform:scaleX(0.890);">TrH</div><div class="t" style="left:1306px;top:244.96px;font-size:13.3px;color:#e6e6e6;transform:scaleX(0.890);">35</div><div class="t" style="left:1367px;top:244.96px;font-size:13.3px;color:#e6e6e6;transform:scaleX(0.890);">35.00</div><div class="t" style="left:1443px;top:244.96px;font-size:13.3px;color:#e6e6e6;transform:scaleX(0.890);">Triangle Height</div><div class="a" style="left:1225px;top:261px;width:74px;height:21px;border:1px solid #e6e6e6;background:#535353"></div><div class="a" style="left:1299px;top:261px;width:61px;height:21px;border:1px solid #e6e6e6;background:#535353"></div><div class="a" style="left:1360px;top:261px;width:76px;height:21px;border:1px solid #e6e6e6;background:#535353"></div><div class="a" style="left:1436px;top:261px;width:136px;height:21px;border:1px solid #e6e6e6;background:#535353"></div><div class="t" style="left:1245px;top:265.96px;font-size:13.3px;color:#e6e6e6;transform:scaleX(0.890);">H</div><div class="t" style="left:1306px;top:265.96px;font-size:13.3px;color:#e6e6e6;transform:scaleX(0.890);">2*TrH+...</div><div class="t" style="left:1367px;top:265.96px;font-size:13.3px;color:#e6e6e6;transform:scaleX(0.890);">100.00</div><div class="t" style="left:1443px;top:265.96px;font-size:13.3px;color:#e6e6e6;transform:scaleX(0.890);">Height</div><div class="a" style="left:1225px;top:282px;width:74px;height:21px;border:1px solid #e6e6e6;background:#535353"></div><div class="a" style="left:1299px;top:282px;width:61px;height:21px;border:1px solid #e6e6e6;background:#535353"></div><div class="a" style="left:1360px;top:282px;width:76px;height:21px;border:1px solid #e6e6e6;background:#535353"></div><div class="a" style="left:1436px;top:282px;width:136px;height:21px;border:1px solid #e6e6e6;background:#535353"></div><div class="t" style="left:1245px;top:286.96px;font-size:13.3px;color:#e6e6e6;transform:scaleX(0.890);">A1</div><div class="t" style="left:1306px;top:286.96px;font-size:13.3px;color:#e6e6e6;transform:scaleX(0.890);">A+10</div><div class="t" style="left:1367px;top:286.96px;font-size:13.3px;color:#e6e6e6;transform:scaleX(0.890);">90.50</div><div class="t" style="left:1443px;top:286.96px;font-size:13.3px;color:#e6e6e6;transform:scaleX(0.890);">Length</div></div><div class="a" style="left:1224px;top:292px;width:349px;height:1px;background:#f0f0f0"></div><div class="a" style="left:1572px;top:115px;width:18px;height:178px;background:#f0f0f0"></div><div class="a" style="left:1574px;top:133px;width:14px;height:65px;background:#cdcdcd"></div><svg class="a" style="left:1576px;top:119px;" width="10" height="6" viewBox="0 0 10 6"><path d="M1 5l4-4 4 4" stroke="#444" stroke-width="1.3" fill="none"/></svg><svg class="a" style="left:1576px;top:281px;" width="10" height="6" viewBox="0 0 10 6"><path d="M1 1l4 4 4-4" stroke="#444" stroke-width="1.3" fill="none"/></svg><svg class="a" style="left:1564px;top:296px;" width="12" height="10" viewBox="0 0 12 10"><path d="M9 5 A4 4 0 1 1 7 1.5" fill="none" stroke="#6a6a6a" stroke-width="1.2"/></svg><div class="a" style="left:1218px;top:309.5px;width:377px;height:2px;background:#3a3a3a"></div><div class="a" style="left:1218px;top:312px;width:377px;height:26px;background:#424242"></div><div class="a" style="left:1218px;top:312px;width:97px;height:26px;background:#535353"></div><div class="t" style="left:1228.3px;top:320.09px;font-size:10.9px;color:#f0f0f0;font-weight:bold;transform:scaleX(0.885);">EngView Articles</div><svg class="a" style="left:1578px;top:322px;" width="12" height="8" viewBox="0 0 12 8"><path d="M0 0.5H11M0 2.5H11M0 4.5H11M0 6.5H11" stroke="#cfcfcf" stroke-width="1"/></svg><div class="a" style="left:1224px;top:345px;width:366px;height:174px;border:1px solid #e6e6e6;background:#535353"></div><div class="a" style="left:1324px;top:350px;width:1px;height:12px;background:#888"></div><div class="a" style="left:1431px;top:350px;width:1px;height:12px;background:#888"></div><div class="a" style="left:1538px;top:350px;width:1px;height:12px;background:#888"></div><div class="t" style="left:1233.3px;top:351.31px;font-size:13px;color:#e6e6e6;transform:scaleX(0.941);">Article</div><div class="t" style="left:1331.7px;top:351.31px;font-size:13px;color:#e6e6e6;transform:scaleX(0.933);">Front</div><div class="t" style="left:1438.3px;top:351.31px;font-size:13px;color:#e6e6e6;transform:scaleX(0.831);">Rear</div><div class="t" style="left:1545.7px;top:351.31px;font-size:13px;color:#e6e6e6;transform:scaleX(0.852);">In Use</div><div class="a" style="left:1224px;top:368px;width:364px;height:19px;border:2px solid #e8e8e8;background:#535353"></div><svg class="a" style="left:1228px;top:372px;" width="10" height="10" viewBox="0 0 10 10"><rect x="0.5" y="0.5" width="9" height="9" fill="none" stroke="#e6e6e6"/><path d="M2 5H8" stroke="#e6e6e6"/></svg><div class="t" style="left:1245px;top:371.31px;font-size:13px;color:#e6e6e6;transform:scaleX(0.798);">EVF12062</div><div class="a" style="left:1224px;top:387px;width:100px;height:21px;border:1px solid #e8e8e8"></div><div class="t" style="left:1245px;top:392.31px;font-size:13px;color:#e6e6e6;transform:scaleX(0.941);">Article</div><div class="a" style="left:1324px;top:387px;width:107px;height:21px;border:1px solid #e8e8e8"></div><div class="t" style="left:1344.3px;top:392.31px;font-size:13px;color:#e6e6e6;transform:scaleX(0.911);">Artwork 1</div><div class="a" style="left:1431px;top:387px;width:107px;height:21px;border:1px solid #e8e8e8"></div><div class="t" style="left:1451px;top:392.31px;font-size:13px;color:#e6e6e6;transform:scaleX(0.936);">&lt;None&gt;</div><div class="a" style="left:1538px;top:387px;width:50px;height:21px;border:1px solid #e8e8e8"></div><div class="t" style="left:1548px;top:392.31px;font-size:13px;color:#e6e6e6;transform:scaleX(0.900);">1</div><svg class="a" style="left:1467px;top:527px;" width="13" height="11" viewBox="0 0 13 11"><path d="M3 0.5H12.5V10.5H6V5.5H0.5Z" fill="#6a6a6a"/><path d="M0.5 6.5H5V10.5Z" fill="#6a6a6a"/></svg><svg class="a" style="left:1498px;top:526px;" width="12" height="13" viewBox="0 0 12 13"><path d="M0.5 2.5H11.5M4 2.5V0.5H8V2.5M1.5 3.5H10.5L9.5 12.5H2.5Z M4.5 5V11M6 5V11M7.5 5V11" fill="none" stroke="#6a6a6a" stroke-width="1.1"/></svg><svg class="a" style="left:1530px;top:526px;" width="12" height="12" viewBox="0 0 12 12"><path d="M6 0 L11.5 5.5 H8 V11.5 H4 V5.5 H0.5Z" fill="#6a6a6a"/></svg><svg class="a" style="left:1562px;top:526px;" width="12" height="12" viewBox="0 0 12 12"><path d="M6 11.5 L11.5 6 H8 V0 H4 V6 H0.5Z" fill="#6a6a6a"/></svg><div class="a" style="left:1218px;top:542px;width:377px;height:2px;background:#3a3a3a"></div><div class="a" style="left:1218px;top:543px;width:377px;height:26px;background:#424242"></div><div class="a" style="left:1218px;top:543px;width:75px;height:26px;background:#535353"></div><div class="t" style="left:1228.3px;top:550.79px;font-size:10.9px;color:#f0f0f0;font-weight:bold;transform:scaleX(0.900);">EngView 3D</div><svg class="a" style="left:1578px;top:553px;" width="12" height="8" viewBox="0 0 12 8"><path d="M0 0.5H11M0 2.5H11M0 4.5H11M0 6.5H11" stroke="#cfcfcf" stroke-width="1"/></svg><svg class="a" style="left:1227px;top:574px;" width="18" height="18" viewBox="0 0 18 18"><circle cx="8" cy="8" r="7" fill="none" stroke="#e6e6e6" stroke-width="1.6"/><path d="M8 3.5V12.5M3.5 8H12.5" stroke="#e6e6e6" stroke-width="1.1"/><path d="M8 2.5L6.5 4.5H9.5Z M8 13.5L6.5 11.5H9.5Z M2.5 8L4.5 6.5V9.5Z M13.5 8L11.5 6.5V9.5Z" fill="#e6e6e6"/><path d="M13 13L17 17" stroke="#e6e6e6" stroke-width="2.4"/></svg><svg class="a" style="left:1251px;top:574px;" width="18" height="18" viewBox="0 0 18 18"><ellipse cx="9" cy="12" rx="8" ry="4" fill="none" stroke="#e6e6e6" stroke-width="1.6" transform="rotate(-12 9 12)"/><path d="M9 3 C13 4 14 10 11 15 C8 14 5 10 6 6Z" fill="none" stroke="#e6e6e6" stroke-width="1.4"/><path d="M5 4L8 4L6.5 7Z" fill="#e6e6e6"/><path d="M15 16H20L17.5 18.5Z" fill="#e6e6e6"/></svg><svg class="a" style="left:1287px;top:574px;" width="18" height="18" viewBox="0 0 18 18"><path d="M1 5 L5 1 H14 V13 L10 17 H1Z" fill="#e2e2e2"/><path d="M1 5 H10 V17" fill="none" stroke="#9a9a9a" stroke-width="0.8"/><path d="M10 5 L14 1 V13 L10 17Z" fill="#b8b8b8"/><path d="M1 5 L5 1 H14 L10 5Z" fill="#f2f2f2"/><path d="M15 16H20L17.5 18.5Z" fill="#e6e6e6"/></svg><svg class="a" style="left:1327px;top:574px;" width="18" height="18" viewBox="0 0 18 18"><path d="M1 1 L13 9 L1 17Z" fill="#e0e0e0"/><path d="M13 16H18L15.5 18.5Z" fill="#e6e6e6"/></svg><svg class="a" style="left:1358px;top:574px;" width="18" height="18" viewBox="0 0 18 18"><rect x="1" y="1" width="17" height="17" rx="1.5" fill="none" stroke="#e0e0e0" stroke-width="1.6"/><rect x="4" y="12" width="11" height="6" fill="#e0e0e0"/><rect x="5.5" y="13.5" width="3" height="3" fill="#535353"/><path d="M5 9 C5 5 9 4 13 4" fill="none" stroke="#e0e0e0" stroke-width="1.6"/><path d="M12 1.5L15.5 4L12 6.5Z" fill="#e0e0e0"/></svg><svg class="a" style="left:1385px;top:574px;" width="18" height="18" viewBox="0 0 18 18"><path d="M7 0.5 C12 0.5 14 4 14 7 C14 10 11 11.5 10.5 13 H3.5 C3 11.5 0 10 0 7 C0 4 2 0.5 7 0.5Z" fill="#e8e8e8"/><path d="M4 14 H10 L8.5 17 H5.5Z" fill="#cfcfcf"/></svg><svg class="a" style="left:1408px;top:574px;" width="18" height="18" viewBox="0 0 18 18"><path d="M1 1 H10 L15.5 6.5 V18 H1Z" fill="none" stroke="#e0e0e0" stroke-width="1.3"/><path d="M4 8H13M4 14H13M9 5.5V10.5M6.5 11.5V16.5" stroke="#e0e0e0" stroke-width="1.2"/></svg><svg class="a" style="left:1444px;top:574px;" width="18" height="18" viewBox="0 0 18 18"><path d="M1 7 L5 3 H15 V11 L11 15 H1Z" fill="none" stroke="#e0e0e0" stroke-width="1.5"/><path d="M1 7H11V15M11 7L15 3" fill="none" stroke="#e0e0e0" stroke-width="1.2"/><path d="M4 10 H8 V14" fill="none" stroke="#e0e0e0" stroke-width="1.2"/><path d="M5 3 V1 H16 V9 L15 11" fill="none" stroke="#e0e0e0" stroke-width="1.2"/></svg><svg class="a" style="left:1467px;top:574px;" width="18" height="18" viewBox="0 0 18 18"><path d="M6 1 C3 3 3 7 4 11" fill="none" stroke="#e6e6e6" stroke-width="2"/><path d="M1 9 L4.5 14 L7.5 9Z" fill="#e6e6e6"/><path d="M12 17 C15 15 15 11 14 7" fill="none" stroke="#e6e6e6" stroke-width="2"/><path d="M10.5 9 L14 4 L17.5 9Z" fill="#e6e6e6"/></svg><svg class="a" style="left:1492px;top:574px;" width="18" height="18" viewBox="0 0 18 18"><path d="M1 4 L4 1 H16 V11 L13 14 H1Z" fill="#e2e2e2"/><path d="M1 4 H13 V14 M13 4 L16 1" fill="none" stroke="#9a9a9a" stroke-width="0.8"/><path d="M1 12V18M13 12V18M3 16H11" stroke="#e0e0e0" stroke-width="1"/><path d="M2 16L4 14.5V17.5Z M12 16L10 14.5V17.5Z" fill="#e0e0e0"/></svg><div class="a" style="left:1279px;top:576px;width:1px;height:15px;background:#9a9a9a"></div><div class="a" style="left:1315px;top:576px;width:1px;height:15px;background:#9a9a9a"></div><div class="a" style="left:1350px;top:576px;width:1px;height:15px;background:#9a9a9a"></div><div class="a" style="left:1434px;top:576px;width:1px;height:15px;background:#9a9a9a"></div><div class="a" style="left:1225px;top:596px;width:364px;height:272px;background:#bec9d8"></div><svg class="a" style="left:1231px;top:878px;" width="15" height="13" viewBox="0 0 15 13"><path d="M11.5 9 A5 5 0 1 1 11 3.5" fill="none" stroke="#9a9a9a" stroke-width="1.3"/><path d="M12 0.5V4.5H8" fill="none" stroke="#9a9a9a" stroke-width="1.2"/></svg><div class="a" style="left:1256px;top:879px;width:13px;height:13px;background:#fff;border:1px solid #333"></div><svg class="a" style="left:1256px;top:879px;" width="13" height="13" viewBox="0 0 13 13"><path d="M2.5 6.5L5.5 9.5L10.5 3" stroke="#111" stroke-width="1.8" fill="none"/></svg><div class="t" style="left:1272px;top:879.36px;font-size:12px;color:#e6e6e6;transform:scaleX(0.886);">Enable Auto Refresh</div><div class="a" style="left:1565px;top:879px;width:12px;height:11px;background:linear-gradient(#c8c8c8,#9a9a9a);border-top:1px solid #111;border-bottom:1px solid #ddd"></div><svg class="a" style="left:1576px;top:887px;" width="5" height="3" viewBox="0 0 5 3"><path d="M0 0H5L2.5 3Z" fill="#ddd"/></svg><div class="a" style="left:943px;top:893px;width:653px;height:1px;background:#393939"></div><svg class="a" style="left:1300px;top:610px" width="210" height="250" viewBox="0 0 755 899"><defs><clipPath id="cpL"><polygon points="40,485 175,305 490,378 525,645 445,855 230,790 50,650"/></clipPath><clipPath id="cpR"><polygon points="490,378 610,298 700,490 700,640 560,800 445,855 525,645"/></clipPath><linearGradient id="gR" x1="0" y1="0" x2="1" y2="0"><stop offset="0" stop-color="#e2f2df"/><stop offset="1" stop-color="#b5cfb3"/></linearGradient><linearGradient id="gL" x1="0" y1="0" x2="1" y2="0.3"><stop offset="0" stop-color="#c2d8c1"/><stop offset="1" stop-color="#d3e6d1"/></linearGradient></defs><polygon points="40,485 175,305 490,378 525,645" fill="#c9dfc7"/><polygon points="40,485 525,645 445,855 230,790 50,650" fill="#c4dac3"/><polygon points="50,650 525,645 445,855 230,790" fill="#bdd3bc"/><polygon points="490,378 610,298 700,490 525,645" fill="url(#gR)"/><polygon points="525,645 700,490 700,640 560,800 445,855" fill="#b9d1b7"/><polygon points="610,298 740,430 700,490" fill="#a9c3a8"/><g clip-path="url(#cpL)" opacity="0.8"><circle cx="315" cy="410" r="5" fill="#86b2e6"/><circle cx="209" cy="718" r="5" fill="#e2f2f8"/><circle cx="300" cy="676" r="7" fill="#9fd0ee"/><circle cx="678" cy="569" r="6" fill="#e2f2f8"/><circle cx="457" cy="419" r="5" fill="#d88cbc"/><circle cx="304" cy="675" r="5" fill="#7a52a8"/><circle cx="489" cy="767" r="5" fill="#9fd0ee"/><circle cx="684" cy="591" r="4" fill="#7a52a8"/><circle cx="255" cy="323" r="7" fill="#9fd0ee"/><circle cx="329" cy="499" r="7" fill="#9fd0ee"/><circle cx="354" cy="795" r="7" fill="#7a52a8"/><circle cx="704" cy="497" r="5" fill="#e2f2f8"/><circle cx="149" cy="736" r="7" fill="#86b2e6"/><circle cx="682" cy="663" r="4" fill="#9fd0ee"/><circle cx="56" cy="561" r="6" fill="#9fd0ee"/><circle cx="677" cy="648" r="5" fill="#c5bde6"/><circle cx="460" cy="510" r="5" fill="#a866b4"/><circle cx="316" cy="795" r="4" fill="#e2f2f8"/><circle cx="184" cy="442" r="6" fill="#d88cbc"/><circle cx="559" cy="495" r="6" fill="#9fd0ee"/><circle cx="129" cy="775" r="7" fill="#d88cbc"/><circle cx="548" cy="634" r="6" fill="#9fd0ee"/><circle cx="106" cy="379" r="5" fill="#86b2e6"/><circle cx="319" cy="808" r="7" fill="#c5bde6"/><circle cx="564" cy="739" r="5" fill="#9fd0ee"/><circle cx="623" cy="499" r="4" fill="#a866b4"/><circle cx="236" cy="622" r="4" fill="#c5bde6"/><circle cx="187" cy="520" r="6" fill="#7a52a8"/><circle cx="322" cy="504" r="4" fill="#86b2e6"/><circle cx="638" cy="808" r="6" fill="#d88cbc"/><circle cx="342" cy="471" r="5" fill="#e2f2f8"/><circle cx="530" cy="358" r="5" fill="#86b2e6"/><circle cx="560" cy="691" r="5" fill="#7a52a8"/><circle cx="242" cy="713" r="4" fill="#7a52a8"/><circle cx="326" cy="799" r="4" fill="#a866b4"/><circle cx="239" cy="677" r="5" fill="#d88cbc"/><circle cx="364" cy="370" r="5" fill="#7a52a8"/><circle cx="639" cy="525" r="7" fill="#86b2e6"/><circle cx="232" cy="673" r="7" fill="#d88cbc"/><circle cx="711" cy="667" r="6" fill="#86b2e6"/><circle cx="298" cy="788" r="5" fill="#9fd0ee"/><circle cx="494" cy="682" r="5" fill="#e2f2f8"/><circle cx="494" cy="734" r="5" fill="#e2f2f8"/><circle cx="323" cy="714" r="5" fill="#7a52a8"/><circle cx="625" cy="490" r="6" fill="#9fd0ee"/><circle cx="116" cy="592" r="4" fill="#a866b4"/><circle cx="251" cy="670" r="5" fill="#a866b4"/><circle cx="574" cy="544" r="5" fill="#c5bde6"/><circle cx="549" cy="706" r="6" fill="#a866b4"/><circle cx="401" cy="641" r="7" fill="#d88cbc"/><circle cx="236" cy="707" r="4" fill="#d88cbc"/><circle cx="249" cy="619" r="4" fill="#7a52a8"/><circle cx="244" cy="834" r="7" fill="#a866b4"/><circle cx="241" cy="716" r="6" fill="#7a52a8"/><circle cx="577" cy="446" r="5" fill="#86b2e6"/><circle cx="637" cy="796" r="6" fill="#7a52a8"/><circle cx="422" cy="693" r="5" fill="#c5bde6"/><circle cx="181" cy="555" r="6" fill="#86b2e6"/><circle cx="602" cy="815" r="6" fill="#a866b4"/><circle cx="647" cy="789" r="6" fill="#e2f2f8"/><circle cx="155" cy="341" r="5" fill="#7a52a8"/><circle cx="396" cy="363" r="6" fill="#9fd0ee"/><circle cx="268" cy="704" r="7" fill="#e2f2f8"/><circle cx="402" cy="648" r="7" fill="#c5bde6"/><circle cx="321" cy="391" r="7" fill="#9fd0ee"/><circle cx="310" cy="326" r="7" fill="#86b2e6"/><circle cx="418" cy="461" r="6" fill="#9fd0ee"/><circle cx="513" cy="530" r="5" fill="#9fd0ee"/><circle cx="370" cy="450" r="5" fill="#9fd0ee"/><circle cx="421" cy="409" r="7" fill="#86b2e6"/><circle cx="517" cy="659" r="7" fill="#9fd0ee"/><circle cx="546" cy="362" r="5" fill="#d88cbc"/><circle cx="133" cy="600" r="4" fill="#d88cbc"/><circle cx="389" cy="509" r="5" fill="#d88cbc"/><circle cx="572" cy="427" r="7" fill="#d88cbc"/><circle cx="699" cy="389" r="4" fill="#c5bde6"/><circle cx="590" cy="540" r="5" fill="#86b2e6"/><circle cx="542" cy="381" r="7" fill="#e2f2f8"/><circle cx="672" cy="427" r="4" fill="#d88cbc"/><circle cx="581" cy="429" r="6" fill="#e2f2f8"/><circle cx="579" cy="781" r="4" fill="#d88cbc"/><circle cx="150" cy="790" r="5" fill="#d88cbc"/><circle cx="342" cy="439" r="7" fill="#9fd0ee"/><circle cx="437" cy="311" r="5" fill="#86b2e6"/><circle cx="682" cy="785" r="7" fill="#c5bde6"/><circle cx="237" cy="571" r="4" fill="#9fd0ee"/><circle cx="281" cy="634" r="5" fill="#d88cbc"/><circle cx="267" cy="480" r="4" fill="#7a52a8"/><circle cx="593" cy="636" r="7" fill="#86b2e6"/><circle cx="512" cy="310" r="5" fill="#e2f2f8"/><circle cx="312" cy="582" r="5" fill="#86b2e6"/><circle cx="396" cy="845" r="5" fill="#86b2e6"/><circle cx="481" cy="390" r="7" fill="#9fd0ee"/><circle cx="336" cy="611" r="4" fill="#d88cbc"/><circle cx="177" cy="795" r="5" fill="#e2f2f8"/><circle cx="244" cy="844" r="5" fill="#86b2e6"/><circle cx="434" cy="537" r="4" fill="#e2f2f8"/><circle cx="64" cy="518" r="6" fill="#9fd0ee"/><circle cx="153" cy="428" r="6" fill="#86b2e6"/><circle cx="365" cy="637" r="5" fill="#a866b4"/><circle cx="149" cy="703" r="6" fill="#86b2e6"/><circle cx="527" cy="355" r="7" fill="#86b2e6"/><circle cx="656" cy="395" r="6" fill="#e2f2f8"/><circle cx="650" cy="395" r="5" fill="#86b2e6"/><circle cx="483" cy="670" r="7" fill="#d88cbc"/><circle cx="618" cy="342" r="5" fill="#a866b4"/><circle cx="194" cy="688" r="6" fill="#a866b4"/><circle cx="422" cy="433" r="5" fill="#d88cbc"/><circle cx="424" cy="573" r="4" fill="#d88cbc"/><circle cx="467" cy="819" r="6" fill="#9fd0ee"/><circle cx="254" cy="809" r="5" fill="#86b2e6"/><circle cx="222" cy="808" r="5" fill="#9fd0ee"/><circle cx="433" cy="462" r="5" fill="#9fd0ee"/><circle cx="148" cy="514" r="5" fill="#a866b4"/><circle cx="217" cy="549" r="4" fill="#c5bde6"/><circle cx="197" cy="635" r="6" fill="#9fd0ee"/><circle cx="284" cy="475" r="6" fill="#86b2e6"/><circle cx="406" cy="729" r="4" fill="#9fd0ee"/><circle cx="160" cy="422" r="7" fill="#c5bde6"/><circle cx="557" cy="339" r="4" fill="#7a52a8"/><circle cx="117" cy="540" r="5" fill="#7a52a8"/><circle cx="328" cy="782" r="7" fill="#e2f2f8"/><circle cx="219" cy="692" r="4" fill="#c5bde6"/><circle cx="401" cy="335" r="4" fill="#86b2e6"/><circle cx="222" cy="642" r="5" fill="#c5bde6"/><circle cx="463" cy="434" r="6" fill="#e2f2f8"/><circle cx="342" cy="309" r="5" fill="#9fd0ee"/><circle cx="568" cy="367" r="4" fill="#c5bde6"/><circle cx="376" cy="818" r="6" fill="#7a52a8"/><circle cx="580" cy="715" r="7" fill="#86b2e6"/><circle cx="451" cy="594" r="4" fill="#c5bde6"/><circle cx="311" cy="415" r="7" fill="#c5bde6"/><circle cx="349" cy="570" r="7" fill="#9fd0ee"/><circle cx="514" cy="326" r="4" fill="#e2f2f8"/><circle cx="128" cy="526" r="6" fill="#e2f2f8"/><circle cx="487" cy="618" r="4" fill="#9fd0ee"/><circle cx="584" cy="420" r="4" fill="#9fd0ee"/><circle cx="718" cy="757" r="5" fill="#86b2e6"/><circle cx="610" cy="750" r="5" fill="#86b2e6"/><circle cx="520" cy="358" r="5" fill="#d88cbc"/><circle cx="325" cy="647" r="4" fill="#c5bde6"/><circle cx="685" cy="467" r="5" fill="#d88cbc"/><circle cx="226" cy="368" r="7" fill="#d88cbc"/><circle cx="87" cy="560" r="5" fill="#c5bde6"/><circle cx="446" cy="420" r="7" fill="#c5bde6"/><circle cx="603" cy="439" r="5" fill="#e2f2f8"/><circle cx="165" cy="456" r="5" fill="#c5bde6"/><circle cx="387" cy="741" r="5" fill="#a866b4"/><circle cx="281" cy="584" r="5" fill="#a866b4"/><circle cx="336" cy="380" r="4" fill="#c5bde6"/><circle cx="533" cy="703" r="7" fill="#d88cbc"/><circle cx="96" cy="532" r="6" fill="#7a52a8"/><circle cx="113" cy="303" r="4" fill="#d88cbc"/><circle cx="204" cy="405" r="5" fill="#e2f2f8"/><circle cx="215" cy="471" r="7" fill="#e2f2f8"/><circle cx="476" cy="349" r="4" fill="#c5bde6"/><circle cx="57" cy="761" r="5" fill="#7a52a8"/><circle cx="268" cy="324" r="5" fill="#7a52a8"/><circle cx="409" cy="492" r="5" fill="#86b2e6"/><circle cx="69" cy="479" r="7" fill="#e2f2f8"/><circle cx="661" cy="768" r="7" fill="#a866b4"/><circle cx="329" cy="562" r="5" fill="#a866b4"/><circle cx="276" cy="397" r="7" fill="#d88cbc"/><circle cx="583" cy="469" r="4" fill="#a866b4"/><circle cx="444" cy="384" r="6" fill="#9fd0ee"/><circle cx="86" cy="476" r="7" fill="#c5bde6"/><circle cx="607" cy="395" r="5" fill="#e2f2f8"/><circle cx="690" cy="679" r="7" fill="#c5bde6"/><circle cx="62" cy="799" r="6" fill="#86b2e6"/><circle cx="472" cy="322" r="4" fill="#7a52a8"/><circle cx="306" cy="777" r="7" fill="#7a52a8"/><circle cx="293" cy="653" r="6" fill="#c5bde6"/><circle cx="111" cy="412" r="5" fill="#86b2e6"/><circle cx="83" cy="675" r="4" fill="#c5bde6"/><circle cx="305" cy="626" r="7" fill="#9fd0ee"/><circle cx="451" cy="837" r="5" fill="#7a52a8"/><circle cx="649" cy="374" r="5" fill="#c5bde6"/><circle cx="700" cy="664" r="4" fill="#a866b4"/><circle cx="385" cy="444" r="5" fill="#7a52a8"/><circle cx="396" cy="371" r="5" fill="#7a52a8"/><circle cx="545" cy="351" r="5" fill="#9fd0ee"/><circle cx="649" cy="426" r="4" fill="#7a52a8"/><circle cx="638" cy="433" r="7" fill="#9fd0ee"/><circle cx="126" cy="746" r="4" fill="#c5bde6"/><circle cx="422" cy="371" r="5" fill="#d88cbc"/><circle cx="543" cy="837" r="4" fill="#9fd0ee"/><circle cx="603" cy="698" r="4" fill="#7a52a8"/><circle cx="178" cy="589" r="6" fill="#7a52a8"/><circle cx="472" cy="302" r="4" fill="#a866b4"/><circle cx="190" cy="842" r="6" fill="#86b2e6"/><circle cx="644" cy="834" r="7" fill="#7a52a8"/><circle cx="236" cy="635" r="4" fill="#c5bde6"/><circle cx="78" cy="318" r="5" fill="#a866b4"/><circle cx="308" cy="504" r="6" fill="#d88cbc"/><circle cx="133" cy="616" r="5" fill="#e2f2f8"/><circle cx="666" cy="733" r="7" fill="#d88cbc"/><circle cx="294" cy="763" r="6" fill="#e2f2f8"/><circle cx="219" cy="582" r="6" fill="#d88cbc"/><circle cx="94" cy="689" r="5" fill="#a866b4"/><circle cx="246" cy="300" r="5" fill="#d88cbc"/><circle cx="703" cy="686" r="5" fill="#86b2e6"/><circle cx="655" cy="782" r="4" fill="#86b2e6"/><circle cx="399" cy="422" r="5" fill="#c5bde6"/><circle cx="308" cy="521" r="5" fill="#c5bde6"/><circle cx="572" cy="303" r="7" fill="#7a52a8"/><circle cx="356" cy="705" r="6" fill="#e2f2f8"/><circle cx="257" cy="647" r="5" fill="#a866b4"/><circle cx="136" cy="639" r="7" fill="#7a52a8"/><circle cx="417" cy="623" r="6" fill="#86b2e6"/><circle cx="380" cy="736" r="6" fill="#c5bde6"/><circle cx="566" cy="593" r="5" fill="#86b2e6"/><circle cx="519" cy="349" r="5" fill="#d88cbc"/><circle cx="712" cy="386" r="5" fill="#e2f2f8"/><circle cx="317" cy="825" r="5" fill="#9fd0ee"/><circle cx="165" cy="699" r="4" fill="#e2f2f8"/><circle cx="360" cy="418" r="5" fill="#7a52a8"/><circle cx="271" cy="304" r="5" fill="#e2f2f8"/><circle cx="418" cy="650" r="7" fill="#d88cbc"/><circle cx="478" cy="475" r="5" fill="#a866b4"/><circle cx="668" cy="565" r="5" fill="#e2f2f8"/><circle cx="613" cy="825" r="6" fill="#7a52a8"/><circle cx="165" cy="678" r="6" fill="#a866b4"/><circle cx="445" cy="595" r="7" fill="#7a52a8"/><circle cx="570" cy="566" r="6" fill="#86b2e6"/><circle cx="122" cy="569" r="6" fill="#7a52a8"/><circle cx="644" cy="473" r="4" fill="#e2f2f8"/><circle cx="173" cy="783" r="4" fill="#a866b4"/><circle cx="332" cy="598" r="4" fill="#9fd0ee"/><circle cx="126" cy="710" r="5" fill="#86b2e6"/><circle cx="565" cy="440" r="5" fill="#e2f2f8"/><circle cx="704" cy="827" r="5" fill="#9fd0ee"/><circle cx="171" cy="817" r="5" fill="#86b2e6"/><circle cx="392" cy="304" r="6" fill="#c5bde6"/><circle cx="364" cy="756" r="5" fill="#c5bde6"/><circle cx="206" cy="310" r="6" fill="#9fd0ee"/><circle cx="154" cy="825" r="5" fill="#d88cbc"/><circle cx="635" cy="803" r="5" fill="#d88cbc"/><circle cx="594" cy="503" r="5" fill="#e2f2f8"/><circle cx="500" cy="484" r="5" fill="#d88cbc"/><circle cx="478" cy="657" r="4" fill="#7a52a8"/><circle cx="60" cy="595" r="4" fill="#c5bde6"/><circle cx="113" cy="814" r="6" fill="#e2f2f8"/><circle cx="670" cy="505" r="4" fill="#86b2e6"/><circle cx="293" cy="501" r="5" fill="#e2f2f8"/><circle cx="223" cy="476" r="5" fill="#7a52a8"/><circle cx="154" cy="755" r="5" fill="#d88cbc"/><circle cx="660" cy="596" r="4" fill="#e2f2f8"/><circle cx="368" cy="734" r="5" fill="#9fd0ee"/><circle cx="274" cy="774" r="5" fill="#d88cbc"/><circle cx="207" cy="761" r="7" fill="#c5bde6"/><circle cx="586" cy="518" r="4" fill="#d88cbc"/><circle cx="272" cy="405" r="5" fill="#7a52a8"/><circle cx="540" cy="398" r="7" fill="#d88cbc"/><circle cx="635" cy="313" r="4" fill="#86b2e6"/><circle cx="62" cy="843" r="6" fill="#86b2e6"/><circle cx="81" cy="458" r="5" fill="#a866b4"/><circle cx="216" cy="473" r="5" fill="#9fd0ee"/><circle cx="209" cy="537" r="4" fill="#d88cbc"/><circle cx="447" cy="744" r="5" fill="#9fd0ee"/><circle cx="473" cy="677" r="5" fill="#7a52a8"/><circle cx="301" cy="377" r="7" fill="#d88cbc"/><circle cx="705" cy="727" r="5" fill="#7a52a8"/><circle cx="594" cy="550" r="6" fill="#d88cbc"/><circle cx="637" cy="545" r="5" fill="#d88cbc"/><circle cx="231" cy="321" r="5" fill="#d88cbc"/><circle cx="271" cy="557" r="5" fill="#9fd0ee"/><circle cx="417" cy="695" r="5" fill="#9fd0ee"/><circle cx="713" cy="450" r="6" fill="#9fd0ee"/><circle cx="88" cy="393" r="5" fill="#9fd0ee"/><circle cx="124" cy="338" r="4" fill="#e2f2f8"/><circle cx="625" cy="448" r="5" fill="#d88cbc"/><circle cx="295" cy="545" r="7" fill="#9fd0ee"/><circle cx="331" cy="558" r="7" fill="#7a52a8"/><circle cx="258" cy="342" r="5" fill="#e2f2f8"/><circle cx="251" cy="751" r="7" fill="#9fd0ee"/><circle cx="474" cy="669" r="4" fill="#a866b4"/><circle cx="415" cy="712" r="5" fill="#a866b4"/><circle cx="358" cy="448" r="7" fill="#7a52a8"/><circle cx="547" cy="368" r="5" fill="#7a52a8"/><circle cx="586" cy="736" r="5" fill="#86b2e6"/><circle cx="129" cy="644" r="4" fill="#a866b4"/><circle cx="659" cy="771" r="4" fill="#d88cbc"/><circle cx="205" cy="758" r="7" fill="#9fd0ee"/><circle cx="500" cy="542" r="7" fill="#7a52a8"/><circle cx="461" cy="709" r="5" fill="#a866b4"/><circle cx="340" cy="608" r="6" fill="#a866b4"/><circle cx="274" cy="838" r="6" fill="#d88cbc"/><circle cx="207" cy="582" r="4" fill="#86b2e6"/><circle cx="86" cy="796" r="4" fill="#86b2e6"/><circle cx="450" cy="786" r="7" fill="#86b2e6"/><circle cx="396" cy="531" r="5" fill="#d88cbc"/><circle cx="51" cy="512" r="5" fill="#a866b4"/><circle cx="76" cy="630" r="7" fill="#e2f2f8"/><circle cx="211" cy="373" r="5" fill="#e2f2f8"/><circle cx="571" cy="492" r="6" fill="#86b2e6"/><circle cx="273" cy="670" r="5" fill="#e2f2f8"/><circle cx="229" cy="422" r="7" fill="#a866b4"/><circle cx="109" cy="744" r="7" fill="#86b2e6"/><circle cx="364" cy="656" r="6" fill="#d88cbc"/><circle cx="652" cy="418" r="7" fill="#c5bde6"/></g><g clip-path="url(#cpR)" opacity="0.8"><circle cx="551" cy="587" r="5" fill="#9fd0ee"/><circle cx="618" cy="308" r="6" fill="#d88cbc"/><circle cx="127" cy="595" r="7" fill="#9fd0ee"/><circle cx="135" cy="719" r="7" fill="#a866b4"/><circle cx="164" cy="505" r="5" fill="#d88cbc"/><circle cx="57" cy="581" r="6" fill="#9fd0ee"/><circle cx="452" cy="539" r="7" fill="#7a52a8"/><circle cx="568" cy="783" r="6" fill="#9fd0ee"/><circle cx="456" cy="550" r="7" fill="#a866b4"/><circle cx="291" cy="490" r="4" fill="#e2f2f8"/><circle cx="501" cy="654" r="4" fill="#d88cbc"/><circle cx="150" cy="434" r="5" fill="#a866b4"/><circle cx="182" cy="426" r="6" fill="#d88cbc"/><circle cx="70" cy="420" r="6" fill="#d88cbc"/><circle cx="214" cy="768" r="4" fill="#86b2e6"/><circle cx="180" cy="348" r="6" fill="#86b2e6"/><circle cx="402" cy="679" r="5" fill="#86b2e6"/><circle cx="427" cy="791" r="4" fill="#9fd0ee"/><circle cx="645" cy="756" r="6" fill="#86b2e6"/><circle cx="198" cy="578" r="4" fill="#9fd0ee"/><circle cx="312" cy="582" r="6" fill="#86b2e6"/><circle cx="627" cy="736" r="5" fill="#a866b4"/><circle cx="334" cy="624" r="5" fill="#e2f2f8"/><circle cx="156" cy="375" r="5" fill="#86b2e6"/><circle cx="317" cy="565" r="5" fill="#e2f2f8"/><circle cx="298" cy="341" r="7" fill="#9fd0ee"/><circle cx="185" cy="586" r="7" fill="#9fd0ee"/><circle cx="341" cy="782" r="7" fill="#9fd0ee"/><circle cx="499" cy="815" r="6" fill="#a866b4"/><circle cx="627" cy="526" r="4" fill="#86b2e6"/><circle cx="193" cy="436" r="6" fill="#86b2e6"/><circle cx="136" cy="423" r="6" fill="#e2f2f8"/><circle cx="611" cy="711" r="5" fill="#e2f2f8"/><circle cx="83" cy="722" r="6" fill="#9fd0ee"/><circle cx="553" cy="527" r="6" fill="#d88cbc"/><circle cx="637" cy="374" r="5" fill="#a866b4"/><circle cx="258" cy="448" r="4" fill="#86b2e6"/><circle cx="361" cy="553" r="7" fill="#d88cbc"/><circle cx="306" cy="733" r="5" fill="#9fd0ee"/><circle cx="90" cy="844" r="7" fill="#a866b4"/><circle cx="70" cy="799" r="5" fill="#a866b4"/><circle cx="598" cy="555" r="4" fill="#7a52a8"/><circle cx="167" cy="774" r="6" fill="#c5bde6"/><circle cx="65" cy="669" r="7" fill="#7a52a8"/><circle cx="427" cy="625" r="6" fill="#9fd0ee"/><circle cx="177" cy="779" r="6" fill="#a866b4"/><circle cx="144" cy="390" r="6" fill="#c5bde6"/><circle cx="120" cy="575" r="6" fill="#e2f2f8"/><circle cx="448" cy="705" r="7" fill="#86b2e6"/><circle cx="80" cy="591" r="6" fill="#86b2e6"/><circle cx="594" cy="440" r="5" fill="#e2f2f8"/><circle cx="137" cy="442" r="5" fill="#7a52a8"/><circle cx="590" cy="510" r="7" fill="#d88cbc"/><circle cx="622" cy="353" r="6" fill="#e2f2f8"/><circle cx="672" cy="746" r="5" fill="#86b2e6"/><circle cx="479" cy="370" r="4" fill="#9fd0ee"/><circle cx="580" cy="373" r="7" fill="#9fd0ee"/><circle cx="272" cy="539" r="6" fill="#e2f2f8"/><circle cx="646" cy="504" r="5" fill="#d88cbc"/><circle cx="530" cy="490" r="5" fill="#a866b4"/><circle cx="653" cy="719" r="4" fill="#a866b4"/><circle cx="279" cy="320" r="5" fill="#c5bde6"/><circle cx="141" cy="343" r="4" fill="#c5bde6"/><circle cx="106" cy="346" r="6" fill="#a866b4"/><circle cx="112" cy="578" r="6" fill="#86b2e6"/><circle cx="145" cy="375" r="5" fill="#e2f2f8"/><circle cx="110" cy="834" r="5" fill="#d88cbc"/><circle cx="332" cy="417" r="7" fill="#d88cbc"/><circle cx="374" cy="403" r="7" fill="#a866b4"/><circle cx="223" cy="850" r="6" fill="#d88cbc"/><circle cx="468" cy="631" r="5" fill="#a866b4"/><circle cx="67" cy="782" r="5" fill="#a866b4"/><circle cx="344" cy="419" r="7" fill="#e2f2f8"/><circle cx="547" cy="511" r="6" fill="#86b2e6"/><circle cx="174" cy="632" r="5" fill="#d88cbc"/><circle cx="576" cy="777" r="4" fill="#a866b4"/><circle cx="72" cy="517" r="5" fill="#c5bde6"/><circle cx="247" cy="350" r="5" fill="#a866b4"/><circle cx="75" cy="480" r="7" fill="#c5bde6"/><circle cx="433" cy="407" r="5" fill="#e2f2f8"/><circle cx="332" cy="395" r="4" fill="#a866b4"/><circle cx="71" cy="742" r="5" fill="#9fd0ee"/><circle cx="690" cy="546" r="5" fill="#86b2e6"/><circle cx="405" cy="728" r="5" fill="#e2f2f8"/><circle cx="612" cy="451" r="5" fill="#d88cbc"/><circle cx="113" cy="822" r="4" fill="#e2f2f8"/><circle cx="96" cy="635" r="7" fill="#9fd0ee"/><circle cx="664" cy="665" r="5" fill="#86b2e6"/><circle cx="408" cy="832" r="7" fill="#e2f2f8"/><circle cx="647" cy="492" r="7" fill="#7a52a8"/><circle cx="125" cy="521" r="6" fill="#c5bde6"/><circle cx="300" cy="725" r="5" fill="#c5bde6"/><circle cx="374" cy="820" r="7" fill="#a866b4"/><circle cx="394" cy="702" r="7" fill="#86b2e6"/><circle cx="294" cy="618" r="7" fill="#7a52a8"/><circle cx="630" cy="826" r="6" fill="#a866b4"/><circle cx="240" cy="770" r="5" fill="#86b2e6"/><circle cx="217" cy="458" r="5" fill="#9fd0ee"/><circle cx="241" cy="535" r="7" fill="#86b2e6"/><circle cx="561" cy="777" r="4" fill="#7a52a8"/><circle cx="160" cy="353" r="6" fill="#a866b4"/><circle cx="353" cy="329" r="7" fill="#7a52a8"/><circle cx="437" cy="677" r="7" fill="#86b2e6"/><circle cx="63" cy="332" r="6" fill="#a866b4"/><circle cx="197" cy="469" r="5" fill="#e2f2f8"/><circle cx="714" cy="620" r="6" fill="#9fd0ee"/><circle cx="106" cy="553" r="5" fill="#a866b4"/><circle cx="171" cy="646" r="5" fill="#a866b4"/><circle cx="402" cy="814" r="5" fill="#e2f2f8"/><circle cx="719" cy="383" r="5" fill="#d88cbc"/><circle cx="556" cy="829" r="5" fill="#c5bde6"/><circle cx="220" cy="336" r="7" fill="#c5bde6"/><circle cx="472" cy="523" r="5" fill="#c5bde6"/><circle cx="236" cy="448" r="7" fill="#9fd0ee"/><circle cx="430" cy="654" r="5" fill="#a866b4"/><circle cx="41" cy="766" r="4" fill="#d88cbc"/><circle cx="281" cy="402" r="6" fill="#7a52a8"/><circle cx="277" cy="520" r="6" fill="#7a52a8"/><circle cx="300" cy="548" r="6" fill="#86b2e6"/><circle cx="439" cy="443" r="4" fill="#a866b4"/><circle cx="489" cy="385" r="5" fill="#86b2e6"/><circle cx="583" cy="544" r="6" fill="#9fd0ee"/><circle cx="50" cy="807" r="4" fill="#9fd0ee"/><circle cx="708" cy="619" r="4" fill="#7a52a8"/><circle cx="296" cy="470" r="5" fill="#e2f2f8"/><circle cx="301" cy="596" r="5" fill="#7a52a8"/><circle cx="576" cy="536" r="5" fill="#d88cbc"/><circle cx="129" cy="333" r="6" fill="#9fd0ee"/><circle cx="636" cy="321" r="4" fill="#9fd0ee"/><circle cx="308" cy="318" r="7" fill="#9fd0ee"/><circle cx="259" cy="681" r="5" fill="#e2f2f8"/><circle cx="282" cy="581" r="5" fill="#d88cbc"/><circle cx="439" cy="584" r="4" fill="#9fd0ee"/><circle cx="268" cy="668" r="5" fill="#e2f2f8"/><circle cx="452" cy="849" r="6" fill="#7a52a8"/><circle cx="439" cy="601" r="6" fill="#9fd0ee"/><circle cx="116" cy="516" r="5" fill="#e2f2f8"/><circle cx="92" cy="727" r="6" fill="#7a52a8"/><circle cx="169" cy="712" r="5" fill="#9fd0ee"/><circle cx="155" cy="437" r="6" fill="#d88cbc"/><circle cx="79" cy="817" r="7" fill="#d88cbc"/><circle cx="416" cy="363" r="7" fill="#a866b4"/><circle cx="254" cy="628" r="4" fill="#9fd0ee"/><circle cx="144" cy="466" r="5" fill="#d88cbc"/><circle cx="294" cy="356" r="6" fill="#e2f2f8"/><circle cx="226" cy="410" r="7" fill="#86b2e6"/><circle cx="666" cy="567" r="7" fill="#9fd0ee"/><circle cx="128" cy="385" r="5" fill="#e2f2f8"/><circle cx="261" cy="517" r="5" fill="#a866b4"/><circle cx="296" cy="514" r="4" fill="#86b2e6"/><circle cx="239" cy="590" r="7" fill="#a866b4"/><circle cx="507" cy="434" r="6" fill="#d88cbc"/><circle cx="44" cy="460" r="5" fill="#a866b4"/><circle cx="308" cy="636" r="7" fill="#7a52a8"/><circle cx="53" cy="739" r="5" fill="#86b2e6"/><circle cx="518" cy="322" r="5" fill="#9fd0ee"/><circle cx="385" cy="304" r="5" fill="#c5bde6"/><circle cx="318" cy="551" r="4" fill="#d88cbc"/><circle cx="481" cy="401" r="4" fill="#e2f2f8"/><circle cx="670" cy="567" r="5" fill="#e2f2f8"/><circle cx="334" cy="576" r="5" fill="#e2f2f8"/><circle cx="143" cy="798" r="5" fill="#d88cbc"/><circle cx="55" cy="456" r="5" fill="#9fd0ee"/><circle cx="437" cy="666" r="4" fill="#a866b4"/><circle cx="598" cy="781" r="5" fill="#7a52a8"/><circle cx="207" cy="749" r="6" fill="#d88cbc"/><circle cx="176" cy="556" r="4" fill="#86b2e6"/><circle cx="526" cy="595" r="6" fill="#9fd0ee"/><circle cx="614" cy="413" r="5" fill="#c5bde6"/><circle cx="349" cy="348" r="5" fill="#c5bde6"/><circle cx="260" cy="710" r="6" fill="#c5bde6"/><circle cx="198" cy="677" r="5" fill="#7a52a8"/><circle cx="325" cy="361" r="7" fill="#9fd0ee"/><circle cx="130" cy="336" r="7" fill="#86b2e6"/><circle cx="260" cy="475" r="5" fill="#d88cbc"/><circle cx="670" cy="333" r="4" fill="#86b2e6"/><circle cx="392" cy="432" r="4" fill="#c5bde6"/><circle cx="367" cy="789" r="6" fill="#86b2e6"/><circle cx="328" cy="745" r="7" fill="#86b2e6"/><circle cx="245" cy="655" r="5" fill="#d88cbc"/><circle cx="90" cy="745" r="5" fill="#d88cbc"/><circle cx="342" cy="545" r="7" fill="#d88cbc"/><circle cx="537" cy="827" r="5" fill="#9fd0ee"/><circle cx="476" cy="696" r="6" fill="#9fd0ee"/><circle cx="246" cy="769" r="5" fill="#e2f2f8"/><circle cx="69" cy="536" r="5" fill="#c5bde6"/><circle cx="326" cy="308" r="5" fill="#c5bde6"/><circle cx="461" cy="520" r="5" fill="#d88cbc"/><circle cx="175" cy="648" r="4" fill="#c5bde6"/><circle cx="336" cy="792" r="6" fill="#d88cbc"/><circle cx="156" cy="818" r="5" fill="#7a52a8"/><circle cx="167" cy="320" r="4" fill="#e2f2f8"/><circle cx="548" cy="478" r="5" fill="#7a52a8"/><circle cx="115" cy="472" r="5" fill="#c5bde6"/><circle cx="85" cy="762" r="5" fill="#d88cbc"/><circle cx="223" cy="643" r="6" fill="#9fd0ee"/><circle cx="345" cy="636" r="5" fill="#86b2e6"/><circle cx="309" cy="305" r="5" fill="#e2f2f8"/><circle cx="544" cy="664" r="5" fill="#7a52a8"/><circle cx="151" cy="437" r="6" fill="#9fd0ee"/><circle cx="391" cy="624" r="5" fill="#e2f2f8"/><circle cx="560" cy="351" r="4" fill="#c5bde6"/><circle cx="254" cy="606" r="5" fill="#e2f2f8"/><circle cx="619" cy="463" r="5" fill="#d88cbc"/><circle cx="534" cy="353" r="6" fill="#d88cbc"/><circle cx="432" cy="701" r="5" fill="#d88cbc"/><circle cx="381" cy="328" r="7" fill="#86b2e6"/><circle cx="96" cy="755" r="4" fill="#e2f2f8"/><circle cx="206" cy="531" r="7" fill="#9fd0ee"/><circle cx="273" cy="513" r="6" fill="#9fd0ee"/><circle cx="244" cy="753" r="6" fill="#9fd0ee"/><circle cx="596" cy="567" r="5" fill="#d88cbc"/><circle cx="499" cy="762" r="5" fill="#86b2e6"/><circle cx="411" cy="306" r="7" fill="#86b2e6"/><circle cx="713" cy="829" r="6" fill="#d88cbc"/><circle cx="462" cy="578" r="4" fill="#e2f2f8"/><circle cx="594" cy="366" r="5" fill="#a866b4"/><circle cx="179" cy="717" r="5" fill="#c5bde6"/><circle cx="322" cy="775" r="5" fill="#9fd0ee"/><circle cx="43" cy="826" r="4" fill="#c5bde6"/></g><circle cx="114" cy="685" r="12" fill="#c22838" opacity="0.9"/><circle cx="114" cy="685" r="4" fill="none" stroke="#f4dede" stroke-width="2" opacity="0.8"/><circle cx="116" cy="693" r="10" fill="#c22838" opacity="0.9"/><circle cx="116" cy="693" r="4" fill="none" stroke="#f4dede" stroke-width="2" opacity="0.8"/><circle cx="127" cy="696" r="8" fill="#c22838" opacity="0.9"/><circle cx="127" cy="696" r="4" fill="none" stroke="#f4dede" stroke-width="2" opacity="0.8"/><circle cx="129" cy="690" r="8" fill="#c22838" opacity="0.9"/><circle cx="129" cy="690" r="4" fill="none" stroke="#f4dede" stroke-width="2" opacity="0.8"/><circle cx="142" cy="702" r="8" fill="#c22838" opacity="0.9"/><circle cx="142" cy="702" r="4" fill="none" stroke="#f4dede" stroke-width="2" opacity="0.8"/><circle cx="149" cy="704" r="12" fill="#c22838" opacity="0.9"/><circle cx="149" cy="704" r="4" fill="none" stroke="#f4dede" stroke-width="2" opacity="0.8"/><circle cx="151" cy="699" r="10" fill="#c22838" opacity="0.9"/><circle cx="151" cy="699" r="4" fill="none" stroke="#f4dede" stroke-width="2" opacity="0.8"/><circle cx="161" cy="711" r="10" fill="#c22838" opacity="0.9"/><circle cx="161" cy="711" r="4" fill="none" stroke="#f4dede" stroke-width="2" opacity="0.8"/><circle cx="171" cy="705" r="10" fill="#c22838" opacity="0.9"/><circle cx="171" cy="705" r="4" fill="none" stroke="#f4dede" stroke-width="2" opacity="0.8"/><circle cx="180" cy="714" r="10" fill="#c22838" opacity="0.9"/><circle cx="180" cy="714" r="4" fill="none" stroke="#f4dede" stroke-width="2" opacity="0.8"/><circle cx="188" cy="719" r="8" fill="#c22838" opacity="0.9"/><circle cx="188" cy="719" r="4" fill="none" stroke="#f4dede" stroke-width="2" opacity="0.8"/><circle cx="192" cy="717" r="10" fill="#c22838" opacity="0.9"/><circle cx="192" cy="717" r="4" fill="none" stroke="#f4dede" stroke-width="2" opacity="0.8"/><circle cx="197" cy="714" r="10" fill="#c22838" opacity="0.9"/><circle cx="197" cy="714" r="4" fill="none" stroke="#f4dede" stroke-width="2" opacity="0.8"/><circle cx="204" cy="714" r="8" fill="#c22838" opacity="0.9"/><circle cx="204" cy="714" r="4" fill="none" stroke="#f4dede" stroke-width="2" opacity="0.8"/><circle cx="319" cy="766" r="10" fill="#c22838" opacity="0.9"/><circle cx="319" cy="766" r="4" fill="none" stroke="#f4dede" stroke-width="2" opacity="0.8"/><circle cx="329" cy="771" r="10" fill="#c22838" opacity="0.9"/><circle cx="329" cy="771" r="4" fill="none" stroke="#f4dede" stroke-width="2" opacity="0.8"/><circle cx="343" cy="787" r="10" fill="#c22838" opacity="0.9"/><circle cx="343" cy="787" r="4" fill="none" stroke="#f4dede" stroke-width="2" opacity="0.8"/><circle cx="352" cy="787" r="8" fill="#c22838" opacity="0.9"/><circle cx="352" cy="787" r="4" fill="none" stroke="#f4dede" stroke-width="2" opacity="0.8"/><circle cx="353" cy="783" r="12" fill="#c22838" opacity="0.9"/><circle cx="353" cy="783" r="4" fill="none" stroke="#f4dede" stroke-width="2" opacity="0.8"/><circle cx="365" cy="793" r="12" fill="#c22838" opacity="0.9"/><circle cx="365" cy="793" r="4" fill="none" stroke="#f4dede" stroke-width="2" opacity="0.8"/><circle cx="378" cy="797" r="8" fill="#c22838" opacity="0.9"/><circle cx="378" cy="797" r="4" fill="none" stroke="#f4dede" stroke-width="2" opacity="0.8"/><circle cx="388" cy="803" r="10" fill="#c22838" opacity="0.9"/><circle cx="388" cy="803" r="4" fill="none" stroke="#f4dede" stroke-width="2" opacity="0.8"/><circle cx="389" cy="800" r="12" fill="#c22838" opacity="0.9"/><circle cx="389" cy="800" r="4" fill="none" stroke="#f4dede" stroke-width="2" opacity="0.8"/><circle cx="409" cy="818" r="12" fill="#c22838" opacity="0.9"/><circle cx="409" cy="818" r="4" fill="none" stroke="#f4dede" stroke-width="2" opacity="0.8"/><circle cx="416" cy="817" r="10" fill="#c22838" opacity="0.9"/><circle cx="416" cy="817" r="4" fill="none" stroke="#f4dede" stroke-width="2" opacity="0.8"/><circle cx="422" cy="823" r="10" fill="#c22838" opacity="0.9"/><circle cx="422" cy="823" r="4" fill="none" stroke="#f4dede" stroke-width="2" opacity="0.8"/><circle cx="426" cy="826" r="10" fill="#c22838" opacity="0.9"/><circle cx="426" cy="826" r="4" fill="none" stroke="#f4dede" stroke-width="2" opacity="0.8"/><circle cx="435" cy="831" r="8" fill="#c22838" opacity="0.9"/><circle cx="435" cy="831" r="4" fill="none" stroke="#f4dede" stroke-width="2" opacity="0.8"/><circle cx="598" cy="556" r="10" fill="#c22838" opacity="0.9"/><circle cx="598" cy="556" r="4" fill="none" stroke="#f4dede" stroke-width="2" opacity="0.8"/><circle cx="601" cy="576" r="8" fill="#c22838" opacity="0.9"/><circle cx="601" cy="576" r="4" fill="none" stroke="#f4dede" stroke-width="2" opacity="0.8"/><circle cx="610" cy="577" r="12" fill="#c22838" opacity="0.9"/><circle cx="610" cy="577" r="4" fill="none" stroke="#f4dede" stroke-width="2" opacity="0.8"/><circle cx="616" cy="595" r="10" fill="#c22838" opacity="0.9"/><circle cx="616" cy="595" r="4" fill="none" stroke="#f4dede" stroke-width="2" opacity="0.8"/><circle cx="621" cy="596" r="12" fill="#c22838" opacity="0.9"/><circle cx="621" cy="596" r="4" fill="none" stroke="#f4dede" stroke-width="2" opacity="0.8"/><circle cx="624" cy="601" r="8" fill="#c22838" opacity="0.9"/><circle cx="624" cy="601" r="4" fill="none" stroke="#f4dede" stroke-width="2" opacity="0.8"/><circle cx="618" cy="620" r="10" fill="#c22838" opacity="0.9"/><circle cx="618" cy="620" r="4" fill="none" stroke="#f4dede" stroke-width="2" opacity="0.8"/><circle cx="625" cy="619" r="10" fill="#c22838" opacity="0.9"/><circle cx="625" cy="619" r="4" fill="none" stroke="#f4dede" stroke-width="2" opacity="0.8"/><circle cx="629" cy="627" r="10" fill="#c22838" opacity="0.9"/><circle cx="629" cy="627" r="4" fill="none" stroke="#f4dede" stroke-width="2" opacity="0.8"/><circle cx="631" cy="640" r="12" fill="#c22838" opacity="0.9"/><circle cx="631" cy="640" r="4" fill="none" stroke="#f4dede" stroke-width="2" opacity="0.8"/><circle cx="638" cy="650" r="8" fill="#c22838" opacity="0.9"/><circle cx="638" cy="650" r="4" fill="none" stroke="#f4dede" stroke-width="2" opacity="0.8"/><circle cx="642" cy="656" r="8" fill="#c22838" opacity="0.9"/><circle cx="642" cy="656" r="4" fill="none" stroke="#f4dede" stroke-width="2" opacity="0.8"/><circle cx="642" cy="669" r="8" fill="#c22838" opacity="0.9"/><circle cx="642" cy="669" r="4" fill="none" stroke="#f4dede" stroke-width="2" opacity="0.8"/><circle cx="646" cy="687" r="10" fill="#c22838" opacity="0.9"/><circle cx="646" cy="687" r="4" fill="none" stroke="#f4dede" stroke-width="2" opacity="0.8"/><polyline points="40,485 525,645 700,490" fill="none" stroke="#e6f4e4" stroke-width="4" opacity="0.7"/><polyline points="490,378 525,645 445,855" fill="none" stroke="#eaf6e8" stroke-width="5" opacity="0.8"/><polygon points="290,328 355,342 318,812 225,725 262,560" fill="#df869c"/><polygon points="262,560 225,725 318,812 330,655" fill="#c97088" opacity="0.6"/><g transform="translate(250,625) rotate(-15) scale(1,1.1)"><circle cx="40" cy="0" r="28" fill="#f4c8d6"/><circle cx="20" cy="35" r="28" fill="#f4c8d6"/><circle cx="-20" cy="35" r="28" fill="#f4c8d6"/><circle cx="-40" cy="0" r="28" fill="#f4c8d6"/><circle cx="-20" cy="-35" r="28" fill="#f4c8d6"/><circle cx="20" cy="-35" r="28" fill="#f4c8d6"/><circle r="45" fill="#f4c8d6"/><circle r="33" fill="#5b2219"/><text y="0" text-anchor="middle" font-size="16" font-weight="bold" fill="#f0d8d8" font-family="Liberation Sans">SWEET</text><text y="18" text-anchor="middle" font-size="16" font-weight="bold" fill="#f0d8d8" font-family="Liberation Sans">DESSERT</text></g><polygon points="175,305 355,248 340,335" fill="#a8a690"/><polygon points="340,335 355,248 610,298 490,378" fill="#cfcdb3"/><polygon points="175,305 120,135 255,118 355,248" fill="#cfcdb3"/><polygon points="355,248 470,25 680,40 705,85 610,298" fill="#dddcc1"/><polyline points="470,25 680,40 705,85" fill="none" stroke="#c6c4aa" stroke-width="4"/><polygon points="490,378 610,298 740,430 690,515" fill="#d8d6bc"/><polygon points="610,298 740,430 720,440" fill="#c8c6ac"/></svg></body></html>
